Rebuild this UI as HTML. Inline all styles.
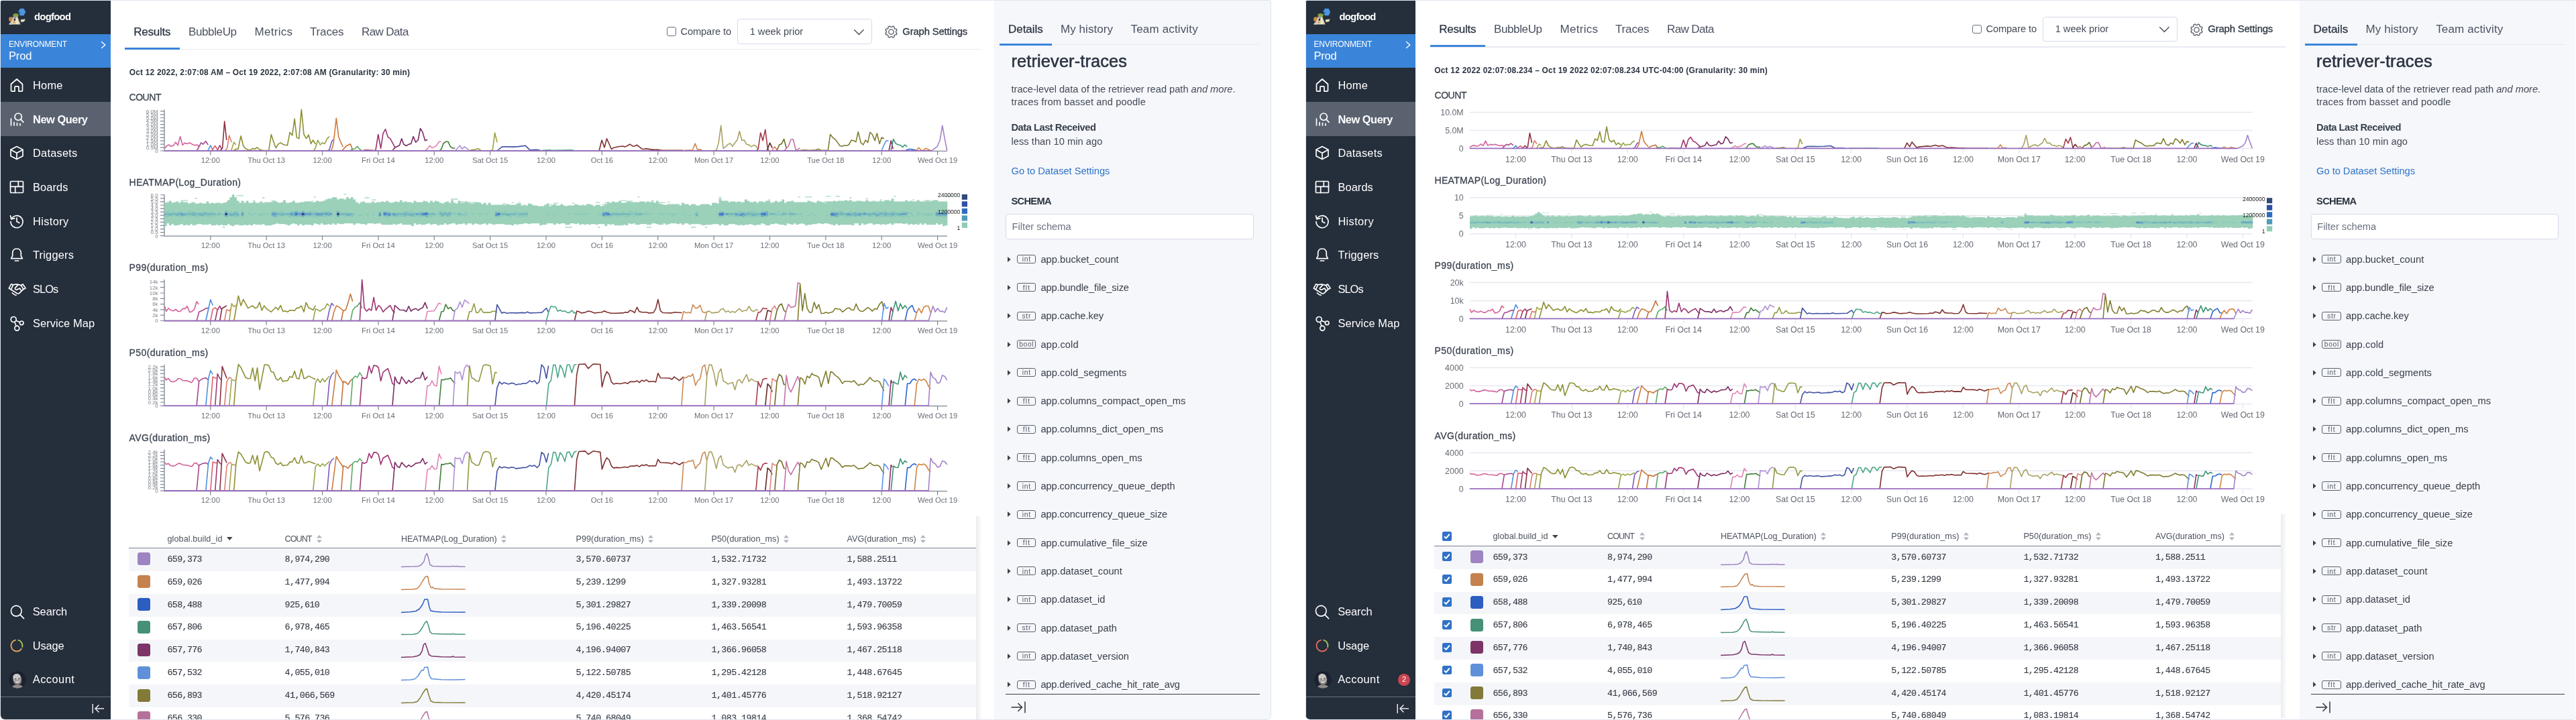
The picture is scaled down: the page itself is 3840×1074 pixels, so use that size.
<!DOCTYPE html><html lang="en"><head><meta charset="utf-8"><title>Query results</title><style>
html,body{margin:0;padding:0;background:#fff;}
body{width:3840px;height:1074px;overflow:hidden;position:relative;font-family:"Liberation Sans",sans-serif;}
.panel{position:absolute;top:0;width:1895px;height:1074px;overflow:hidden;background:transparent;will-change:transform;}
.t{position:absolute;white-space:nowrap;}
svg{overflow:visible;}
</style></head><body><section class="panel" style="left:0px"><div style="position:absolute;left:1px;top:1px;width:164px;height:1071.6px;background:#252e3b;border-radius:1.500px 0 0 6px;"></div><svg style="position:absolute;left:0px;top:0px;" width="44" height="44" viewBox="0 0 44 44"><path d="M27.100 18 29.900 12.800h5.600L38.200 18l-2.700 5.300h-5.600z" fill="#4a96e4"/><path d="M26.500 18.200h3.600v1.600h-3z" fill="#252e3b"/><circle cx="16.400" cy="28.700" r="3.400" fill="#c98848"/><path d="M21 21l4.200 1 2.800 8 2.600 6.500H13.500L18 30z" fill="#d9d3b2"/><ellipse cx="23.500" cy="23" rx="4.200" ry="3" fill="#86a043"/><ellipse cx="22.300" cy="26" rx="2" ry="2.200" fill="#9097a0"/><circle cx="21.800" cy="29.600" r="1.300" fill="#10131a"/><path d="M24.500 24l2 6 .5 6h-3z" fill="#eee9cf"/><circle cx="21" cy="33.300" r="1.300" fill="#dc8a3c"/><path d="M14 34.500l3-2 1.500 4H13.200z" fill="#c9c9c9"/><path d="M30.800 29.200 37.800 28.600 36 32.200 31.300 33z" fill="#e3e0b6"/></svg><span class="t" style="left:51px;top:15.8px;font-size:14.8px;line-height:19px;color:#fff;font-weight:700;letter-spacing:-0.7px;">dogfood</span><div style="position:absolute;left:1px;top:50.8px;width:164px;height:50.4px;background:#3a85d9;"></div><span class="t" style="left:13px;top:58.2px;font-size:12px;line-height:16px;color:#fff;letter-spacing:-0.17px;">ENVIRONMENT</span><span class="t" style="left:13px;top:73.1px;font-size:16.6px;line-height:22px;color:#fff;letter-spacing:-0.22px;">Prod</span><svg style="position:absolute;left:149px;top:60.5px;" width="10" height="12" viewBox="0 0 10 12"><path d="M2.500 1.500 7.800 6 2.500 10.500" fill="none" stroke="#fff" stroke-width="1.400" stroke-linecap="round" stroke-linejoin="round"/></svg><svg style="position:absolute;left:13.2px;top:114.9px;" width="24" height="24" viewBox="0 0 24 24"><path fill="none" stroke="#fff" stroke-width="1.7" stroke-linecap="round" stroke-linejoin="round" d="M3.5 10.5 12 3l8.5 7.5V20a1.2 1.2 0 0 1-1.2 1.2H15v-6.4a1 1 0 0 0-1-1h-4a1 1 0 0 0-1 1v6.4H4.7A1.2 1.2 0 0 1 3.500 20z"/></svg><span class="t" style="left:49px;top:116.9px;font-size:16.4px;line-height:21px;color:#fff;letter-spacing:0.22px;">Home</span><div style="position:absolute;left:1px;top:152.1px;width:164px;height:50.7px;background:#5a6270;"></div><svg style="position:absolute;left:13.2px;top:165.6px;" width="24" height="24" viewBox="0 0 24 24"><g fill="none" stroke="#fff" stroke-width="1.7" stroke-linecap="round" stroke-linejoin="round"><circle cx="14.2" cy="8.2" r="5.2"/><path d="M18 12.2 22 16.400M3.5 11v10M8 16.500V21M12.500 17.500V21M17 18.500V21"/></g></svg><span class="t" style="left:49px;top:167.6px;font-size:16.4px;line-height:21px;color:#fff;font-weight:700;letter-spacing:-0.46px;">New Query</span><svg style="position:absolute;left:13.2px;top:216.3px;" width="24" height="24" viewBox="0 0 24 24"><g fill="none" stroke="#fff" stroke-width="1.7" stroke-linecap="round" stroke-linejoin="round"><path d="M12 2.500 21 7.300v9.400L12 21.500 3 16.700V7.300z"/><path d="M3.300 7.500 12 12.200l8.700-4.700M12 12.200v9"/></g></svg><span class="t" style="left:49px;top:218.3px;font-size:16.4px;line-height:21px;color:#fff;letter-spacing:0.23px;">Datasets</span><svg style="position:absolute;left:13.2px;top:267px;" width="24" height="24" viewBox="0 0 24 24"><g fill="none" stroke="#fff" stroke-width="1.7" stroke-linecap="round" stroke-linejoin="round"><rect x="2.500" y="3.500" width="19" height="17" rx="1.200"/><path d="M2.500 11.300h19M14.300 3.500v7.800M9.700 11.300v9.200"/></g></svg><span class="t" style="left:49px;top:269px;font-size:16.4px;line-height:21px;color:#fff;letter-spacing:0.09px;">Boards</span><svg style="position:absolute;left:13.2px;top:317.7px;" width="24" height="24" viewBox="0 0 24 24"><g fill="none" stroke="#fff" stroke-width="1.7" stroke-linecap="round" stroke-linejoin="round"><path d="M4.200 8.200A9 9 0 1 1 3 12.500"/><path d="M2.600 3.800 3.800 8.800 8.800 7.600"/><path d="M12 7v5.400l3.800 2.200"/></g></svg><span class="t" style="left:49px;top:319.7px;font-size:16.4px;line-height:21px;color:#fff;letter-spacing:0.37px;">History</span><svg style="position:absolute;left:13.2px;top:368.4px;" width="24" height="24" viewBox="0 0 24 24"><g fill="none" stroke="#fff" stroke-width="1.7" stroke-linecap="round" stroke-linejoin="round"><path d="M12 2.800c-3.900 0-6.300 2.900-6.300 6.600v4.300L3.600 17.600h16.800l-2.100-3.900V9.400c0-3.700-2.400-6.600-6.300-6.600z"/><path d="M9.300 21h5.400"/></g></svg><span class="t" style="left:49px;top:370.4px;font-size:16.4px;line-height:21px;color:#fff;letter-spacing:0.2px;">Triggers</span><svg style="position:absolute;left:12.75px;top:423.3px;" width="25.4" height="18.2" viewBox="0 0 25.400 18.200"><g fill="none" stroke="#fff" stroke-width="1.7" stroke-linecap="round" stroke-linejoin="round" stroke-width="1.600"><path d="M3.700.8 6.600 1.800 3.400 9 .3 7.100z"/><path d="M21.100 1 18.500 2.600 21.900 8.400 25.100 6.900z"/><path d="M6.600 1.800C9 1.200 11 .9 12.500 1.100L18.500 2.600"/><path d="M13.400 2.400 9.400 6.900c-.5 1.300 1.200 2.600 2.700 2.300l4.300-2.300 2.400 3.600"/><path d="M3.400 9l9.300 5.700c1 .5 2 .5 2.800-.1L21.900 8.400"/><path d="M5.300 14c1.800 1.800 3.700 2.900 5.800 3.400"/></g></svg><span class="t" style="left:49px;top:421.1px;font-size:16.4px;line-height:21px;color:#fff;letter-spacing:-0.93px;">SLOs</span><svg style="position:absolute;left:13.2px;top:469.8px;" width="24" height="24" viewBox="0 0 24 24"><g fill="none" stroke="#fff" stroke-width="1.7" stroke-linecap="round" stroke-linejoin="round"><circle cx="7.200" cy="6.500" r="4"/><circle cx="19.200" cy="11.800" r="2.800"/><circle cx="12.300" cy="19.600" r="3.500"/><path d="M10.900 8.200 16.600 10.700M8.900 10.200 11 16.300"/></g></svg><span class="t" style="left:49px;top:471.8px;font-size:16.4px;line-height:21px;color:#fff;letter-spacing:0.09px;">Service Map</span><svg style="position:absolute;left:13.55px;top:900.85px;" width="23.5" height="23.5" viewBox="0 0 24 24"><g fill="none" stroke="#fff" stroke-width="1.7" stroke-linecap="round" stroke-linejoin="round" stroke-width="1.800"><circle cx="10.500" cy="10.500" r="8"/><path d="M16.300 16.300 22 22"/></g></svg><span class="t" style="left:48.8px;top:902.2px;font-size:16.4px;line-height:21px;color:#fff;letter-spacing:-0.11px;">Search</span><svg style="position:absolute;left:13.3px;top:951px;" width="24" height="24" viewBox="0 0 24 24"><circle cx="12" cy="12" r="8.500" fill="none" stroke="#dba25f" stroke-width="1.900" stroke-dasharray="34.100 19.300" transform="rotate(30 12 12)"/><circle cx="12" cy="12" r="8.500" fill="none" stroke="#9fc05a" stroke-width="1.900" stroke-dasharray="14.800 38.600" transform="rotate(-80 12 12)"/></svg><span class="t" style="left:48.8px;top:952.8px;font-size:16.4px;line-height:21px;color:#fff;letter-spacing:-0.12px;">Usage</span><svg style="position:absolute;left:13.3px;top:1001px;" width="26" height="26" viewBox="0 0 26 26"><defs><clipPath id="av0"><circle cx="13" cy="13" r="12.700"/></clipPath></defs><circle cx="13" cy="13" r="12.700" fill="#1b2130"/><g clip-path="url(#av0)"><path d="M3 27q1.500-5.500 7-6.200h6q5.500.7 7 6.200z" fill="#8f8c8c"/><ellipse cx="12.800" cy="12.300" rx="6.300" ry="8.200" fill="#a7a2a0" transform="rotate(-6 13 13)"/><ellipse cx="12.300" cy="8.300" rx="5.600" ry="4.400" fill="#cbc7c5" transform="rotate(-6 13 13)"/><path d="M7.500 14.500q5.500 8.500 11.500-1l-.3 4.500q-5.200 6-10.600.5z" fill="#7b7573"/><ellipse cx="10.300" cy="11.800" rx="1.100" ry=".7" fill="#3c3a3a"/><ellipse cx="15.300" cy="11.300" rx="1.100" ry=".7" fill="#3c3a3a"/><path d="M10.300 15.800q3 2.400 5.800-.4" stroke="#f2f0ee" stroke-width="1.200" fill="none"/></g></svg><span class="t" style="left:48.8px;top:1003.4px;font-size:16.4px;line-height:21px;color:#fff;letter-spacing:0.46px;">Account</span><div style="position:absolute;left:1px;top:1039.3px;width:164px;height:1px;background:#6a7180;"></div><svg style="position:absolute;left:137px;top:1049px;" width="19" height="16" viewBox="0 0 19 16"><path d="M1.200 1v14M18 8H5M10.500 2.500 5 8l5.500 5.500" fill="none" stroke="#e6e8ec" stroke-width="1.500"/></svg><span class="t" style="left:199.3px;top:36.6px;font-size:17px;line-height:22px;color:#2b3340;letter-spacing:-0.23px;-webkit-text-stroke:0.25px #2b3340;">Results</span><span class="t" style="left:281px;top:36.6px;font-size:17px;line-height:22px;color:#4a5160;letter-spacing:-0.38px;">BubbleUp</span><span class="t" style="left:379.5px;top:36.6px;font-size:17px;line-height:22px;color:#4a5160;letter-spacing:0.29px;">Metrics</span><span class="t" style="left:462px;top:36.6px;font-size:17px;line-height:22px;color:#4a5160;letter-spacing:-0.15px;">Traces</span><span class="t" style="left:539px;top:36.6px;font-size:17px;line-height:22px;color:#4a5160;letter-spacing:-0.61px;">Raw Data</span><div style="position:absolute;left:186.2px;top:72.5px;width:1274.4px;height:1.5px;background:#e8ebf2;"></div><div style="position:absolute;left:186.2px;top:70.7px;width:81.6px;height:3px;background:#3a85d9;"></div><div style="position:absolute;left:994px;top:40.2px;width:13.6px;height:13.4px;border:1.500px solid #6b7280;border-radius:3px;box-sizing:border-box;background:#fff;"></div><span class="t" style="left:1014.4px;top:37.5px;font-size:14.7px;line-height:19px;color:#444b57;letter-spacing:-0.12px;">Compare to</span><div style="position:absolute;left:1099px;top:28.1px;width:200.7px;height:37.6px;border:1.500px solid #d3dae8;border-radius:4.500px;box-sizing:border-box;background:#fff;"></div><span class="t" style="left:1117.7px;top:37.5px;font-size:14.7px;line-height:19px;color:#444b57;letter-spacing:-0.05px;">1 week prior</span><svg style="position:absolute;left:1271.5px;top:42.5px;" width="17" height="10" viewBox="0 0 17 10"><path d="M1.200 1.200 8.400 8.400 15.600 1.200" fill="none" stroke="#555b66" stroke-width="1.500"/></svg><svg style="position:absolute;left:1318.3px;top:36.9px;" width="21" height="21" viewBox="0 0 24 24"><g fill="none" stroke="#555b66" stroke-width="1.500" stroke-linejoin="round"><circle cx="12" cy="12" r="4.200"/><path d="M21.27 15.84L21 16.44L20.69 17.02L19.57 17.06L18.48 16.97L18.14 17.38L17.77 17.77L17.38 18.14L16.97 18.48L17.06 19.57L17.02 20.69L16.44 21L15.84 21.27L15.23 21.5L14.6 21.7L13.78 20.93L13.07 20.09L12.53 20.15L12 20.16L11.47 20.15L10.93 20.09L10.22 20.93L9.4 21.7L8.77 21.5L8.16 21.27L7.56 21L6.98 20.69L6.94 19.57L7.03 18.48L6.62 18.14L6.23 17.77L5.86 17.38L5.52 16.97L4.43 17.06L3.31 17.02L3 16.44L2.73 15.84L2.5 15.23L2.3 14.6L3.07 13.78L3.91 13.07L3.85 12.53L3.84 12L3.85 11.47L3.91 10.93L3.07 10.22L2.3 9.4L2.5 8.77L2.73 8.16L3 7.56L3.31 6.98L4.43 6.94L5.52 7.03L5.86 6.62L6.23 6.23L6.62 5.86L7.03 5.52L6.94 4.43L6.98 3.31L7.56 3L8.16 2.73L8.77 2.5L9.4 2.3L10.22 3.07L10.93 3.91L11.47 3.85L12 3.84L12.53 3.85L13.07 3.91L13.78 3.07L14.6 2.3L15.23 2.5L15.84 2.73L16.44 3L17.02 3.31L17.06 4.43L16.97 5.52L17.38 5.86L17.77 6.23L18.14 6.62L18.48 7.03L19.57 6.94L20.69 6.98L21 7.56L21.27 8.16L21.5 8.77L21.7 9.4L20.93 10.22L20.09 10.93L20.15 11.47L20.16 12L20.15 12.53L20.09 13.07L20.93 13.78L21.7 14.6L21.5 15.23z"/></g></svg><span class="t" style="left:1345.3px;top:37.5px;font-size:14.9px;line-height:19px;color:#2f3744;letter-spacing:-0.18px;-webkit-text-stroke:0.3px #2f3744;">Graph Settings</span><span class="t" style="left:192.75px;top:100.95px;font-size:11.9px;line-height:15px;color:#2b3340;font-weight:700;letter-spacing:0.22px;">Oct 12 2022, 2:07:08 AM &#8211; Oct 19 2022, 2:07:08 AM (Granularity: 30 min)</span><span class="t" style="left:192.5px;top:136.1px;font-size:14px;line-height:18px;color:#3c4350;letter-spacing:-0.45px;-webkit-text-stroke:0.3px #3c4350;">COUNT</span><span class="t" style="left:192.5px;top:263px;font-size:14px;line-height:18px;color:#3c4350;letter-spacing:0.32px;-webkit-text-stroke:0.3px #3c4350;">HEATMAP(Log_Duration)</span><span class="t" style="left:192.5px;top:389.9px;font-size:14px;line-height:18px;color:#3c4350;letter-spacing:0.43px;-webkit-text-stroke:0.3px #3c4350;">P99(duration_ms)</span><span class="t" style="left:192.5px;top:516.8px;font-size:14px;line-height:18px;color:#3c4350;letter-spacing:0.43px;-webkit-text-stroke:0.3px #3c4350;">P50(duration_ms)</span><span class="t" style="left:192.5px;top:643.7px;font-size:14px;line-height:18px;color:#3c4350;letter-spacing:0.39px;-webkit-text-stroke:0.3px #3c4350;">AVG(duration_ms)</span><svg style="position:absolute;left:0px;top:0px;font-family:'Liberation Sans', sans-serif;" width="1894" height="760" viewBox="0 0 1894 760"><path d="M245 163.5V225.4H1412" fill="none" stroke="#7f8694" stroke-width="1.300"/><text x="235.600" y="227.8" text-anchor="end" font-size="8" fill="#7d828b">0</text><text x="235.600" y="222.88" text-anchor="end" font-size="8" fill="#7d828b">0.5M</text><text x="235.600" y="217.95" text-anchor="end" font-size="8" fill="#7d828b">1.0M</text><text x="235.600" y="213.03" text-anchor="end" font-size="8" fill="#7d828b">1.5M</text><text x="235.600" y="208.1" text-anchor="end" font-size="8" fill="#7d828b">2.0M</text><text x="235.600" y="203.18" text-anchor="end" font-size="8" fill="#7d828b">2.5M</text><text x="235.600" y="198.25" text-anchor="end" font-size="8" fill="#7d828b">3.0M</text><text x="235.600" y="193.33" text-anchor="end" font-size="8" fill="#7d828b">3.5M</text><text x="235.600" y="188.4" text-anchor="end" font-size="8" fill="#7d828b">4.0M</text><text x="235.600" y="183.48" text-anchor="end" font-size="8" fill="#7d828b">4.5M</text><text x="235.600" y="178.55" text-anchor="end" font-size="8" fill="#7d828b">5.0M</text><text x="235.600" y="173.62" text-anchor="end" font-size="8" fill="#7d828b">5.5M</text><text x="235.600" y="168.7" text-anchor="end" font-size="8" fill="#7d828b">6.0M</text><path d="M239 225h6M239 220.07h6M239 215.15h6M239 210.22h6M239 205.3h6M239 200.38h6M239 195.45h6M239 190.53h6M239 185.6h6M239 180.68h6M239 175.75h6M239 170.82h6M239 165.9h6M313.8 225v6.500M397.17 225v6.500M480.54 225v6.500M563.91 225v6.500M647.28 225v6.500M730.65 225v6.500M814.02 225v6.500M897.39 225v6.500M980.76 225v6.500M1064.13 225v6.500M1147.5 225v6.500M1230.87 225v6.500M1314.24 225v6.500M1397.61 225v6.500" stroke="#7f8694" stroke-width="1.200" fill="none"/><text x="313.8" y="243.2" text-anchor="middle" font-size="11.300" fill="#6a6f78">12:00</text><text x="397.17" y="243.2" text-anchor="middle" font-size="11.300" fill="#6a6f78">Thu Oct 13</text><text x="480.54" y="243.2" text-anchor="middle" font-size="11.300" fill="#6a6f78">12:00</text><text x="563.91" y="243.2" text-anchor="middle" font-size="11.300" fill="#6a6f78">Fri Oct 14</text><text x="647.28" y="243.2" text-anchor="middle" font-size="11.300" fill="#6a6f78">12:00</text><text x="730.65" y="243.2" text-anchor="middle" font-size="11.300" fill="#6a6f78">Sat Oct 15</text><text x="814.02" y="243.2" text-anchor="middle" font-size="11.300" fill="#6a6f78">12:00</text><text x="897.39" y="243.2" text-anchor="middle" font-size="11.300" fill="#6a6f78">Oct 16</text><text x="980.76" y="243.2" text-anchor="middle" font-size="11.300" fill="#6a6f78">12:00</text><text x="1064.13" y="243.2" text-anchor="middle" font-size="11.300" fill="#6a6f78">Mon Oct 17</text><text x="1147.5" y="243.2" text-anchor="middle" font-size="11.300" fill="#6a6f78">12:00</text><text x="1230.87" y="243.2" text-anchor="middle" font-size="11.300" fill="#6a6f78">Tue Oct 18</text><text x="1314.24" y="243.2" text-anchor="middle" font-size="11.300" fill="#6a6f78">12:00</text><text x="1397.61" y="243.2" text-anchor="middle" font-size="11.300" fill="#6a6f78">Wed Oct 19</text><path d="M245 290.2V352.1H1412" fill="none" stroke="#7f8694" stroke-width="1.300"/><text x="235.600" y="354.5" text-anchor="end" font-size="8" fill="#7d828b">0</text><text x="235.600" y="349.42" text-anchor="end" font-size="8" fill="#7d828b">0.5</text><text x="235.600" y="344.34" text-anchor="end" font-size="8" fill="#7d828b">1.0</text><text x="235.600" y="339.26" text-anchor="end" font-size="8" fill="#7d828b">1.5</text><text x="235.600" y="334.18" text-anchor="end" font-size="8" fill="#7d828b">2.0</text><text x="235.600" y="329.1" text-anchor="end" font-size="8" fill="#7d828b">2.5</text><text x="235.600" y="324.02" text-anchor="end" font-size="8" fill="#7d828b">3.0</text><text x="235.600" y="318.94" text-anchor="end" font-size="8" fill="#7d828b">3.5</text><text x="235.600" y="313.86" text-anchor="end" font-size="8" fill="#7d828b">4.0</text><text x="235.600" y="308.78" text-anchor="end" font-size="8" fill="#7d828b">4.5</text><text x="235.600" y="303.7" text-anchor="end" font-size="8" fill="#7d828b">5.0</text><text x="235.600" y="298.62" text-anchor="end" font-size="8" fill="#7d828b">5.5</text><text x="235.600" y="293.54" text-anchor="end" font-size="8" fill="#7d828b">6.0</text><path d="M239 351.7h6M239 346.62h6M239 341.54h6M239 336.46h6M239 331.38h6M239 326.3h6M239 321.22h6M239 316.14h6M239 311.06h6M239 305.98h6M239 300.9h6M239 295.82h6M239 290.74h6M313.8 351.7v6.500M397.17 351.7v6.500M480.54 351.7v6.500M563.91 351.7v6.500M647.28 351.7v6.500M730.65 351.7v6.500M814.02 351.7v6.500M897.39 351.7v6.500M980.76 351.7v6.500M1064.13 351.7v6.500M1147.5 351.7v6.500M1230.87 351.7v6.500M1314.24 351.7v6.500M1397.61 351.7v6.500" stroke="#7f8694" stroke-width="1.200" fill="none"/><text x="313.8" y="369.9" text-anchor="middle" font-size="11.300" fill="#6a6f78">12:00</text><text x="397.17" y="369.9" text-anchor="middle" font-size="11.300" fill="#6a6f78">Thu Oct 13</text><text x="480.54" y="369.9" text-anchor="middle" font-size="11.300" fill="#6a6f78">12:00</text><text x="563.91" y="369.9" text-anchor="middle" font-size="11.300" fill="#6a6f78">Fri Oct 14</text><text x="647.28" y="369.9" text-anchor="middle" font-size="11.300" fill="#6a6f78">12:00</text><text x="730.65" y="369.9" text-anchor="middle" font-size="11.300" fill="#6a6f78">Sat Oct 15</text><text x="814.02" y="369.9" text-anchor="middle" font-size="11.300" fill="#6a6f78">12:00</text><text x="897.39" y="369.9" text-anchor="middle" font-size="11.300" fill="#6a6f78">Oct 16</text><text x="980.76" y="369.9" text-anchor="middle" font-size="11.300" fill="#6a6f78">12:00</text><text x="1064.13" y="369.9" text-anchor="middle" font-size="11.300" fill="#6a6f78">Mon Oct 17</text><text x="1147.5" y="369.9" text-anchor="middle" font-size="11.300" fill="#6a6f78">12:00</text><text x="1230.87" y="369.9" text-anchor="middle" font-size="11.300" fill="#6a6f78">Tue Oct 18</text><text x="1314.24" y="369.9" text-anchor="middle" font-size="11.300" fill="#6a6f78">12:00</text><text x="1397.61" y="369.9" text-anchor="middle" font-size="11.300" fill="#6a6f78">Wed Oct 19</text><path d="M245 417V478.9H1412" fill="none" stroke="#7f8694" stroke-width="1.300"/><text x="235.600" y="481.3" text-anchor="end" font-size="8" fill="#7d828b">0</text><text x="235.600" y="473" text-anchor="end" font-size="8" fill="#7d828b">2k</text><text x="235.600" y="464.7" text-anchor="end" font-size="8" fill="#7d828b">4k</text><text x="235.600" y="456.4" text-anchor="end" font-size="8" fill="#7d828b">6k</text><text x="235.600" y="448.1" text-anchor="end" font-size="8" fill="#7d828b">8k</text><text x="235.600" y="439.8" text-anchor="end" font-size="8" fill="#7d828b">10k</text><text x="235.600" y="431.5" text-anchor="end" font-size="8" fill="#7d828b">12k</text><text x="235.600" y="423.2" text-anchor="end" font-size="8" fill="#7d828b">14k</text><path d="M239 478.5h6M239 470.2h6M239 461.9h6M239 453.6h6M239 445.3h6M239 437h6M239 428.7h6M239 420.4h6M313.8 478.5v6.500M397.17 478.5v6.500M480.54 478.5v6.500M563.91 478.5v6.500M647.28 478.5v6.500M730.65 478.5v6.500M814.02 478.5v6.500M897.39 478.5v6.500M980.76 478.5v6.500M1064.13 478.5v6.500M1147.5 478.5v6.500M1230.87 478.5v6.500M1314.24 478.5v6.500M1397.61 478.5v6.500" stroke="#7f8694" stroke-width="1.200" fill="none"/><text x="313.8" y="496.7" text-anchor="middle" font-size="11.300" fill="#6a6f78">12:00</text><text x="397.17" y="496.7" text-anchor="middle" font-size="11.300" fill="#6a6f78">Thu Oct 13</text><text x="480.54" y="496.7" text-anchor="middle" font-size="11.300" fill="#6a6f78">12:00</text><text x="563.91" y="496.7" text-anchor="middle" font-size="11.300" fill="#6a6f78">Fri Oct 14</text><text x="647.28" y="496.7" text-anchor="middle" font-size="11.300" fill="#6a6f78">12:00</text><text x="730.65" y="496.7" text-anchor="middle" font-size="11.300" fill="#6a6f78">Sat Oct 15</text><text x="814.02" y="496.7" text-anchor="middle" font-size="11.300" fill="#6a6f78">12:00</text><text x="897.39" y="496.7" text-anchor="middle" font-size="11.300" fill="#6a6f78">Oct 16</text><text x="980.76" y="496.7" text-anchor="middle" font-size="11.300" fill="#6a6f78">12:00</text><text x="1064.13" y="496.7" text-anchor="middle" font-size="11.300" fill="#6a6f78">Mon Oct 17</text><text x="1147.5" y="496.7" text-anchor="middle" font-size="11.300" fill="#6a6f78">12:00</text><text x="1230.87" y="496.7" text-anchor="middle" font-size="11.300" fill="#6a6f78">Tue Oct 18</text><text x="1314.24" y="496.7" text-anchor="middle" font-size="11.300" fill="#6a6f78">12:00</text><text x="1397.61" y="496.7" text-anchor="middle" font-size="11.300" fill="#6a6f78">Wed Oct 19</text><path d="M245 543.9V605.7H1412" fill="none" stroke="#7f8694" stroke-width="1.300"/><text x="235.600" y="608.1" text-anchor="end" font-size="8" fill="#7d828b">0</text><text x="235.600" y="602.78" text-anchor="end" font-size="8" fill="#7d828b">0.2k</text><text x="235.600" y="597.46" text-anchor="end" font-size="8" fill="#7d828b">0.4k</text><text x="235.600" y="592.14" text-anchor="end" font-size="8" fill="#7d828b">0.6k</text><text x="235.600" y="586.82" text-anchor="end" font-size="8" fill="#7d828b">0.8k</text><text x="235.600" y="581.5" text-anchor="end" font-size="8" fill="#7d828b">1.0k</text><text x="235.600" y="576.18" text-anchor="end" font-size="8" fill="#7d828b">1.2k</text><text x="235.600" y="570.86" text-anchor="end" font-size="8" fill="#7d828b">1.4k</text><text x="235.600" y="565.54" text-anchor="end" font-size="8" fill="#7d828b">1.6k</text><text x="235.600" y="560.22" text-anchor="end" font-size="8" fill="#7d828b">1.8k</text><text x="235.600" y="554.9" text-anchor="end" font-size="8" fill="#7d828b">2.0k</text><text x="235.600" y="549.58" text-anchor="end" font-size="8" fill="#7d828b">2.2k</text><path d="M239 605.3h6M239 599.98h6M239 594.66h6M239 589.34h6M239 584.02h6M239 578.7h6M239 573.38h6M239 568.06h6M239 562.74h6M239 557.42h6M239 552.1h6M239 546.78h6M313.8 605.3v6.500M397.17 605.3v6.500M480.54 605.3v6.500M563.91 605.3v6.500M647.28 605.3v6.500M730.65 605.3v6.500M814.02 605.3v6.500M897.39 605.3v6.500M980.76 605.3v6.500M1064.13 605.3v6.500M1147.5 605.3v6.500M1230.87 605.3v6.500M1314.24 605.3v6.500M1397.61 605.3v6.500" stroke="#7f8694" stroke-width="1.200" fill="none"/><text x="313.8" y="623.5" text-anchor="middle" font-size="11.300" fill="#6a6f78">12:00</text><text x="397.17" y="623.5" text-anchor="middle" font-size="11.300" fill="#6a6f78">Thu Oct 13</text><text x="480.54" y="623.5" text-anchor="middle" font-size="11.300" fill="#6a6f78">12:00</text><text x="563.91" y="623.5" text-anchor="middle" font-size="11.300" fill="#6a6f78">Fri Oct 14</text><text x="647.28" y="623.5" text-anchor="middle" font-size="11.300" fill="#6a6f78">12:00</text><text x="730.65" y="623.5" text-anchor="middle" font-size="11.300" fill="#6a6f78">Sat Oct 15</text><text x="814.02" y="623.5" text-anchor="middle" font-size="11.300" fill="#6a6f78">12:00</text><text x="897.39" y="623.5" text-anchor="middle" font-size="11.300" fill="#6a6f78">Oct 16</text><text x="980.76" y="623.5" text-anchor="middle" font-size="11.300" fill="#6a6f78">12:00</text><text x="1064.13" y="623.5" text-anchor="middle" font-size="11.300" fill="#6a6f78">Mon Oct 17</text><text x="1147.5" y="623.5" text-anchor="middle" font-size="11.300" fill="#6a6f78">12:00</text><text x="1230.87" y="623.5" text-anchor="middle" font-size="11.300" fill="#6a6f78">Tue Oct 18</text><text x="1314.24" y="623.5" text-anchor="middle" font-size="11.300" fill="#6a6f78">12:00</text><text x="1397.61" y="623.5" text-anchor="middle" font-size="11.300" fill="#6a6f78">Wed Oct 19</text><path d="M245 670.6V732.6H1412" fill="none" stroke="#7f8694" stroke-width="1.300"/><text x="235.600" y="735" text-anchor="end" font-size="8" fill="#7d828b">0</text><text x="235.600" y="730.2" text-anchor="end" font-size="8" fill="#7d828b">0.2k</text><text x="235.600" y="725.4" text-anchor="end" font-size="8" fill="#7d828b">0.4k</text><text x="235.600" y="720.6" text-anchor="end" font-size="8" fill="#7d828b">0.6k</text><text x="235.600" y="715.8" text-anchor="end" font-size="8" fill="#7d828b">0.8k</text><text x="235.600" y="711" text-anchor="end" font-size="8" fill="#7d828b">1.0k</text><text x="235.600" y="706.2" text-anchor="end" font-size="8" fill="#7d828b">1.2k</text><text x="235.600" y="701.4" text-anchor="end" font-size="8" fill="#7d828b">1.4k</text><text x="235.600" y="696.6" text-anchor="end" font-size="8" fill="#7d828b">1.6k</text><text x="235.600" y="691.8" text-anchor="end" font-size="8" fill="#7d828b">1.8k</text><text x="235.600" y="687" text-anchor="end" font-size="8" fill="#7d828b">2.0k</text><text x="235.600" y="682.2" text-anchor="end" font-size="8" fill="#7d828b">2.2k</text><text x="235.600" y="677.4" text-anchor="end" font-size="8" fill="#7d828b">2.4k</text><path d="M239 732.2h6M239 727.4h6M239 722.6h6M239 717.8h6M239 713h6M239 708.2h6M239 703.4h6M239 698.6h6M239 693.8h6M239 689h6M239 684.2h6M239 679.4h6M239 674.6h6M313.8 732.2v6.500M397.17 732.2v6.500M480.54 732.2v6.500M563.91 732.2v6.500M647.28 732.2v6.500M730.65 732.2v6.500M814.02 732.2v6.500M897.39 732.2v6.500M980.76 732.2v6.500M1064.13 732.2v6.500M1147.5 732.2v6.500M1230.87 732.2v6.500M1314.24 732.2v6.500M1397.61 732.2v6.500" stroke="#7f8694" stroke-width="1.200" fill="none"/><text x="313.8" y="750.4" text-anchor="middle" font-size="11.300" fill="#6a6f78">12:00</text><text x="397.17" y="750.4" text-anchor="middle" font-size="11.300" fill="#6a6f78">Thu Oct 13</text><text x="480.54" y="750.4" text-anchor="middle" font-size="11.300" fill="#6a6f78">12:00</text><text x="563.91" y="750.4" text-anchor="middle" font-size="11.300" fill="#6a6f78">Fri Oct 14</text><text x="647.28" y="750.4" text-anchor="middle" font-size="11.300" fill="#6a6f78">12:00</text><text x="730.65" y="750.4" text-anchor="middle" font-size="11.300" fill="#6a6f78">Sat Oct 15</text><text x="814.02" y="750.4" text-anchor="middle" font-size="11.300" fill="#6a6f78">12:00</text><text x="897.39" y="750.4" text-anchor="middle" font-size="11.300" fill="#6a6f78">Oct 16</text><text x="980.76" y="750.4" text-anchor="middle" font-size="11.300" fill="#6a6f78">12:00</text><text x="1064.13" y="750.4" text-anchor="middle" font-size="11.300" fill="#6a6f78">Mon Oct 17</text><text x="1147.5" y="750.4" text-anchor="middle" font-size="11.300" fill="#6a6f78">12:00</text><text x="1230.87" y="750.4" text-anchor="middle" font-size="11.300" fill="#6a6f78">Tue Oct 18</text><text x="1314.24" y="750.4" text-anchor="middle" font-size="11.300" fill="#6a6f78">12:00</text><text x="1397.61" y="750.4" text-anchor="middle" font-size="11.300" fill="#6a6f78">Wed Oct 19</text><path d="M245 302.5h3.77V337.28h-3.77zM248.47 301.47h3.77V333.19h-3.77zM251.95 299.43h3.77V336.25h-3.77zM255.42 302.5h3.77V334.21h-3.77zM258.89 301.47h3.77V336.25h-3.77zM262.37 300.45h3.77V336.25h-3.77zM265.84 302.5h3.77V335.23h-3.77zM269.31 300.45h3.77V334.21h-3.77zM272.79 301.47h3.77V336.25h-3.77zM276.26 301.47h3.77V335.23h-3.77zM279.73 303.52h3.77V336.25h-3.77zM283.21 302.5h3.77V334.21h-3.77zM286.68 301.47h3.77V336.25h-3.77zM290.15 303.52h3.77V335.23h-3.77zM293.62 303.52h3.77V334.21h-3.77zM297.1 302.5h3.77V334.21h-3.77zM300.57 303.52h3.77V335.23h-3.77zM304.04 303.52h3.77V335.23h-3.77zM307.52 300.45h3.77V335.23h-3.77zM310.99 303.52h3.77V334.21h-3.77zM314.46 302.5h3.77V336.25h-3.77zM317.94 303.52h3.77V336.25h-3.77zM321.41 302.5h3.77V335.23h-3.77zM324.88 302.5h3.77V336.25h-3.77zM328.36 303.52h3.77V335.23h-3.77zM331.83 302.5h3.77V336.25h-3.77zM335.3 301.47h3.77V336.25h-3.77zM338.78 298.4h3.77V334.21h-3.77zM342.25 294.31h3.77V336.25h-3.77zM345.72 290.22h3.77V337.28h-3.77zM349.2 294.31h3.77V335.23h-3.77zM352.67 299.43h3.77V335.23h-3.77zM356.14 302.5h3.77V336.25h-3.77zM359.62 299.43h3.77V336.25h-3.77zM363.09 302.5h3.77V335.23h-3.77zM366.56 299.43h3.77V336.25h-3.77zM370.04 302.5h3.77V335.23h-3.77zM373.51 302.5h3.77V336.25h-3.77zM376.98 300.45h3.77V334.21h-3.77zM380.46 302.5h3.77V335.23h-3.77zM383.93 302.5h3.77V335.23h-3.77zM387.4 300.45h3.77V335.23h-3.77zM390.88 302.5h3.77V334.21h-3.77zM394.35 301.47h3.77V336.25h-3.77zM397.82 301.47h3.77V336.25h-3.77zM401.29 301.47h3.77V336.25h-3.77zM404.77 300.45h3.77V335.23h-3.77zM408.24 299.43h3.77V334.21h-3.77zM411.71 301.47h3.77V333.19h-3.77zM415.19 302.5h3.77V334.21h-3.77zM418.66 301.47h3.77V334.21h-3.77zM422.13 298.4h3.77V334.21h-3.77zM425.61 302.5h3.77V335.23h-3.77zM429.08 302.5h3.77V336.25h-3.77zM432.55 301.47h3.77V334.21h-3.77zM436.03 299.43h3.77V333.19h-3.77zM439.5 302.5h3.77V334.21h-3.77zM442.97 302.5h3.77V336.25h-3.77zM446.45 301.47h3.77V334.21h-3.77zM449.92 301.47h3.77V336.25h-3.77zM453.39 300.45h3.77V335.23h-3.77zM456.87 300.45h3.77V335.23h-3.77zM460.34 300.45h3.77V335.23h-3.77zM463.81 301.47h3.77V336.25h-3.77zM467.29 301.47h3.77V333.19h-3.77zM470.76 299.43h3.77V334.21h-3.77zM474.23 300.45h3.77V335.23h-3.77zM477.71 300.45h3.77V333.19h-3.77zM481.18 299.43h3.77V335.23h-3.77zM484.65 297.38h3.77V335.23h-3.77zM488.12 296.36h3.77V334.21h-3.77zM491.6 296.36h3.77V335.23h-3.77zM495.07 294.31h3.77V333.19h-3.77zM498.54 294.31h3.77V335.23h-3.77zM502.02 297.38h3.77V333.19h-3.77zM505.49 296.36h3.77V334.21h-3.77zM508.96 296.36h3.77V334.21h-3.77zM512.44 297.38h3.77V333.19h-3.77zM515.91 294.31h3.77V333.19h-3.77zM519.38 296.36h3.77V333.19h-3.77zM522.86 294.31h3.77V333.19h-3.77zM526.33 297.38h3.77V335.23h-3.77zM529.8 301.47h3.77V333.19h-3.77zM533.28 303.52h3.77V333.19h-3.77zM536.75 301.47h3.77V334.21h-3.77zM540.22 300.45h3.77V334.21h-3.77zM543.7 302.5h3.77V335.23h-3.77zM547.17 302.5h3.77V333.19h-3.77zM550.64 302.5h3.77V333.19h-3.77zM554.12 300.45h3.77V333.19h-3.77zM557.59 302.5h3.77V334.21h-3.77zM561.06 301.47h3.77V333.19h-3.77zM564.54 301.47h3.77V333.19h-3.77zM568.01 300.45h3.77V335.23h-3.77zM571.48 301.47h3.77V335.23h-3.77zM574.96 299.43h3.77V335.23h-3.77zM578.43 301.47h3.77V335.23h-3.77zM581.9 302.5h3.77V335.23h-3.77zM585.38 301.47h3.77V334.21h-3.77zM588.85 300.45h3.77V335.23h-3.77zM592.32 301.47h3.77V334.21h-3.77zM595.79 298.4h3.77V333.19h-3.77zM599.27 301.47h3.77V335.23h-3.77zM602.74 300.45h3.77V335.23h-3.77zM606.21 301.47h3.77V335.23h-3.77zM609.69 301.47h3.77V335.23h-3.77zM613.16 302.5h3.77V337.28h-3.77zM616.63 299.43h3.77V333.19h-3.77zM620.11 301.47h3.77V335.23h-3.77zM623.58 301.47h3.77V334.21h-3.77zM627.05 301.47h3.77V335.23h-3.77zM630.53 299.43h3.77V335.23h-3.77zM634 300.45h3.77V334.21h-3.77zM637.47 302.5h3.77V333.19h-3.77zM640.95 299.43h3.77V335.23h-3.77zM644.42 301.47h3.77V334.21h-3.77zM647.89 299.43h3.77V334.21h-3.77zM651.37 300.45h3.77V336.25h-3.77zM654.84 302.5h3.77V335.23h-3.77zM658.31 303.52h3.77V335.23h-3.77zM661.79 301.47h3.77V333.19h-3.77zM665.26 300.45h3.77V335.23h-3.77zM668.73 302.5h3.77V334.21h-3.77zM672.21 298.4h3.77V333.19h-3.77zM675.68 302.5h3.77V333.19h-3.77zM679.15 303.52h3.77V335.23h-3.77zM682.62 299.43h3.77V334.21h-3.77zM686.1 302.5h3.77V334.21h-3.77zM689.57 302.5h3.77V333.19h-3.77zM693.04 300.45h3.77V335.23h-3.77zM696.52 301.47h3.77V333.19h-3.77zM699.99 303.52h3.77V333.19h-3.77zM703.46 303.52h3.77V335.23h-3.77zM706.94 301.47h3.77V333.19h-3.77zM710.41 301.47h3.77V334.21h-3.77zM713.88 302.5h3.77V335.23h-3.77zM717.36 304.54h3.77V334.21h-3.77zM720.83 302.5h3.77V333.19h-3.77zM724.3 305.56h3.77V335.23h-3.77zM727.78 302.5h3.77V333.19h-3.77zM731.25 305.56h3.77V334.21h-3.77zM734.72 305.56h3.77V335.23h-3.77zM738.2 305.56h3.77V334.21h-3.77zM741.67 305.56h3.77V334.21h-3.77zM745.14 305.56h3.77V334.21h-3.77zM748.62 305.56h3.77V334.21h-3.77zM752.09 305.56h3.77V335.23h-3.77zM755.56 304.54h3.77V335.23h-3.77zM759.04 305.56h3.77V335.23h-3.77zM762.51 305.56h3.77V336.25h-3.77zM765.98 305.56h3.77V334.21h-3.77zM769.46 303.52h3.77V335.23h-3.77zM772.93 303.52h3.77V334.21h-3.77zM776.4 306.59h3.77V334.21h-3.77zM779.88 305.56h3.77V333.19h-3.77zM783.35 306.59h3.77V333.19h-3.77zM786.82 303.52h3.77V334.21h-3.77zM790.29 304.54h3.77V333.19h-3.77zM793.77 306.59h3.77V333.19h-3.77zM797.24 306.59h3.77V333.19h-3.77zM800.71 307.61h3.77V333.19h-3.77zM804.19 307.61h3.77V336.25h-3.77zM807.66 307.61h3.77V335.23h-3.77zM811.13 305.56h3.77V335.23h-3.77zM814.61 303.52h3.77V333.19h-3.77zM818.08 307.61h3.77V333.19h-3.77zM821.55 305.56h3.77V333.19h-3.77zM825.03 304.54h3.77V335.23h-3.77zM828.5 306.59h3.77V333.19h-3.77zM831.97 306.59h3.77V334.21h-3.77zM835.45 304.54h3.77V333.19h-3.77zM838.92 306.59h3.77V333.19h-3.77zM842.39 307.61h3.77V335.23h-3.77zM845.87 306.59h3.77V335.23h-3.77zM849.34 306.59h3.77V333.19h-3.77zM852.81 306.59h3.77V333.19h-3.77zM856.29 304.54h3.77V334.21h-3.77zM859.76 305.56h3.77V333.19h-3.77zM863.23 306.59h3.77V335.23h-3.77zM866.71 305.56h3.77V334.21h-3.77zM870.18 306.59h3.77V335.23h-3.77zM873.65 304.54h3.77V334.21h-3.77zM877.12 304.54h3.77V335.23h-3.77zM880.6 305.56h3.77V334.21h-3.77zM884.07 307.61h3.77V334.21h-3.77zM887.54 305.56h3.77V335.23h-3.77zM891.02 305.56h3.77V334.21h-3.77zM894.49 307.61h3.77V334.21h-3.77zM897.96 306.59h3.77V334.21h-3.77zM901.44 304.54h3.77V337.28h-3.77zM904.91 301.47h3.77V334.21h-3.77zM908.38 302.5h3.77V335.23h-3.77zM911.86 300.45h3.77V334.21h-3.77zM915.33 301.47h3.77V336.25h-3.77zM918.8 301.47h3.77V336.25h-3.77zM922.28 299.43h3.77V336.25h-3.77zM925.75 302.5h3.77V336.25h-3.77zM929.22 302.5h3.77V335.23h-3.77zM932.7 301.47h3.77V336.25h-3.77zM936.17 300.45h3.77V333.19h-3.77zM939.64 301.47h3.77V334.21h-3.77zM943.12 301.47h3.77V333.19h-3.77zM946.59 301.47h3.77V335.23h-3.77zM950.06 301.47h3.77V335.23h-3.77zM953.54 300.45h3.77V334.21h-3.77zM957.01 300.45h3.77V334.21h-3.77zM960.48 301.47h3.77V334.21h-3.77zM963.96 300.45h3.77V335.23h-3.77zM967.43 301.47h3.77V335.23h-3.77zM970.9 300.45h3.77V333.19h-3.77zM974.38 302.5h3.77V333.19h-3.77zM977.85 299.43h3.77V334.21h-3.77zM981.32 303.52h3.77V335.23h-3.77zM984.79 304.54h3.77V335.23h-3.77zM988.27 305.56h3.77V333.19h-3.77zM991.74 305.56h3.77V335.23h-3.77zM995.21 304.54h3.77V334.21h-3.77zM998.69 304.54h3.77V333.19h-3.77zM1002.16 304.54h3.77V333.19h-3.77zM1005.63 304.54h3.77V333.19h-3.77zM1009.11 304.54h3.77V334.21h-3.77zM1012.58 306.59h3.77V333.19h-3.77zM1016.05 302.5h3.77V335.23h-3.77zM1019.53 304.54h3.77V333.19h-3.77zM1023 304.54h3.77V333.19h-3.77zM1026.47 306.59h3.77V335.23h-3.77zM1029.95 304.54h3.77V334.21h-3.77zM1033.42 304.54h3.77V334.21h-3.77zM1036.89 306.59h3.77V334.21h-3.77zM1040.37 306.59h3.77V334.21h-3.77zM1043.84 304.54h3.77V335.23h-3.77zM1047.31 304.54h3.77V336.25h-3.77zM1050.79 304.54h3.77V335.23h-3.77zM1054.26 304.54h3.77V335.23h-3.77zM1057.73 306.59h3.77V335.23h-3.77zM1061.21 302.5h3.77V334.21h-3.77zM1064.68 302.5h3.77V334.21h-3.77zM1068.15 303.52h3.77V334.21h-3.77zM1071.62 296.36h3.77V336.25h-3.77zM1075.1 299.43h3.77V334.21h-3.77zM1078.57 299.43h3.77V336.25h-3.77zM1082.04 299.43h3.77V336.25h-3.77zM1085.52 301.47h3.77V334.21h-3.77zM1088.99 300.45h3.77V334.21h-3.77zM1092.46 300.45h3.77V334.21h-3.77zM1095.94 301.47h3.77V335.23h-3.77zM1099.41 300.45h3.77V336.25h-3.77zM1102.88 301.47h3.77V335.23h-3.77zM1106.36 301.47h3.77V336.25h-3.77zM1109.83 297.38h3.77V335.23h-3.77zM1113.3 299.43h3.77V335.23h-3.77zM1116.78 301.47h3.77V334.21h-3.77zM1120.25 301.47h3.77V335.23h-3.77zM1123.72 300.45h3.77V336.25h-3.77zM1127.2 302.5h3.77V335.23h-3.77zM1130.67 300.45h3.77V335.23h-3.77zM1134.14 300.45h3.77V333.19h-3.77zM1137.62 301.47h3.77V334.21h-3.77zM1141.09 299.43h3.77V336.25h-3.77zM1144.56 299.43h3.77V336.25h-3.77zM1148.04 302.5h3.77V334.21h-3.77zM1151.51 301.47h3.77V334.21h-3.77zM1154.98 299.43h3.77V333.19h-3.77zM1158.46 301.47h3.77V334.21h-3.77zM1161.93 300.45h3.77V335.23h-3.77zM1165.4 297.38h3.77V335.23h-3.77zM1168.88 302.5h3.77V336.25h-3.77zM1172.35 300.45h3.77V333.19h-3.77zM1175.82 300.45h3.77V334.21h-3.77zM1179.29 299.43h3.77V335.23h-3.77zM1182.77 301.47h3.77V333.19h-3.77zM1186.24 301.47h3.77V335.23h-3.77zM1189.71 301.47h3.77V334.21h-3.77zM1193.19 301.47h3.77V333.19h-3.77zM1196.66 301.47h3.77V334.21h-3.77zM1200.13 301.47h3.77V336.25h-3.77zM1203.61 299.43h3.77V335.23h-3.77zM1207.08 300.45h3.77V335.23h-3.77zM1210.55 301.47h3.77V334.21h-3.77zM1214.03 302.5h3.77V334.21h-3.77zM1217.5 299.43h3.77V333.19h-3.77zM1220.97 300.45h3.77V333.19h-3.77zM1224.45 301.47h3.77V334.21h-3.77zM1227.92 302.5h3.77V333.19h-3.77zM1231.39 300.45h3.77V333.19h-3.77zM1234.87 300.45h3.77V334.21h-3.77zM1238.34 300.45h3.77V335.23h-3.77zM1241.81 299.43h3.77V336.25h-3.77zM1245.29 300.45h3.77V334.21h-3.77zM1248.76 299.43h3.77V336.25h-3.77zM1252.23 299.43h3.77V335.23h-3.77zM1255.71 299.43h3.77V335.23h-3.77zM1259.18 298.4h3.77V335.23h-3.77zM1262.65 299.43h3.77V335.23h-3.77zM1266.12 298.4h3.77V335.23h-3.77zM1269.6 300.45h3.77V336.25h-3.77zM1273.07 300.45h3.77V333.19h-3.77zM1276.54 299.43h3.77V333.19h-3.77zM1280.02 299.43h3.77V336.25h-3.77zM1283.49 300.45h3.77V333.19h-3.77zM1286.96 300.45h3.77V335.23h-3.77zM1290.44 298.4h3.77V334.21h-3.77zM1293.91 300.45h3.77V333.19h-3.77zM1297.38 300.45h3.77V333.19h-3.77zM1300.86 299.43h3.77V335.23h-3.77zM1304.33 300.45h3.77V334.21h-3.77zM1307.8 300.45h3.77V334.21h-3.77zM1311.28 299.43h3.77V335.23h-3.77zM1314.75 300.45h3.77V334.21h-3.77zM1318.22 298.4h3.77V335.23h-3.77zM1321.7 298.4h3.77V334.21h-3.77zM1325.17 299.43h3.77V333.19h-3.77zM1328.64 296.36h3.77V335.23h-3.77zM1332.12 300.45h3.77V333.19h-3.77zM1335.59 300.45h3.77V333.19h-3.77zM1339.06 300.45h3.77V333.19h-3.77zM1342.54 300.45h3.77V333.19h-3.77zM1346.01 300.45h3.77V334.21h-3.77zM1349.48 298.4h3.77V333.19h-3.77zM1352.96 300.45h3.77V335.23h-3.77zM1356.43 299.43h3.77V334.21h-3.77zM1359.9 300.45h3.77V335.23h-3.77zM1363.38 300.45h3.77V334.21h-3.77zM1366.85 298.4h3.77V335.23h-3.77zM1370.32 300.45h3.77V333.19h-3.77zM1373.79 300.45h3.77V335.23h-3.77zM1377.27 300.45h3.77V333.19h-3.77zM1380.74 299.43h3.77V335.23h-3.77zM1384.21 300.45h3.77V335.23h-3.77zM1387.69 299.43h3.77V335.23h-3.77zM1391.16 298.4h3.77V335.23h-3.77zM1394.63 298.4h3.77V333.19h-3.77zM1398.11 300.45h3.77V335.23h-3.77zM1401.58 300.45h3.77V334.21h-3.77zM1405.05 300.45h3.77V337.28h-3.77zM1408.53 300.45h3.77V336.25h-3.77z" fill="#9bd1b9"/><path d="M269.31 298.4h10.42v1.33h-10.42zM290.15 295.34h3.47v1.33h-3.47zM331.83 338.3h3.47v1.33h-3.47zM352.67 291.24h10.42v1.33h-10.42zM376.98 298.4h3.47v1.33h-3.47zM390.88 294.31h3.47v1.33h-3.47zM404.77 298.4h3.47v1.33h-3.47zM463.81 299.43h3.47v1.33h-3.47zM467.29 293.29h3.47v1.33h-3.47zM512.44 289.2h3.47v1.33h-3.47zM543.7 294.31h6.95v1.33h-6.95zM554.12 297.38h6.95v1.33h-6.95zM672.21 296.36h10.42v1.33h-10.42zM686.1 300.45h10.42v1.33h-10.42zM699.99 301.47h6.95v1.33h-6.95zM748.62 303.52h6.95v1.33h-6.95zM762.51 301.47h3.47v1.33h-3.47zM772.93 301.47h3.47v1.33h-3.47zM818.08 304.54h3.47v1.33h-3.47zM825.03 302.5h6.95v1.33h-6.95zM842.39 338.3h10.42v1.33h-10.42zM852.81 302.5h3.47v1.33h-3.47zM887.54 301.47h6.95v1.33h-6.95zM891.02 338.3h3.47v1.33h-3.47zM897.96 304.03h10.42v1.33h-10.42zM901.44 301.47h6.95v1.33h-6.95zM925.75 298.4h6.95v1.33h-6.95zM932.7 299.43h10.42v1.33h-10.42zM950.06 293.29h3.47v1.33h-3.47zM963.96 338.3h6.95v1.33h-6.95zM970.9 298.4h3.47v1.33h-3.47zM981.32 301.47h10.42v1.33h-10.42zM995.21 300.45h3.47v1.33h-3.47zM1029.95 338.3h6.95v1.33h-6.95zM1050.79 338.3h3.47v1.33h-3.47zM1071.62 293.8h3.47v1.33h-3.47zM1144.56 297.38h3.47v1.33h-3.47zM1189.71 293.29h3.47v1.33h-3.47zM1200.13 293.29h10.42v1.33h-10.42zM1227.92 300.45h10.42v1.33h-10.42zM1231.39 292.27h6.95v1.33h-6.95zM1245.29 292.27h6.95v1.33h-6.95zM1266.12 294.31h3.47v1.33h-3.47zM1290.44 295.85h3.47v1.33h-3.47zM1311.28 297.38h3.47v1.33h-3.47zM1332.12 292.27h3.47v1.33h-3.47zM1359.9 297.38h3.47v1.33h-3.47zM1377.27 298.4h10.42v1.33h-10.42zM1408.53 292.27h10.42v1.33h-10.42z" fill="#a6d7c1"/><path d="M245 316.46h3.67v1.74h-3.67zM245 320.55h3.67v1.74h-3.67zM245 322.39h3.67v1.53h-3.67zM248.47 316.46h3.67v1.74h-3.67zM248.47 320.55h3.67v1.74h-3.67zM248.47 314.82h3.67v1.53h-3.67zM248.47 322.39h3.67v1.53h-3.67zM251.95 316.46h3.67v1.74h-3.67zM255.42 316.46h3.67v1.74h-3.67zM255.42 320.55h3.67v1.74h-3.67zM255.42 314.82h3.67v1.53h-3.67zM258.89 316.46h3.67v1.74h-3.67zM258.89 320.55h3.67v1.74h-3.67zM262.37 316.46h3.67v1.74h-3.67zM265.84 320.55h3.67v1.74h-3.67zM265.84 322.39h3.67v1.53h-3.67zM269.31 316.46h3.67v1.74h-3.67zM269.31 314.82h3.67v1.53h-3.67zM269.31 322.39h3.67v1.53h-3.67zM272.79 316.46h3.67v1.74h-3.67zM276.26 316.46h3.67v1.74h-3.67zM276.26 320.55h3.67v1.74h-3.67zM279.73 316.46h3.67v1.74h-3.67zM279.73 320.55h3.67v1.74h-3.67zM279.73 314.82h3.67v1.53h-3.67zM279.73 322.39h3.67v1.53h-3.67zM283.21 316.46h3.67v1.74h-3.67zM283.21 320.55h3.67v1.74h-3.67zM283.21 314.82h3.67v1.53h-3.67zM290.15 316.46h3.67v1.74h-3.67zM290.15 320.55h3.67v1.74h-3.67zM290.15 322.39h3.67v1.53h-3.67zM293.62 316.46h3.67v1.74h-3.67zM293.62 320.55h3.67v1.74h-3.67zM293.62 322.39h3.67v1.53h-3.67zM297.1 316.46h3.67v1.74h-3.67zM300.57 316.46h3.67v1.74h-3.67zM300.57 322.39h3.67v1.53h-3.67zM304.04 320.55h3.67v1.74h-3.67zM307.52 316.46h3.67v1.74h-3.67zM307.52 320.55h3.67v1.74h-3.67zM307.52 322.39h3.67v1.53h-3.67zM310.99 316.46h3.67v1.74h-3.67zM310.99 320.55h3.67v1.74h-3.67zM310.99 322.39h3.67v1.53h-3.67zM314.46 316.46h3.67v1.74h-3.67zM314.46 320.55h3.67v1.74h-3.67zM314.46 314.82h3.67v1.53h-3.67zM314.46 322.39h3.67v1.53h-3.67zM317.94 320.55h3.67v1.74h-3.67zM321.41 318.35h3.67v2.05h-3.67zM321.41 320.55h3.67v1.74h-3.67zM324.88 316.46h3.67v1.74h-3.67zM328.36 318.35h3.67v2.05h-3.67zM331.83 318.35h3.67v2.05h-3.67zM331.83 320.55h3.67v1.74h-3.67zM338.78 316.46h3.67v1.74h-3.67zM338.78 320.55h3.67v1.74h-3.67zM338.78 322.39h3.67v1.53h-3.67zM342.25 316.46h3.67v1.74h-3.67zM342.25 314.82h3.67v1.53h-3.67zM345.72 316.46h3.67v1.74h-3.67zM349.2 320.55h3.67v1.74h-3.67zM349.2 314.82h3.67v1.53h-3.67zM349.2 322.39h3.67v1.53h-3.67zM352.67 316.46h3.67v1.74h-3.67zM352.67 314.82h3.67v1.53h-3.67zM352.67 322.39h3.67v1.53h-3.67zM359.62 314.82h3.67v1.53h-3.67zM359.62 322.39h3.67v1.53h-3.67zM370.04 318.35h3.67v2.05h-3.67zM370.04 316.46h3.67v1.74h-3.67zM373.51 320.55h3.67v1.74h-3.67zM376.98 318.35h3.67v2.05h-3.67zM383.93 318.35h3.67v2.05h-3.67zM383.93 320.55h3.67v1.74h-3.67zM387.4 318.35h3.67v2.05h-3.67zM387.4 320.55h3.67v1.74h-3.67zM390.88 318.35h3.67v2.05h-3.67zM394.35 318.35h3.67v2.05h-3.67zM397.82 318.35h3.67v2.05h-3.67zM404.77 314.82h3.67v1.53h-3.67zM404.77 322.39h3.67v1.53h-3.67zM411.71 316.46h3.67v1.74h-3.67zM411.71 320.55h3.67v1.74h-3.67zM411.71 314.82h3.67v1.53h-3.67zM411.71 322.39h3.67v1.53h-3.67zM415.19 316.46h3.67v1.74h-3.67zM415.19 320.55h3.67v1.74h-3.67zM418.66 316.46h3.67v1.74h-3.67zM418.66 314.82h3.67v1.53h-3.67zM422.13 316.46h3.67v1.74h-3.67zM422.13 320.55h3.67v1.74h-3.67zM425.61 316.46h3.67v1.74h-3.67zM425.61 320.55h3.67v1.74h-3.67zM429.08 316.46h3.67v1.74h-3.67zM429.08 320.55h3.67v1.74h-3.67zM429.08 322.39h3.67v1.53h-3.67zM432.55 314.82h3.67v1.53h-3.67zM432.55 322.39h3.67v1.53h-3.67zM436.03 314.82h3.67v1.53h-3.67zM436.03 322.39h3.67v1.53h-3.67zM439.5 322.39h3.67v1.53h-3.67zM442.97 320.55h3.67v1.74h-3.67zM442.97 314.82h3.67v1.53h-3.67zM442.97 322.39h3.67v1.53h-3.67zM446.45 322.39h3.67v1.53h-3.67zM456.87 316.46h3.67v1.74h-3.67zM456.87 320.55h3.67v1.74h-3.67zM456.87 322.39h3.67v1.53h-3.67zM460.34 314.82h3.67v1.53h-3.67zM463.81 316.46h3.67v1.74h-3.67zM463.81 320.55h3.67v1.74h-3.67zM463.81 314.82h3.67v1.53h-3.67zM463.81 322.39h3.67v1.53h-3.67zM467.29 316.46h3.67v1.74h-3.67zM467.29 320.55h3.67v1.74h-3.67zM467.29 314.82h3.67v1.53h-3.67zM467.29 322.39h3.67v1.53h-3.67zM470.76 322.39h3.67v1.53h-3.67zM474.23 316.46h3.67v1.74h-3.67zM474.23 322.39h3.67v1.53h-3.67zM477.71 316.46h3.67v1.74h-3.67zM477.71 314.82h3.67v1.53h-3.67zM477.71 322.39h3.67v1.53h-3.67zM481.18 320.55h3.67v1.74h-3.67zM481.18 322.39h3.67v1.53h-3.67zM484.65 320.55h3.67v1.74h-3.67zM484.65 322.39h3.67v1.53h-3.67zM488.12 314.82h3.67v1.53h-3.67zM491.6 316.46h3.67v1.74h-3.67zM491.6 320.55h3.67v1.74h-3.67zM491.6 314.82h3.67v1.53h-3.67zM491.6 322.39h3.67v1.53h-3.67zM498.54 318.35h3.67v2.05h-3.67zM505.49 316.46h3.67v1.74h-3.67zM505.49 320.55h3.67v1.74h-3.67zM508.96 316.46h3.67v1.74h-3.67zM508.96 320.55h3.67v1.74h-3.67zM512.44 316.46h3.67v1.74h-3.67zM512.44 320.55h3.67v1.74h-3.67zM512.44 322.39h3.67v1.53h-3.67zM515.91 316.46h3.67v1.74h-3.67zM519.38 316.46h3.67v1.74h-3.67zM522.86 320.55h3.67v1.74h-3.67zM522.86 322.39h3.67v1.53h-3.67zM526.33 318.35h3.67v2.05h-3.67zM533.28 320.55h3.67v1.74h-3.67zM536.75 320.55h3.67v1.74h-3.67zM543.7 318.35h3.67v2.05h-3.67zM547.17 320.55h3.67v1.74h-3.67zM554.12 318.35h3.67v2.05h-3.67zM564.54 314.82h3.67v1.53h-3.67zM564.54 322.39h3.67v1.53h-3.67zM571.48 314.82h3.67v1.53h-3.67zM571.48 322.39h3.67v1.53h-3.67zM574.96 314.82h3.67v1.53h-3.67zM574.96 322.39h3.67v1.53h-3.67zM578.43 322.39h3.67v1.53h-3.67zM581.9 316.46h3.67v1.74h-3.67zM581.9 320.55h3.67v1.74h-3.67zM585.38 316.46h3.67v1.74h-3.67zM585.38 322.39h3.67v1.53h-3.67zM588.85 316.46h3.67v1.74h-3.67zM588.85 322.39h3.67v1.53h-3.67zM592.32 316.46h3.67v1.74h-3.67zM592.32 320.55h3.67v1.74h-3.67zM592.32 322.39h3.67v1.53h-3.67zM595.79 316.46h3.67v1.74h-3.67zM595.79 320.55h3.67v1.74h-3.67zM595.79 322.39h3.67v1.53h-3.67zM599.27 316.46h3.67v1.74h-3.67zM599.27 320.55h3.67v1.74h-3.67zM599.27 322.39h3.67v1.53h-3.67zM602.74 322.39h3.67v1.53h-3.67zM606.21 316.46h3.67v1.74h-3.67zM606.21 320.55h3.67v1.74h-3.67zM606.21 314.82h3.67v1.53h-3.67zM609.69 316.46h3.67v1.74h-3.67zM609.69 314.82h3.67v1.53h-3.67zM613.16 316.46h3.67v1.74h-3.67zM613.16 314.82h3.67v1.53h-3.67zM613.16 322.39h3.67v1.53h-3.67zM616.63 316.46h3.67v1.74h-3.67zM616.63 320.55h3.67v1.74h-3.67zM616.63 322.39h3.67v1.53h-3.67zM620.11 316.46h3.67v1.74h-3.67zM620.11 320.55h3.67v1.74h-3.67zM623.58 316.46h3.67v1.74h-3.67zM623.58 320.55h3.67v1.74h-3.67zM623.58 314.82h3.67v1.53h-3.67zM623.58 322.39h3.67v1.53h-3.67zM627.05 322.39h3.67v1.53h-3.67zM637.47 316.46h3.67v1.74h-3.67zM637.47 320.55h3.67v1.74h-3.67zM637.47 322.39h3.67v1.53h-3.67zM640.95 316.46h3.67v1.74h-3.67zM640.95 320.55h3.67v1.74h-3.67zM640.95 322.39h3.67v1.53h-3.67zM644.42 316.46h3.67v1.74h-3.67zM644.42 320.55h3.67v1.74h-3.67zM647.89 318.35h3.67v2.05h-3.67zM647.89 320.55h3.67v1.74h-3.67zM651.37 318.35h3.67v2.05h-3.67zM654.84 320.55h3.67v1.74h-3.67zM654.84 314.82h3.67v1.53h-3.67zM654.84 322.39h3.67v1.53h-3.67zM658.31 316.46h3.67v1.74h-3.67zM658.31 322.39h3.67v1.53h-3.67zM661.79 320.55h3.67v1.74h-3.67zM665.26 316.46h3.67v1.74h-3.67zM665.26 322.39h3.67v1.53h-3.67zM668.73 320.55h3.67v1.74h-3.67zM668.73 322.39h3.67v1.53h-3.67zM672.21 318.35h3.67v2.05h-3.67zM675.68 318.35h3.67v2.05h-3.67zM675.68 316.46h3.67v1.74h-3.67zM679.15 318.35h3.67v2.05h-3.67zM682.62 316.46h3.67v1.74h-3.67zM682.62 320.55h3.67v1.74h-3.67zM686.1 318.35h3.67v2.05h-3.67zM686.1 320.55h3.67v1.74h-3.67zM689.57 318.35h3.67v2.05h-3.67zM689.57 320.55h3.67v1.74h-3.67zM693.04 318.35h3.67v2.05h-3.67zM693.04 316.46h3.67v1.74h-3.67zM693.04 320.55h3.67v1.74h-3.67zM703.46 318.35h3.67v2.05h-3.67zM713.88 318.35h3.67v2.05h-3.67zM717.36 318.35h3.67v2.05h-3.67zM724.3 318.35h3.67v2.05h-3.67zM738.2 314.82h3.67v1.53h-3.67zM738.2 322.39h3.67v1.53h-3.67zM741.67 314.82h3.67v1.53h-3.67zM741.67 322.39h3.67v1.53h-3.67zM745.14 316.46h3.67v1.74h-3.67zM745.14 320.55h3.67v1.74h-3.67zM745.14 322.39h3.67v1.53h-3.67zM748.62 316.46h3.67v1.74h-3.67zM748.62 320.55h3.67v1.74h-3.67zM752.09 316.46h3.67v1.74h-3.67zM752.09 320.55h3.67v1.74h-3.67zM752.09 314.82h3.67v1.53h-3.67zM759.04 320.55h3.67v1.74h-3.67zM759.04 314.82h3.67v1.53h-3.67zM759.04 322.39h3.67v1.53h-3.67zM762.51 320.55h3.67v1.74h-3.67zM765.98 316.46h3.67v1.74h-3.67zM765.98 320.55h3.67v1.74h-3.67zM765.98 314.82h3.67v1.53h-3.67zM769.46 318.35h3.67v2.05h-3.67zM769.46 316.46h3.67v1.74h-3.67zM769.46 320.55h3.67v1.74h-3.67zM769.46 322.39h3.67v1.53h-3.67zM772.93 316.46h3.67v1.74h-3.67zM772.93 320.55h3.67v1.74h-3.67zM772.93 322.39h3.67v1.53h-3.67zM776.4 316.46h3.67v1.74h-3.67zM776.4 320.55h3.67v1.74h-3.67zM776.4 322.39h3.67v1.53h-3.67zM779.88 316.46h3.67v1.74h-3.67zM779.88 320.55h3.67v1.74h-3.67zM779.88 322.39h3.67v1.53h-3.67zM783.35 316.46h3.67v1.74h-3.67zM783.35 320.55h3.67v1.74h-3.67zM783.35 314.82h3.67v1.53h-3.67zM783.35 322.39h3.67v1.53h-3.67zM814.61 318.35h3.67v2.05h-3.67zM825.03 318.35h3.67v2.05h-3.67zM845.87 318.35h3.67v2.05h-3.67zM856.29 318.35h3.67v2.05h-3.67zM859.76 318.35h3.67v2.05h-3.67zM863.23 318.35h3.67v2.05h-3.67zM866.71 318.35h3.67v2.05h-3.67zM870.18 318.35h3.67v2.05h-3.67zM873.65 318.35h3.67v2.05h-3.67zM891.02 318.35h3.67v2.05h-3.67zM894.49 318.35h3.67v2.05h-3.67zM897.96 314.82h3.67v1.53h-3.67zM897.96 322.39h3.67v1.53h-3.67zM901.44 322.39h3.67v1.53h-3.67zM904.91 314.82h3.67v1.53h-3.67zM904.91 322.39h3.67v1.53h-3.67zM908.38 322.39h3.67v1.53h-3.67zM911.86 316.46h3.67v1.74h-3.67zM911.86 320.55h3.67v1.74h-3.67zM915.33 316.46h3.67v1.74h-3.67zM915.33 320.55h3.67v1.74h-3.67zM918.8 316.46h3.67v1.74h-3.67zM918.8 320.55h3.67v1.74h-3.67zM918.8 322.39h3.67v1.53h-3.67zM922.28 320.55h3.67v1.74h-3.67zM925.75 316.46h3.67v1.74h-3.67zM925.75 320.55h3.67v1.74h-3.67zM925.75 314.82h3.67v1.53h-3.67zM929.22 314.82h3.67v1.53h-3.67zM929.22 322.39h3.67v1.53h-3.67zM932.7 320.55h3.67v1.74h-3.67zM932.7 322.39h3.67v1.53h-3.67zM936.17 316.46h3.67v1.74h-3.67zM936.17 320.55h3.67v1.74h-3.67zM936.17 314.82h3.67v1.53h-3.67zM936.17 322.39h3.67v1.53h-3.67zM939.64 318.35h3.67v2.05h-3.67zM939.64 316.46h3.67v1.74h-3.67zM939.64 320.55h3.67v1.74h-3.67zM939.64 314.82h3.67v1.53h-3.67zM943.12 318.35h3.67v2.05h-3.67zM943.12 316.46h3.67v1.74h-3.67zM943.12 322.39h3.67v1.53h-3.67zM946.59 320.55h3.67v1.74h-3.67zM946.59 314.82h3.67v1.53h-3.67zM950.06 320.55h3.67v1.74h-3.67zM953.54 316.46h3.67v1.74h-3.67zM953.54 320.55h3.67v1.74h-3.67zM957.01 318.35h3.67v2.05h-3.67zM960.48 318.35h3.67v2.05h-3.67zM960.48 316.46h3.67v1.74h-3.67zM963.96 318.35h3.67v2.05h-3.67zM967.43 318.35h3.67v2.05h-3.67zM981.32 318.35h3.67v2.05h-3.67zM984.79 318.35h3.67v2.05h-3.67zM988.27 318.35h3.67v2.05h-3.67zM995.21 318.35h3.67v2.05h-3.67zM998.69 318.35h3.67v2.05h-3.67zM1002.16 318.35h3.67v2.05h-3.67zM1002.16 320.55h3.67v1.74h-3.67zM1005.63 318.35h3.67v2.05h-3.67zM1016.05 318.35h3.67v2.05h-3.67zM1026.47 320.55h3.67v1.74h-3.67zM1033.42 318.35h3.67v2.05h-3.67zM1036.89 316.46h3.67v1.74h-3.67zM1036.89 314.82h3.67v1.53h-3.67zM1068.15 318.35h3.67v2.05h-3.67zM1071.62 314.82h3.67v1.53h-3.67zM1071.62 322.39h3.67v1.53h-3.67zM1075.1 314.82h3.67v1.53h-3.67zM1075.1 322.39h3.67v1.53h-3.67zM1078.57 316.46h3.67v1.74h-3.67zM1078.57 320.55h3.67v1.74h-3.67zM1082.04 316.46h3.67v1.74h-3.67zM1082.04 320.55h3.67v1.74h-3.67zM1085.52 316.46h3.67v1.74h-3.67zM1085.52 320.55h3.67v1.74h-3.67zM1085.52 322.39h3.67v1.53h-3.67zM1088.99 316.46h3.67v1.74h-3.67zM1088.99 320.55h3.67v1.74h-3.67zM1092.46 316.46h3.67v1.74h-3.67zM1092.46 320.55h3.67v1.74h-3.67zM1092.46 322.39h3.67v1.53h-3.67zM1095.94 316.46h3.67v1.74h-3.67zM1095.94 322.39h3.67v1.53h-3.67zM1099.41 316.46h3.67v1.74h-3.67zM1099.41 314.82h3.67v1.53h-3.67zM1099.41 322.39h3.67v1.53h-3.67zM1102.88 316.46h3.67v1.74h-3.67zM1102.88 314.82h3.67v1.53h-3.67zM1109.83 316.46h3.67v1.74h-3.67zM1113.3 320.55h3.67v1.74h-3.67zM1113.3 322.39h3.67v1.53h-3.67zM1116.78 316.46h3.67v1.74h-3.67zM1116.78 320.55h3.67v1.74h-3.67zM1116.78 314.82h3.67v1.53h-3.67zM1116.78 322.39h3.67v1.53h-3.67zM1120.25 316.46h3.67v1.74h-3.67zM1120.25 314.82h3.67v1.53h-3.67zM1120.25 322.39h3.67v1.53h-3.67zM1123.72 316.46h3.67v1.74h-3.67zM1123.72 314.82h3.67v1.53h-3.67zM1123.72 322.39h3.67v1.53h-3.67zM1127.2 316.46h3.67v1.74h-3.67zM1127.2 320.55h3.67v1.74h-3.67zM1130.67 316.46h3.67v1.74h-3.67zM1130.67 320.55h3.67v1.74h-3.67zM1130.67 322.39h3.67v1.53h-3.67zM1134.14 314.82h3.67v1.53h-3.67zM1137.62 314.82h3.67v1.53h-3.67zM1137.62 322.39h3.67v1.53h-3.67zM1141.09 322.39h3.67v1.53h-3.67zM1144.56 318.35h3.67v2.05h-3.67zM1144.56 316.46h3.67v1.74h-3.67zM1144.56 320.55h3.67v1.74h-3.67zM1148.04 316.46h3.67v1.74h-3.67zM1151.51 316.46h3.67v1.74h-3.67zM1154.98 318.35h3.67v2.05h-3.67zM1154.98 316.46h3.67v1.74h-3.67zM1154.98 320.55h3.67v1.74h-3.67zM1158.46 318.35h3.67v2.05h-3.67zM1158.46 316.46h3.67v1.74h-3.67zM1158.46 320.55h3.67v1.74h-3.67zM1158.46 314.82h3.67v1.53h-3.67zM1161.93 318.35h3.67v2.05h-3.67zM1161.93 320.55h3.67v1.74h-3.67zM1165.4 316.46h3.67v1.74h-3.67zM1165.4 320.55h3.67v1.74h-3.67zM1165.4 314.82h3.67v1.53h-3.67zM1168.88 316.46h3.67v1.74h-3.67zM1172.35 318.35h3.67v2.05h-3.67zM1175.82 316.46h3.67v1.74h-3.67zM1175.82 314.82h3.67v1.53h-3.67zM1175.82 322.39h3.67v1.53h-3.67zM1179.29 316.46h3.67v1.74h-3.67zM1179.29 320.55h3.67v1.74h-3.67zM1186.24 318.35h3.67v2.05h-3.67zM1189.71 318.35h3.67v2.05h-3.67zM1193.19 318.35h3.67v2.05h-3.67zM1203.61 320.55h3.67v1.74h-3.67zM1210.55 318.35h3.67v2.05h-3.67zM1214.03 320.55h3.67v1.74h-3.67zM1231.39 320.55h3.67v1.74h-3.67zM1234.87 318.35h3.67v2.05h-3.67zM1238.34 314.82h3.67v1.53h-3.67zM1238.34 322.39h3.67v1.53h-3.67zM1241.81 322.39h3.67v1.53h-3.67zM1248.76 316.46h3.67v1.74h-3.67zM1248.76 320.55h3.67v1.74h-3.67zM1248.76 314.82h3.67v1.53h-3.67zM1248.76 322.39h3.67v1.53h-3.67zM1252.23 320.55h3.67v1.74h-3.67zM1252.23 314.82h3.67v1.53h-3.67zM1255.71 316.46h3.67v1.74h-3.67zM1255.71 320.55h3.67v1.74h-3.67zM1259.18 316.46h3.67v1.74h-3.67zM1259.18 320.55h3.67v1.74h-3.67zM1259.18 322.39h3.67v1.53h-3.67zM1262.65 316.46h3.67v1.74h-3.67zM1262.65 322.39h3.67v1.53h-3.67zM1266.12 316.46h3.67v1.74h-3.67zM1266.12 314.82h3.67v1.53h-3.67zM1266.12 322.39h3.67v1.53h-3.67zM1269.6 316.46h3.67v1.74h-3.67zM1269.6 320.55h3.67v1.74h-3.67zM1269.6 322.39h3.67v1.53h-3.67zM1273.07 322.39h3.67v1.53h-3.67zM1276.54 316.46h3.67v1.74h-3.67zM1280.02 316.46h3.67v1.74h-3.67zM1280.02 314.82h3.67v1.53h-3.67zM1280.02 322.39h3.67v1.53h-3.67zM1283.49 316.46h3.67v1.74h-3.67zM1283.49 320.55h3.67v1.74h-3.67zM1283.49 322.39h3.67v1.53h-3.67zM1286.96 320.55h3.67v1.74h-3.67zM1290.44 316.46h3.67v1.74h-3.67zM1290.44 320.55h3.67v1.74h-3.67zM1293.91 316.46h3.67v1.74h-3.67zM1293.91 322.39h3.67v1.53h-3.67zM1297.38 316.46h3.67v1.74h-3.67zM1297.38 320.55h3.67v1.74h-3.67zM1297.38 322.39h3.67v1.53h-3.67zM1300.86 320.55h3.67v1.74h-3.67zM1304.33 316.46h3.67v1.74h-3.67zM1304.33 314.82h3.67v1.53h-3.67zM1304.33 322.39h3.67v1.53h-3.67zM1307.8 316.46h3.67v1.74h-3.67zM1307.8 314.82h3.67v1.53h-3.67zM1307.8 322.39h3.67v1.53h-3.67zM1311.28 320.55h3.67v1.74h-3.67zM1311.28 322.39h3.67v1.53h-3.67zM1314.75 316.46h3.67v1.74h-3.67zM1314.75 320.55h3.67v1.74h-3.67zM1314.75 314.82h3.67v1.53h-3.67zM1314.75 322.39h3.67v1.53h-3.67zM1318.22 314.82h3.67v1.53h-3.67zM1318.22 322.39h3.67v1.53h-3.67zM1321.7 316.46h3.67v1.74h-3.67zM1321.7 320.55h3.67v1.74h-3.67zM1321.7 322.39h3.67v1.53h-3.67zM1325.17 316.46h3.67v1.74h-3.67zM1325.17 320.55h3.67v1.74h-3.67zM1325.17 322.39h3.67v1.53h-3.67zM1328.64 322.39h3.67v1.53h-3.67zM1332.12 316.46h3.67v1.74h-3.67zM1332.12 320.55h3.67v1.74h-3.67zM1332.12 314.82h3.67v1.53h-3.67zM1332.12 322.39h3.67v1.53h-3.67zM1335.59 316.46h3.67v1.74h-3.67zM1335.59 320.55h3.67v1.74h-3.67zM1339.06 316.46h3.67v1.74h-3.67zM1342.54 316.46h3.67v1.74h-3.67zM1342.54 320.55h3.67v1.74h-3.67zM1342.54 314.82h3.67v1.53h-3.67zM1342.54 322.39h3.67v1.53h-3.67zM1346.01 316.46h3.67v1.74h-3.67zM1346.01 320.55h3.67v1.74h-3.67zM1346.01 314.82h3.67v1.53h-3.67zM1346.01 322.39h3.67v1.53h-3.67zM1349.48 320.55h3.67v1.74h-3.67zM1352.96 316.46h3.67v1.74h-3.67zM1352.96 322.39h3.67v1.53h-3.67zM1356.43 318.35h3.67v2.05h-3.67zM1356.43 316.46h3.67v1.74h-3.67zM1359.9 320.55h3.67v1.74h-3.67zM1366.85 318.35h3.67v2.05h-3.67zM1366.85 316.46h3.67v1.74h-3.67zM1366.85 320.55h3.67v1.74h-3.67zM1370.32 316.46h3.67v1.74h-3.67zM1373.79 318.35h3.67v2.05h-3.67zM1377.27 318.35h3.67v2.05h-3.67zM1377.27 320.55h3.67v1.74h-3.67zM1380.74 318.35h3.67v2.05h-3.67zM1380.74 320.55h3.67v1.74h-3.67zM1384.21 318.35h3.67v2.05h-3.67zM1384.21 320.55h3.67v1.74h-3.67zM1387.69 318.35h3.67v2.05h-3.67zM1394.63 314.82h3.67v1.53h-3.67zM1394.63 322.39h3.67v1.53h-3.67zM1398.11 314.82h3.67v1.53h-3.67zM1398.11 322.39h3.67v1.53h-3.67zM1401.58 322.39h3.67v1.53h-3.67zM1405.05 314.82h3.67v1.53h-3.67zM1405.05 322.39h3.67v1.53h-3.67zM1408.53 314.82h3.67v1.53h-3.67zM1408.53 322.39h3.67v1.53h-3.67z" fill="#8cc9bb"/><path d="M245 318.35h3.67v2.05h-3.67zM248.47 318.35h3.67v2.05h-3.67zM251.95 318.35h3.67v2.05h-3.67zM251.95 320.55h3.67v1.74h-3.67zM255.42 318.35h3.67v2.05h-3.67zM258.89 318.35h3.67v2.05h-3.67zM262.37 318.35h3.67v2.05h-3.67zM262.37 320.55h3.67v1.74h-3.67zM265.84 318.35h3.67v2.05h-3.67zM265.84 316.46h3.67v1.74h-3.67zM269.31 320.55h3.67v1.74h-3.67zM272.79 318.35h3.67v2.05h-3.67zM272.79 320.55h3.67v1.74h-3.67zM276.26 318.35h3.67v2.05h-3.67zM279.73 318.35h3.67v2.05h-3.67zM283.21 318.35h3.67v2.05h-3.67zM286.68 318.35h3.67v2.05h-3.67zM286.68 316.46h3.67v1.74h-3.67zM286.68 320.55h3.67v1.74h-3.67zM290.15 318.35h3.67v2.05h-3.67zM293.62 318.35h3.67v2.05h-3.67zM297.1 318.35h3.67v2.05h-3.67zM297.1 320.55h3.67v1.74h-3.67zM300.57 318.35h3.67v2.05h-3.67zM300.57 320.55h3.67v1.74h-3.67zM304.04 318.35h3.67v2.05h-3.67zM304.04 316.46h3.67v1.74h-3.67zM307.52 318.35h3.67v2.05h-3.67zM310.99 318.35h3.67v2.05h-3.67zM314.46 318.35h3.67v2.05h-3.67zM317.94 318.35h3.67v2.05h-3.67zM324.88 318.35h3.67v2.05h-3.67zM335.3 314.82h3.67v1.53h-3.67zM335.3 322.39h3.67v1.53h-3.67zM338.78 318.35h3.67v2.05h-3.67zM342.25 318.35h3.67v2.05h-3.67zM342.25 320.55h3.67v1.74h-3.67zM345.72 318.35h3.67v2.05h-3.67zM345.72 320.55h3.67v1.74h-3.67zM349.2 318.35h3.67v2.05h-3.67zM349.2 316.46h3.67v1.74h-3.67zM352.67 318.35h3.67v2.05h-3.67zM352.67 320.55h3.67v1.74h-3.67zM359.62 316.46h3.67v1.74h-3.67zM359.62 320.55h3.67v1.74h-3.67zM404.77 316.46h3.67v1.74h-3.67zM404.77 320.55h3.67v1.74h-3.67zM408.24 316.46h3.67v1.74h-3.67zM408.24 320.55h3.67v1.74h-3.67zM408.24 322.39h3.67v1.53h-3.67zM411.71 318.35h3.67v2.05h-3.67zM415.19 318.35h3.67v2.05h-3.67zM418.66 318.35h3.67v2.05h-3.67zM418.66 320.55h3.67v1.74h-3.67zM422.13 318.35h3.67v2.05h-3.67zM425.61 318.35h3.67v2.05h-3.67zM429.08 318.35h3.67v2.05h-3.67zM432.55 316.46h3.67v1.74h-3.67zM432.55 320.55h3.67v1.74h-3.67zM436.03 318.35h3.67v2.05h-3.67zM436.03 316.46h3.67v1.74h-3.67zM436.03 320.55h3.67v1.74h-3.67zM439.5 314.82h3.67v1.53h-3.67zM442.97 316.46h3.67v1.74h-3.67zM446.45 316.46h3.67v1.74h-3.67zM446.45 320.55h3.67v1.74h-3.67zM449.92 314.82h3.67v1.53h-3.67zM449.92 322.39h3.67v1.53h-3.67zM453.39 316.46h3.67v1.74h-3.67zM453.39 320.55h3.67v1.74h-3.67zM460.34 316.46h3.67v1.74h-3.67zM460.34 320.55h3.67v1.74h-3.67zM463.81 318.35h3.67v2.05h-3.67zM467.29 318.35h3.67v2.05h-3.67zM470.76 316.46h3.67v1.74h-3.67zM470.76 320.55h3.67v1.74h-3.67zM474.23 320.55h3.67v1.74h-3.67zM477.71 320.55h3.67v1.74h-3.67zM481.18 318.35h3.67v2.05h-3.67zM481.18 316.46h3.67v1.74h-3.67zM484.65 316.46h3.67v1.74h-3.67zM488.12 318.35h3.67v2.05h-3.67zM488.12 316.46h3.67v1.74h-3.67zM488.12 320.55h3.67v1.74h-3.67zM502.02 314.82h3.67v1.53h-3.67zM502.02 322.39h3.67v1.53h-3.67zM505.49 318.35h3.67v2.05h-3.67zM508.96 318.35h3.67v2.05h-3.67zM512.44 318.35h3.67v2.05h-3.67zM515.91 318.35h3.67v2.05h-3.67zM515.91 320.55h3.67v1.74h-3.67zM519.38 318.35h3.67v2.05h-3.67zM519.38 320.55h3.67v1.74h-3.67zM522.86 318.35h3.67v2.05h-3.67zM564.54 316.46h3.67v1.74h-3.67zM571.48 320.55h3.67v1.74h-3.67zM574.96 316.46h3.67v1.74h-3.67zM574.96 320.55h3.67v1.74h-3.67zM578.43 316.46h3.67v1.74h-3.67zM581.9 318.35h3.67v2.05h-3.67zM585.38 320.55h3.67v1.74h-3.67zM588.85 318.35h3.67v2.05h-3.67zM588.85 320.55h3.67v1.74h-3.67zM592.32 318.35h3.67v2.05h-3.67zM595.79 318.35h3.67v2.05h-3.67zM599.27 318.35h3.67v2.05h-3.67zM602.74 318.35h3.67v2.05h-3.67zM602.74 316.46h3.67v1.74h-3.67zM602.74 320.55h3.67v1.74h-3.67zM606.21 318.35h3.67v2.05h-3.67zM609.69 318.35h3.67v2.05h-3.67zM609.69 320.55h3.67v1.74h-3.67zM613.16 318.35h3.67v2.05h-3.67zM613.16 320.55h3.67v1.74h-3.67zM616.63 318.35h3.67v2.05h-3.67zM623.58 318.35h3.67v2.05h-3.67zM627.05 316.46h3.67v1.74h-3.67zM627.05 320.55h3.67v1.74h-3.67zM630.53 316.46h3.67v1.74h-3.67zM630.53 320.55h3.67v1.74h-3.67zM634 320.55h3.67v1.74h-3.67zM634 322.39h3.67v1.53h-3.67zM637.47 318.35h3.67v2.05h-3.67zM640.95 318.35h3.67v2.05h-3.67zM644.42 318.35h3.67v2.05h-3.67zM654.84 318.35h3.67v2.05h-3.67zM654.84 316.46h3.67v1.74h-3.67zM658.31 318.35h3.67v2.05h-3.67zM658.31 320.55h3.67v1.74h-3.67zM661.79 318.35h3.67v2.05h-3.67zM661.79 316.46h3.67v1.74h-3.67zM665.26 318.35h3.67v2.05h-3.67zM665.26 320.55h3.67v1.74h-3.67zM668.73 318.35h3.67v2.05h-3.67zM668.73 316.46h3.67v1.74h-3.67zM682.62 318.35h3.67v2.05h-3.67zM738.2 316.46h3.67v1.74h-3.67zM741.67 316.46h3.67v1.74h-3.67zM741.67 320.55h3.67v1.74h-3.67zM745.14 318.35h3.67v2.05h-3.67zM748.62 318.35h3.67v2.05h-3.67zM752.09 318.35h3.67v2.05h-3.67zM755.56 318.35h3.67v2.05h-3.67zM755.56 320.55h3.67v1.74h-3.67zM759.04 318.35h3.67v2.05h-3.67zM762.51 318.35h3.67v2.05h-3.67zM765.98 318.35h3.67v2.05h-3.67zM772.93 318.35h3.67v2.05h-3.67zM776.4 318.35h3.67v2.05h-3.67zM779.88 318.35h3.67v2.05h-3.67zM783.35 318.35h3.67v2.05h-3.67zM897.96 316.46h3.67v1.74h-3.67zM901.44 320.55h3.67v1.74h-3.67zM904.91 316.46h3.67v1.74h-3.67zM904.91 320.55h3.67v1.74h-3.67zM908.38 318.35h3.67v2.05h-3.67zM908.38 320.55h3.67v1.74h-3.67zM911.86 318.35h3.67v2.05h-3.67zM915.33 318.35h3.67v2.05h-3.67zM918.8 318.35h3.67v2.05h-3.67zM922.28 318.35h3.67v2.05h-3.67zM925.75 318.35h3.67v2.05h-3.67zM929.22 318.35h3.67v2.05h-3.67zM932.7 318.35h3.67v2.05h-3.67zM936.17 318.35h3.67v2.05h-3.67zM946.59 318.35h3.67v2.05h-3.67zM950.06 318.35h3.67v2.05h-3.67zM953.54 318.35h3.67v2.05h-3.67zM1036.89 318.35h3.67v2.05h-3.67zM1036.89 320.55h3.67v1.74h-3.67zM1071.62 316.46h3.67v1.74h-3.67zM1078.57 318.35h3.67v2.05h-3.67zM1085.52 318.35h3.67v2.05h-3.67zM1088.99 318.35h3.67v2.05h-3.67zM1092.46 318.35h3.67v2.05h-3.67zM1095.94 320.55h3.67v1.74h-3.67zM1099.41 318.35h3.67v2.05h-3.67zM1099.41 320.55h3.67v1.74h-3.67zM1106.36 316.46h3.67v1.74h-3.67zM1106.36 320.55h3.67v1.74h-3.67zM1106.36 322.39h3.67v1.53h-3.67zM1109.83 318.35h3.67v2.05h-3.67zM1109.83 320.55h3.67v1.74h-3.67zM1113.3 318.35h3.67v2.05h-3.67zM1113.3 316.46h3.67v1.74h-3.67zM1116.78 318.35h3.67v2.05h-3.67zM1120.25 318.35h3.67v2.05h-3.67zM1120.25 320.55h3.67v1.74h-3.67zM1123.72 318.35h3.67v2.05h-3.67zM1123.72 320.55h3.67v1.74h-3.67zM1127.2 318.35h3.67v2.05h-3.67zM1130.67 318.35h3.67v2.05h-3.67zM1134.14 316.46h3.67v1.74h-3.67zM1134.14 320.55h3.67v1.74h-3.67zM1134.14 322.39h3.67v1.53h-3.67zM1141.09 316.46h3.67v1.74h-3.67zM1141.09 320.55h3.67v1.74h-3.67zM1141.09 314.82h3.67v1.53h-3.67zM1148.04 318.35h3.67v2.05h-3.67zM1151.51 318.35h3.67v2.05h-3.67zM1165.4 318.35h3.67v2.05h-3.67zM1168.88 318.35h3.67v2.05h-3.67zM1175.82 318.35h3.67v2.05h-3.67zM1179.29 318.35h3.67v2.05h-3.67zM1182.77 318.35h3.67v2.05h-3.67zM1238.34 316.46h3.67v1.74h-3.67zM1241.81 316.46h3.67v1.74h-3.67zM1245.29 316.46h3.67v1.74h-3.67zM1245.29 320.55h3.67v1.74h-3.67zM1245.29 322.39h3.67v1.53h-3.67zM1248.76 318.35h3.67v2.05h-3.67zM1252.23 318.35h3.67v2.05h-3.67zM1252.23 316.46h3.67v1.74h-3.67zM1255.71 318.35h3.67v2.05h-3.67zM1259.18 318.35h3.67v2.05h-3.67zM1262.65 320.55h3.67v1.74h-3.67zM1266.12 318.35h3.67v2.05h-3.67zM1266.12 320.55h3.67v1.74h-3.67zM1269.6 318.35h3.67v2.05h-3.67zM1273.07 318.35h3.67v2.05h-3.67zM1273.07 316.46h3.67v1.74h-3.67zM1273.07 320.55h3.67v1.74h-3.67zM1276.54 318.35h3.67v2.05h-3.67zM1276.54 320.55h3.67v1.74h-3.67zM1280.02 320.55h3.67v1.74h-3.67zM1283.49 318.35h3.67v2.05h-3.67zM1286.96 316.46h3.67v1.74h-3.67zM1290.44 318.35h3.67v2.05h-3.67zM1293.91 318.35h3.67v2.05h-3.67zM1293.91 320.55h3.67v1.74h-3.67zM1297.38 318.35h3.67v2.05h-3.67zM1300.86 318.35h3.67v2.05h-3.67zM1300.86 316.46h3.67v1.74h-3.67zM1304.33 318.35h3.67v2.05h-3.67zM1304.33 320.55h3.67v1.74h-3.67zM1307.8 318.35h3.67v2.05h-3.67zM1307.8 320.55h3.67v1.74h-3.67zM1311.28 318.35h3.67v2.05h-3.67zM1311.28 316.46h3.67v1.74h-3.67zM1314.75 318.35h3.67v2.05h-3.67zM1318.22 318.35h3.67v2.05h-3.67zM1318.22 316.46h3.67v1.74h-3.67zM1318.22 320.55h3.67v1.74h-3.67zM1321.7 318.35h3.67v2.05h-3.67zM1325.17 318.35h3.67v2.05h-3.67zM1328.64 318.35h3.67v2.05h-3.67zM1328.64 316.46h3.67v1.74h-3.67zM1328.64 320.55h3.67v1.74h-3.67zM1332.12 318.35h3.67v2.05h-3.67zM1335.59 318.35h3.67v2.05h-3.67zM1339.06 318.35h3.67v2.05h-3.67zM1339.06 320.55h3.67v1.74h-3.67zM1349.48 318.35h3.67v2.05h-3.67zM1349.48 316.46h3.67v1.74h-3.67zM1394.63 316.46h3.67v1.74h-3.67zM1394.63 320.55h3.67v1.74h-3.67zM1398.11 316.46h3.67v1.74h-3.67zM1398.11 320.55h3.67v1.74h-3.67zM1401.58 316.46h3.67v1.74h-3.67zM1401.58 320.55h3.67v1.74h-3.67zM1405.05 316.46h3.67v1.74h-3.67zM1405.05 320.55h3.67v1.74h-3.67zM1408.53 316.46h3.67v1.74h-3.67zM1408.53 320.55h3.67v1.74h-3.67z" fill="#72b4bf"/><path d="M269.31 318.35h3.67v2.05h-3.67zM335.3 316.46h3.67v1.74h-3.67zM335.3 320.55h3.67v1.74h-3.67zM359.62 318.35h3.67v2.05h-3.67zM404.77 318.35h3.67v2.05h-3.67zM408.24 318.35h3.67v2.05h-3.67zM432.55 318.35h3.67v2.05h-3.67zM439.5 316.46h3.67v1.74h-3.67zM439.5 320.55h3.67v1.74h-3.67zM442.97 318.35h3.67v2.05h-3.67zM446.45 318.35h3.67v2.05h-3.67zM449.92 316.46h3.67v1.74h-3.67zM449.92 320.55h3.67v1.74h-3.67zM453.39 318.35h3.67v2.05h-3.67zM456.87 318.35h3.67v2.05h-3.67zM460.34 318.35h3.67v2.05h-3.67zM470.76 318.35h3.67v2.05h-3.67zM474.23 318.35h3.67v2.05h-3.67zM477.71 318.35h3.67v2.05h-3.67zM484.65 318.35h3.67v2.05h-3.67zM491.6 318.35h3.67v2.05h-3.67zM502.02 316.46h3.67v1.74h-3.67zM502.02 320.55h3.67v1.74h-3.67zM564.54 318.35h3.67v2.05h-3.67zM564.54 320.55h3.67v1.74h-3.67zM571.48 316.46h3.67v1.74h-3.67zM574.96 318.35h3.67v2.05h-3.67zM578.43 318.35h3.67v2.05h-3.67zM578.43 320.55h3.67v1.74h-3.67zM585.38 318.35h3.67v2.05h-3.67zM620.11 318.35h3.67v2.05h-3.67zM627.05 318.35h3.67v2.05h-3.67zM634 316.46h3.67v1.74h-3.67zM738.2 318.35h3.67v2.05h-3.67zM738.2 320.55h3.67v1.74h-3.67zM897.96 318.35h3.67v2.05h-3.67zM897.96 320.55h3.67v1.74h-3.67zM901.44 318.35h3.67v2.05h-3.67zM901.44 316.46h3.67v1.74h-3.67zM1071.62 320.55h3.67v1.74h-3.67zM1075.1 316.46h3.67v1.74h-3.67zM1075.1 320.55h3.67v1.74h-3.67zM1082.04 318.35h3.67v2.05h-3.67zM1095.94 318.35h3.67v2.05h-3.67zM1102.88 318.35h3.67v2.05h-3.67zM1102.88 320.55h3.67v1.74h-3.67zM1106.36 318.35h3.67v2.05h-3.67zM1137.62 316.46h3.67v1.74h-3.67zM1137.62 320.55h3.67v1.74h-3.67zM1141.09 318.35h3.67v2.05h-3.67zM1238.34 320.55h3.67v1.74h-3.67zM1241.81 318.35h3.67v2.05h-3.67zM1241.81 320.55h3.67v1.74h-3.67zM1245.29 318.35h3.67v2.05h-3.67zM1262.65 318.35h3.67v2.05h-3.67zM1280.02 318.35h3.67v2.05h-3.67zM1286.96 318.35h3.67v2.05h-3.67zM1342.54 318.35h3.67v2.05h-3.67zM1346.01 318.35h3.67v2.05h-3.67zM1394.63 318.35h3.67v2.05h-3.67zM1398.11 318.35h3.67v2.05h-3.67zM1401.58 318.35h3.67v2.05h-3.67zM1405.05 318.35h3.67v2.05h-3.67zM1408.53 318.35h3.67v2.05h-3.67z" fill="#5a93cb"/><path d="M439.5 318.35h3.67v2.05h-3.67zM571.48 318.35h3.67v2.05h-3.67zM630.53 318.35h3.67v2.05h-3.67zM634 318.35h3.67v2.05h-3.67zM741.67 318.35h3.67v2.05h-3.67zM904.91 318.35h3.67v2.05h-3.67zM1071.62 318.35h3.67v2.05h-3.67zM1075.1 318.35h3.67v2.05h-3.67zM1134.14 318.35h3.67v2.05h-3.67zM1137.62 318.35h3.67v2.05h-3.67zM1238.34 318.35h3.67v2.05h-3.67z" fill="#3868d2"/><path d="M335.3 318.35h3.67v2.05h-3.67zM449.92 318.35h3.67v2.05h-3.67zM502.02 318.35h3.67v2.05h-3.67z" fill="#1f2270"/><g fill="none" stroke-width="1.6" stroke-linejoin="round"><polyline points="245.4,221.4 248.5,217.5 251.6,216 254.8,218.3 258.6,217.2 261.7,212.1 265.2,216.8 268.7,203.6 272.1,216.3 275.7,213.2 278.8,214.4 282.7,212.9 286.6,215.2 290.5,216.8 293.6,216 296.7,218.3" stroke="#d4609a"/><polyline points="293.6,224.5 299.8,212.9 302.9,215.2 306.8,210.6 310.2,216" stroke="#a3478f"/><polyline points="309.9,224.5 313.8,216.8 316.9,223.8" stroke="#4a8fe0"/><polyline points="316,224.5 320.7,217.5 324.6,223.8" stroke="#dc5f6b"/><polyline points="323.8,224.5 327.7,216.8 330.8,223" stroke="#a03a6c"/><polyline points="328.5,224.5 331.6,220.7 334.7,181.1 337.8,209" stroke="#8c2f42"/><polyline points="335.5,224.5 338.6,221.4 341.7,202 345.3,212.1" stroke="#e07c70"/><polyline points="344.8,224.5 348.7,212.1 351.8,216" stroke="#a6a447"/><polyline points="348.7,224.5 351.8,222.2 354.9,222.5 359.1,202.8 362.7,217.5 365.8,221.4 370.4,223.8 373.5,223.8 376.6,221.4 379.8,222.5 383.2,219.9 386.7,223 392.2,224.5 400.7,224.5 404.3,200.5 407.7,211.3 411.3,220.7 414.7,215.2 418.3,212.9 421.7,215.2 424.8,216.3 428.4,216.8 432.1,197.4 435.7,202 439.1,177.2 442.3,205.1 445.7,206.7 449.3,163.2 453,200.5 456.6,206.7 460,201.2 463.6,214.4 466.7,209 470.6,215.2" stroke="#8d8f33"/><polyline points="467.5,224.5 470.6,219.9 473.7,209 477.3,216 480.7,212.9 484.1,214.4 487.7,206.7 491.1,203.6" stroke="#93a548"/><polyline points="488.4,224.5 490.8,223.8 494.7,210.6 497,208.2" stroke="#7a58c0"/><polyline points="493.9,224.5 497,214.4 501.3,176.4 504.8,204.3 508.2,212.9 511.4,219.1" stroke="#cc7b3c"/><polyline points="510.2,224.5 515.6,218.3 522.3,214.8 525.7,223.8" stroke="#c47238"/><polyline points="522.6,224.5 525.7,222.2 528.8,222.2 532.7,218.3 535.8,222.2 538.9,224.5" stroke="#5aaa64"/><polyline points="541.2,224.5 545.1,223.8 559.9,224.5 563.8,200.5 567.6,221.4 571.1,198.9 574.6,192.7 578.2,204.3 581.6,206.7 588.9,219.9" stroke="#9c3470"/><polyline points="585.5,223.8 588.9,219.9 595.6,216.8 598.7,206.7 601.8,215.2 605.7,217.5 609.3,215.2 612.7,214.4 616.1,203.6 619.7,212.1 623.2,209 626.6,191.5 630.1,197.4 633.6,209.8 637.2,208.2" stroke="#7b2b62"/><polyline points="633.9,224.5 637,222.2 640.6,217.2 644,220.7 649.4,218.3 654.8,211.3 657.6,211" stroke="#e283b4"/><polyline points="655.6,224.5 658,222.2 661,213.7 665,211.3 668,211.3 671.6,219.1 675,221 678.4,220.7" stroke="#3f7f3a"/><polyline points="678.9,224.5 685.6,217.2 689,222.2 692.4,218.8 696,221.4 699.1,224" stroke="#b08fd6"/><polyline points="700.7,224 707.6,223 713.1,221.7 716.6,224.2" stroke="#93993f"/><polyline points="730.9,224.5 734.3,223.8 737.6,198.1 741,212.1" stroke="#a0a040"/><polyline points="741.8,224.5 748,219.1 754.2,218.8 763.5,219.1 772.9,218.6 783,217.2 790,223.8 799.3,223.3 805.5,224.2" stroke="#4252a3"/><polyline points="808.6,224.4 817.9,223.8 824,224.4 840,224.1 852,223.8 855,224.4" stroke="#4aa585"/><polyline points="893.2,224.5 897.1,209 901,219.9 904.5,206.7 911.5,222.5 914.9,220.3 921.9,218.8 928.1,218 932,219.1 939,215.2 942.9,217.9 946,218 949.6,216.3 956.9,222.2 960,222.5 963.1,221.9 974,223.4 980.2,223.3 987.1,224.2 1018.2,224.2" stroke="#7f302f"/><polyline points="1020,224.2 1032.4,223.8 1036.3,214.1 1039.9,223.8 1043.3,222.5 1046.4,224.2" stroke="#cd8a55"/><polyline points="1065,224.5 1068.1,223.8 1071.2,212.9 1074.7,187.3 1078.2,221.4 1081.6,219.1 1085.2,215.2 1088.6,214.1 1091.9,218.3 1099.2,208.2 1102.3,195.8 1105.9,209.5 1109.3,209 1112.9,215.2 1116.3,216 1120.2,218.8 1123.6,216.3 1127.1,218.3 1130.2,223" stroke="#a9a262"/><polyline points="1127.9,224.5 1130.2,222.2 1133.7,198.1 1137.2,209.8 1140.8,193.2 1144.2,220.7 1145.8,224.5" stroke="#a43b4b"/><polyline points="1143.4,224.5 1147.6,213.2 1151.2,220.7" stroke="#5e2a22"/><polyline points="1151.2,223.8 1154.8,218.8 1158.2,223.8" stroke="#e08080"/><polyline points="1158.2,224.5 1161.6,216 1165.2,214.4 1168.6,207.5 1172.2,220.7" stroke="#6f6d22"/><polyline points="1169.1,224.5 1175.3,218.3 1178.9,208.2 1182.3,207.8 1186.1,223 1188.5,223.8 1192.4,220.7" stroke="#c472a4"/><polyline points="1192.4,224.2 1199.3,223.8 1206.3,224.2 1215.7,223.8 1220.3,222.2 1223.4,224.2 1234.3,224.2 1237.7,200.5 1241.3,205.1 1245.2,208.2 1248.3,212.1 1252.1,217.5 1255.2,218.3 1259.1,216.8 1262.2,217.2 1265.3,216 1269.2,209 1272.3,209.8 1275.9,211.6 1279.3,196.6 1283.2,212.9 1286.8,216 1290.2,209 1293.6,212.6 1296.9,197.4 1300.3,200.5 1304.2,209.8 1307.3,198.9 1311.1,214.4 1314.3,205.1 1317.8,206.7" stroke="#807c2e"/><polyline points="1314.3,224.5 1317.4,216.8 1321.2,209.8 1324.7,210.2" stroke="#5b94e3"/><polyline points="1325.1,224.5 1328.2,209.8 1331.3,222.2" stroke="#8b2b6b"/><polyline points="1328.2,224.5 1331.8,207.5 1335.2,214.1 1339.1,216 1342.2,216.5 1345.6,219.4 1348.9,216 1352.3,218.8" stroke="#3c9373"/><polyline points="1350,224.2 1356.2,222.2 1361.6,223.4 1366.3,224.2" stroke="#2a66d0"/><polyline points="1366.3,224.2 1369.7,220.3 1373.3,224.2 1376.8,224.2 1380.2,221.1 1384.1,223.4 1387.2,223.8" stroke="#d2833f"/><polyline points="1389.6,224.2 1397.3,218.3 1401.2,209 1404.8,187.3 1408.2,206.7 1411.8,224.5" stroke="#a382c9"/></g><g fill="none" stroke-width="1.6" stroke-linejoin="round"><polyline points="245.4,456.8 247.8,464.5 250.9,459.9 254.8,462.7 258.6,463.7 261.7,461.4 265.6,464.5 268.7,464.5 272.6,460.2 275.7,460.6 279.1,456.8 282.7,465.8 285.8,464.8 289.7,461.4 293.1,449.8 296.2,454" stroke="#d4609a"/><polyline points="293.1,478.5 296.7,465.3 302.1,463 306.8,459.9 310.7,459.6" stroke="#a3478f"/><polyline points="306.8,478.5 313.8,447 317.2,455.5" stroke="#4a8fe0"/><polyline points="313.8,478.5 317.2,461.4 320.7,459.1 324.6,462.2" stroke="#dc5f6b"/><polyline points="320.7,478.5 323.9,463 327.7,456.5 330,461.4" stroke="#a03a6c"/><polyline points="327.7,478.5 330.8,460.2 337.8,456" stroke="#8c2f42"/><polyline points="334.7,478.5 337.8,461.7 341.7,463.7 344.3,460.6" stroke="#e07c70"/><polyline points="341.7,478.5 345.3,452.9 348.7,457.5 351.8,455.2" stroke="#a6a447"/><polyline points="348.7,478.5 355.4,441.2 359.1,456 362.7,446.7 369.7,459.6 376.6,456 380.2,459.9 383.6,458.3 387,450.9 390.3,463 393.7,456 397.3,460.6 404.3,465.3 411.3,458.3 414.7,462.2 418.3,455.5 421.7,464.5 425.2,463.7 428.7,465.3 432.1,462.7 439.1,463.4 442.3,459.6 445.7,459.1 449.3,456 453,465.3 456.3,451.3 460,459.1 463.6,460.6 466.7,462.5 470.3,455.5" stroke="#8d8f33"/><polyline points="466.7,478.5 470.3,460.6 477.3,464.2 480.7,461.1 484.1,460.2 487.7,453.2 491.1,456.3" stroke="#93a548"/><polyline points="487.7,478.5 491.1,462.2 494.3,452.4 497.8,456" stroke="#7a58c0"/><polyline points="494.7,478.5 497.8,465.3 501.3,456.3 504.8,457.5 511.7,463.4" stroke="#cc7b3c"/><polyline points="508.6,478.5 511.7,463.4 515.2,462.5 518.7,452.1 522.3,438.6 525.7,449.8" stroke="#c47238"/><polyline points="522.6,478.5 525.7,463 529.1,458.3 532.7,456.8 536.3,451.3 539.7,460.2" stroke="#5aaa64"/><polyline points="536.3,478.5 539.7,417.2 543.1,459.6 546.7,464.2 550.2,460.6 553.7,463 557.1,443.6 560.7,463 564.2,455.5 567.6,458.3 571.1,465.3 574.6,461.4 581.6,455.7 585.5,463.7 588.6,466.1" stroke="#9c3470"/><polyline points="585,478.5 588.6,455.5 595.6,462.2 601.8,462.5 605.7,464.8 609.3,456.8 612.7,464.2 616.1,461.4 619.7,460.2 623.2,463 626.6,460.6 630.1,459.1 633.6,451.3 637.2,460.6" stroke="#7b2b62"/><polyline points="633.9,478.5 637,464.5 647.1,463.7 654.1,452.1 657.6,453.7" stroke="#e283b4"/><polyline points="654.5,478.5 658,464.8 661.1,464.5 664.5,454 668,460.6 671.6,458.3 675,463 678.1,464.5" stroke="#3f7f3a"/><polyline points="675.3,478.5 678.4,462.2 682,459.9 685.6,450.2 689,458.3 692.6,447.4 699.4,452.9" stroke="#b08fd6"/><polyline points="696.5,478.5 699.9,464.8 703,464.8 706.6,452.9 710,466.4 713.1,466.1 716.6,460.2 720.4,466.1 730.9,466.1 734.3,464.2 737.9,464.2 740.6,466.1" stroke="#93993f"/><polyline points="737.9,478.5 741,454.4 748,467.2 751.1,465.8 755.8,467.3 762,466.5 769.8,466.9 779.1,466.4 783,466.9 786.1,465.3 789.9,466.9 800.8,466.5 807.8,466.1 810.9,463 814.5,459.6 817.6,465.8" stroke="#4252a3"/><polyline points="814.5,478.5 817.9,465.3 821.3,456.8 824.9,457.8 828,457.5 831.4,464.2 835,462.5 838.4,464.5 842,463.7 845.4,466.1 848.9,466.4 852.4,463 855.9,466.9 858.3,466.4" stroke="#4aa585"/><polyline points="856.4,478.5 859.8,464.1 862.9,464.8 866.5,466.9 872.2,466.1 876.9,464.1 880.8,464.8 886.2,466.9 897.1,465.8 901,463.7 904.8,465.8 911.1,467.3 917.3,467.3 928.1,466.9 932,465.8 935.9,466.1 939,463 942.9,464.2 946,466.5 949.6,458.3 953,464.8 956.9,465.6 963.9,465.8 967,466.9 974,466.4 977.5,460.6 980.9,446.7 984.5,463.7 987.9,466.5 1001.1,466.9 1005,465.8 1016.6,466.5" stroke="#7f302f"/><polyline points="1015.9,478.5 1019,464.5 1022.9,466.9 1026.2,465.8 1029.6,466.9 1032.9,454.4 1036.8,459.9 1040.2,459.1 1043.6,455.2 1047.2,465.3 1050.7,466.4 1053.4,465.3" stroke="#cd8a55"/><polyline points="1050.7,478.5 1053.9,464.8 1057.3,464.1 1061.1,466.9 1071.2,465.6 1074.7,461.4 1078.2,460.2 1081.6,465.6 1085.2,463.7 1088.6,466.1 1092.2,464.5 1095.6,466.1 1102.3,460.2 1105.9,464.8 1109.3,463.3 1112.9,463.3 1116.3,456.8 1120.2,463 1123.3,464.8 1127.1,461.9 1130.2,462.7" stroke="#a9a262"/><polyline points="1126.8,478.5 1130.2,466.1 1133.7,465.3 1137.2,459.6 1140.8,460.6 1143.9,460.2" stroke="#a43b4b"/><polyline points="1140.8,478.5 1144.2,463 1147.6,464.1 1150.4,465.3" stroke="#5e2a22"/><polyline points="1147.6,478.5 1151.2,460.6 1154.8,456.3 1157.4,461.4" stroke="#e08080"/><polyline points="1154.8,478.5 1158.2,463 1161.6,455.5 1165.2,453.3 1168.6,463 1171.4,465.3" stroke="#6f6d22"/><polyline points="1168.8,478.5 1172.2,463 1175.3,453.7 1178.9,458.6 1182.3,458 1185.8,456.3 1189.3,421.8 1192.4,422.9" stroke="#c472a4"/><polyline points="1189.3,478.5 1192.7,423.4 1196.2,463.7 1199.8,437.8 1203.2,459.9 1206.8,466.1 1210.2,465.8 1213.6,450.9 1217.2,460.6 1220.6,454.1 1224.2,467.6 1228.1,467.3 1231.2,465.8 1234.8,467.3 1238.2,466.1 1241.3,465.3 1245.2,459.9 1248.6,461 1252.1,461 1255.7,465.3 1259.1,463 1262.2,460.2 1265.8,459.1 1269.2,462.2 1272.8,462.5 1276.2,453.3 1279.6,461.4 1283.2,464.5 1286.8,464.1 1290.2,461.4 1293.6,458.6 1296.9,460.6 1300.3,464.1 1304.2,460.2 1307.3,461.4 1311.1,453.7 1314.6,449.8 1317.8,462.2" stroke="#807c2e"/><polyline points="1314.6,478.5 1317.8,452.4 1321.2,460.2 1324.7,458" stroke="#5b94e3"/><polyline points="1325.1,478.5 1328.2,458.6 1331,465.3" stroke="#8b2b6b"/><polyline points="1328.2,478.5 1331.8,461.4 1335.2,449.3 1338.8,463.7 1342.2,452.9 1345.6,460.6 1348.9,455.7 1352.3,459.9" stroke="#3c9373"/><polyline points="1349.2,478.5 1352.6,463 1356.2,458.3 1359.8,455.5 1363.2,464.5 1366.3,466.1" stroke="#2a66d0"/><polyline points="1363.2,478.5 1366.6,466.4 1369.8,459.9 1373.6,466.9 1377.1,458.3 1380.7,456.3 1384.1,456.8 1387.2,466.4" stroke="#d2833f"/><polyline points="1384.1,478.5 1387.6,466.9 1390.8,456.8 1394.2,465.3 1397.6,459.9 1401.2,464.5 1404.8,464.1 1408.2,466.1 1411.8,458.3" stroke="#a382c9"/></g><g fill="none" stroke-width="1.6" stroke-linejoin="round"><polyline points="245.4,562.9 247.8,566.8 250.9,564.5 254.8,569.1 258.6,569.4 261.7,568.3 265.6,564.8 268.7,564.8 272.6,567.6 279.1,567.9 285.8,570.7 289.7,564 293.1,564 296.2,568.8" stroke="#d4609a"/><polyline points="293.1,605.3 296.7,568.3 302.1,564.8 306.8,563.7 310.7,566.8" stroke="#a3478f"/><polyline points="306.8,605.3 310.7,564.5 313.8,552.8 317.2,558.3" stroke="#4a8fe0"/><polyline points="313.8,605.3 317.2,562.1 320.7,564 323.9,563.7" stroke="#dc5f6b"/><polyline points="320.7,605.3 324.2,557.5 327.7,564.5 330.8,566.8" stroke="#a03a6c"/><polyline points="327.7,605.3 331.3,546.6 334.7,555.9 338.1,564.5" stroke="#8c2f42"/><polyline points="334.7,605.3 338.1,569.1 341.7,562.9 345.3,564.5" stroke="#e07c70"/><polyline points="341.7,605.3 345.3,566 348.7,567.6 351.5,567.3" stroke="#a6a447"/><polyline points="348.7,605.3 351.8,566.8 355.4,543.5 359.1,548.2 366.1,563.2 369.7,564.8 373.1,564.5 376.6,548.9 380.2,568 383.6,548.6 387,581.2 394.2,544 397.6,544 401,545.8 404.3,554.7 407.7,555.1 411.3,564.8 414.7,567.1 418.3,562.9 421.7,569.1 425.2,568 428.7,567.9 432.1,561.7 435.7,562.9 439.1,553.6 442.3,564.2 445.7,565.2 449.3,550 453,564.8 456.6,563.7 460,560.9 463.6,562.6 470.3,566" stroke="#8d8f33"/><polyline points="466.7,605.3 470.3,571 473.7,565.2 477.3,570.7 480.7,564.8 484.1,569.4 487.7,564.8 491.1,561" stroke="#93a548"/><polyline points="487.7,605.3 491.1,567.6 494.3,559 497.8,555.5" stroke="#7a58c0"/><polyline points="494.7,605.3 501.3,552 504.8,559.8 508.6,566 511.7,572.2" stroke="#cc7b3c"/><polyline points="508.6,605.3 511.7,569.1 515.2,569.9 518.7,573.8 522.3,568 525.7,565.2" stroke="#c47238"/><polyline points="522.6,605.3 525.7,565.2 529.1,561 532.7,562.9 536.3,555.9 539.7,561.4" stroke="#5aaa64"/><polyline points="536.3,605.3 539.7,562.9 543.1,564.8 546.7,563.7 550.2,546.1 553.7,556.7 557.1,545.1 560.7,545.5 564.2,548.2 567.6,568.3 571.1,555.1 578.2,549.7 581.6,559.8 585,572.2 588.6,574.6" stroke="#9c3470"/><polyline points="585,605.3 588.6,562.1 592,569.9 595.6,572.7 598.7,562.1 605.7,572.2 609.3,567.1 612.7,570.7 616.1,568.3 619.7,564.5 626.6,563.7 630.1,555.1 633.6,566.8 637.2,562.1" stroke="#7b2b62"/><polyline points="633.9,605.3 637,575.6 640.6,575 644,567.9 647.4,575 651,575.8 654.5,546.1 658,558.3" stroke="#e283b4"/><polyline points="654.5,605.3 658,566.3 661.1,566.8 664.5,565.2 668,565.5 671.6,563.7 675,568.3 678.4,572.2" stroke="#3f7f3a"/><polyline points="675.3,605.3 678.4,554.4 682,557.2 685.6,554.4 689,566.8 692.6,548.9 696,544.3 699.4,548.2" stroke="#b08fd6"/><polyline points="696.5,605.3 699.9,545.5 703,563.2 706.6,565.2 710,568.3 713.9,568.8 720.4,545.1 723.9,544 727.5,544.6 730.9,546.1 734.3,573 737.9,555.5 741,555.9" stroke="#93993f"/><polyline points="737.9,605.3 741,578.4 744.6,569.4 748,573 751.4,570.7 758.1,573 762,571.4 765.9,571.8 769.3,574.1 772.9,573 776.3,573 779.8,571.8 783,572.2 786.1,571 789.9,567.9 793.4,569.9 796.9,567.6 800.3,572.5 803.9,569.4 807.3,544 810.9,548.2 814.5,564.5 817.6,545.5" stroke="#4252a3"/><polyline points="814.5,605.3 817.9,572.2 821.3,567.6 824.9,544.3 828,544.6 831.4,563.2 835,544.6 838.4,550.5 842,562.9 845.4,544.3 848.9,544.3 852.4,555.9 855.9,544.6 859.5,543.5" stroke="#4aa585"/><polyline points="856.4,605.3 859.8,558.3 862.9,543.5 872.2,543 876.9,549.7 884.3,543 894.8,543.5 897.4,577.2 901,562.9 904.5,554.4 908,558.3 911.5,569.9 914.9,573 918.8,571.8 924.6,572.5 932,570.7 935.9,572.2 939,569.4 946,569.4 949.6,567.9 953,570.7 956.9,567.1 960,568.8 963.5,566.5 967,569.4 974,568.8 977.5,569.9 980.9,556.7 984.5,563.7 998,564 1001.6,566 1005,562.1 1012.8,567.6 1019,562.1" stroke="#7f302f"/><polyline points="1015.9,605.3 1019,563.4 1023.1,563.4 1026.2,560.6 1029.6,561.4 1032.9,557.9 1036.8,575 1040.2,567.6 1043.6,565.2 1047.2,547.4 1050.7,544 1053.4,559.8" stroke="#cd8a55"/><polyline points="1050.7,605.3 1053.9,559.8 1057.3,544 1060.7,544.3 1064.3,556.7 1067.8,575.6 1071.2,555.9 1074.7,550.2 1078.2,568.3 1081.6,570.2 1085.2,573 1088.6,571.4 1092.2,570.4 1095.6,581.5 1099.2,567.9 1102.3,566.3 1105.9,571.4 1112.9,558.6 1116.3,569.1 1120.2,565.2 1123.3,567.6 1127.1,569.4 1130.2,569.1" stroke="#a9a262"/><polyline points="1126.8,605.3 1130.2,569.4 1133.7,577.7 1137.2,566 1140.8,564.5 1143.9,564.8" stroke="#a43b4b"/><polyline points="1140.8,605.3 1144.2,572.5 1147.6,576.1 1151.2,584.6" stroke="#5e2a22"/><polyline points="1147.6,605.3 1151.2,564.5 1154.8,567.6 1157.9,568.3" stroke="#e08080"/><polyline points="1154.8,605.3 1158.2,567.9 1161.6,558.3 1165.2,561.4 1168.6,573.8 1170.6,573.5" stroke="#6f6d22"/><polyline points="1168.8,605.3 1172.2,559.8 1175.3,577.7 1178.9,585 1182.3,577.7 1189.3,561.4 1192.7,570.7" stroke="#c472a4"/><polyline points="1189.3,605.3 1192.7,563.4 1196.2,565.2 1199.8,573 1203.2,561 1206.8,563.7 1210.2,557 1213.6,559.8 1217.2,560.6 1220.6,562.9 1224.2,577.2 1231.2,553.6 1234.8,572.2 1238.2,554.4 1241.3,555.5 1245.2,560.1 1248.6,562.1 1252.1,566 1255.7,572.2 1259.1,568.8 1265.8,568.8 1269.2,569.9 1272.8,567.6 1279.6,575 1283.2,573 1286.8,573.8 1293.6,567.3 1296.9,562.9 1300.3,567.1 1304.2,569.1 1307.3,567.6 1311.1,569.4 1314.6,576.9 1317.8,583.1" stroke="#807c2e"/><polyline points="1314.6,605.3 1317.8,565.2 1321.2,569.1 1324.7,576.1" stroke="#5b94e3"/><polyline points="1325.1,605.3 1328.2,567.3 1330.1,571.4" stroke="#8b2b6b"/><polyline points="1328.2,605.3 1331.8,569.1 1335.2,571.9 1338.8,573 1342.2,555.1 1345.6,566.8 1348.9,559.8 1352.3,563.7" stroke="#3c9373"/><polyline points="1349.2,605.3 1352.6,572.2 1356.2,572.2 1359.8,566.8 1363.2,565.2 1366.3,567.9" stroke="#2a66d0"/><polyline points="1363.2,605.3 1366.6,572.2 1369.8,565.5 1373.6,567.6 1377.1,565.5 1380.7,568.3 1384.1,576.1 1387.2,580" stroke="#d2833f"/><polyline points="1384.1,605.3 1387.2,555.1 1390.8,563.4 1394.2,565.2 1397.6,571.8 1401.2,570.4 1404.8,559.8 1408.2,561.4 1411.8,567.1" stroke="#a382c9"/></g><g fill="none" stroke-width="1.6" stroke-linejoin="round"><polyline points="245.4,689.89 247.8,692.72 250.9,691.31 254.8,694.78 258.6,695.17 261.7,694.18 265.6,691.42 268.7,691.39 272.6,693.57 279.1,694.04 285.8,695.94 289.7,690.87 293.1,690.79 296.2,694.4" stroke="#d4609a"/><polyline points="293.1,732.2 296.7,694.05 302.1,691.37 306.8,690.5 310.7,692.79" stroke="#a3478f"/><polyline points="306.8,732.2 310.7,690.26 313.8,681.69 317.2,685.33" stroke="#4a8fe0"/><polyline points="313.8,732.2 317.2,689.07 320.7,690.49 323.9,690.34" stroke="#dc5f6b"/><polyline points="320.7,732.2 324.2,685.44 327.7,690.81 330.8,692.84" stroke="#a03a6c"/><polyline points="327.7,732.2 331.3,676.22 334.7,683.59 338.1,690.46" stroke="#8c2f42"/><polyline points="334.7,732.2 338.1,694.57 341.7,689.97 345.3,690.91" stroke="#e07c70"/><polyline points="341.7,732.2 345.3,692.41 348.7,693.6 351.5,693.44" stroke="#a6a447"/><polyline points="348.7,732.2 351.8,691.49 355.4,674.16 359.1,677.44 366.1,689.32 369.7,691.19 373.1,690.35 376.6,679.09 380.2,692.37 383.6,679.57 387,702.37 394.2,674.98 397.6,673.46 401,675.24 404.3,682.22 407.7,683.33 411.3,690.95 414.7,692.97 418.3,690.08 421.7,694.65 425.2,694.07 428.7,693.67 432.1,688.92 435.7,689.18 439.1,682.49 442.3,690.34 445.7,690.92 449.3,679.83 453,690.59 456.6,690.25 460,688.11 463.6,689.45 470.3,692.08" stroke="#8d8f33"/><polyline points="466.7,732.2 470.3,696.23 473.7,692.1 477.3,695.85 480.7,691.72 484.1,694.83 487.7,691.3 491.1,688.25" stroke="#93a548"/><polyline points="487.7,732.2 491.1,693.12 494.3,686.5 497.8,683.5" stroke="#7a58c0"/><polyline points="494.7,732.2 501.3,680.77 504.8,686.9 508.6,692.3 511.7,697.23" stroke="#cc7b3c"/><polyline points="508.6,732.2 511.7,695.02 515.2,695.79 518.7,698.59 522.3,694.15 525.7,691.79" stroke="#c47238"/><polyline points="522.6,732.2 525.7,691.34 529.1,688.26 532.7,689.25 536.3,684.15 539.7,687.99" stroke="#5aaa64"/><polyline points="536.3,732.2 539.7,689.76 543.1,691.14 546.7,689.61 550.2,676.4 553.7,683.35 557.1,674.84 560.7,674.77 564.2,677.74 567.6,692.85 571.1,683.26 578.2,678.95 581.6,687.07 585,697.2 588.6,699.54" stroke="#9c3470"/><polyline points="585,732.2 588.6,689.45 592,695.44 595.6,697.49 598.7,689.84 605.7,696.98 609.3,693.62 612.7,696.09 616.1,694.22 619.7,691.14 626.6,689.99 630.1,683.8 633.6,692.28 637.2,689.25" stroke="#7b2b62"/><polyline points="633.9,732.2 637,700.52 640.6,699.76 644,694.55 647.4,699.77 651,699.42 654.5,676.99 658,684.89" stroke="#e283b4"/><polyline points="654.5,732.2 658,692.59 661.1,692.9 664.5,691.7 668,691.78 671.6,690.6 675,694.25 678.4,697.38" stroke="#3f7f3a"/><polyline points="675.3,732.2 678.4,682.51 682,684.49 685.6,682.98 689,691.69 692.6,678.17 696,674.01 699.4,676.74" stroke="#b08fd6"/><polyline points="696.5,732.2 699.9,675.81 703,689.22 706.6,691.66 710,694.17 713.9,693.67 720.4,675.3 723.9,673.46 727.5,673.94 730.9,676.28 734.3,696.41 737.9,684.04 741,683.59" stroke="#93993f"/><polyline points="737.9,732.2 741,702.39 744.6,695.77 748,698.07 751.4,696.54 758.1,698.15 762,697.03 765.9,697.37 769.3,699.12 772.9,698.37 776.3,698.27 779.8,697.36 783,697.57 786.1,696.52 789.9,694.16 793.4,695.47 796.9,693.99 800.3,697.55 803.9,694.27 807.3,674.65 810.9,677.51 814.5,689.49 817.6,675.9" stroke="#4252a3"/><polyline points="814.5,732.2 817.9,697.34 821.3,692.87 824.9,674.65 828,674.68 831.4,688.29 835,674.95 838.4,679.25 842,688.3 845.4,674.44 848.9,674.14 852.4,682.63 855.9,674.34 859.5,673.02" stroke="#4aa585"/><polyline points="856.4,732.2 859.8,684.73 862.9,673.57 872.2,672.83 876.9,677.71 884.3,672.83 894.8,674.38 897.4,699.87 901,689.89 904.5,682.86 908,686.01 911.5,695.29 914.9,698.14 918.8,697.37 924.6,697.78 932,696.49 935.9,697.45 939,695.35 946,695.16 949.6,694.12 953,696.07 956.9,693.48 960,694.54 963.5,692.96 967,695.08 974,694.78 977.5,695.04 980.9,685.17 984.5,690.04 998,690.66 1001.6,692.05 1005,689.35 1012.8,693.21 1019,689.3" stroke="#7f302f"/><polyline points="1015.9,732.2 1019,690.07 1023.1,689.95 1026.2,687.81 1029.6,688.16 1032.9,686.22 1036.8,698.99 1040.2,693.89 1043.6,690.95 1047.2,676.93 1050.7,674.21 1053.4,685.95" stroke="#cd8a55"/><polyline points="1050.7,732.2 1053.9,685.95 1057.3,674.07 1060.7,674.16 1064.3,684.58 1067.8,698.9 1071.2,684.22 1074.7,679.74 1078.2,693.58 1081.6,695.95 1085.2,698.13 1088.6,696.97 1092.2,696.61 1095.6,704.57 1099.2,694.45 1102.3,692.85 1105.9,696.18 1112.9,686.94 1116.3,694.35 1120.2,691.88 1123.3,693.65 1127.1,695.14 1130.2,694.99" stroke="#a9a262"/><polyline points="1126.8,732.2 1130.2,695.76 1133.7,701.5 1137.2,692.74 1140.8,691.09 1143.9,691.25" stroke="#a43b4b"/><polyline points="1140.8,732.2 1144.2,698.12 1147.6,701.2 1151.2,707.75" stroke="#5e2a22"/><polyline points="1147.6,732.2 1151.2,691.21 1154.8,693.57 1157.9,694.23" stroke="#e08080"/><polyline points="1154.8,732.2 1158.2,693.32 1161.6,686.23 1165.2,688.75 1168.6,698.46 1170.6,698.77" stroke="#6f6d22"/><polyline points="1168.8,732.2 1172.2,688.12 1175.3,701.91 1178.9,708.01 1182.3,701.98 1189.3,689.45 1192.7,695.74" stroke="#c472a4"/><polyline points="1189.3,732.2 1192.7,690.18 1196.2,691.87 1199.8,697.47 1203.2,688.63 1206.8,689.92 1210.2,684.97 1213.6,686.88 1217.2,687.72 1220.6,690.15 1224.2,700.3 1231.2,683.45 1234.8,696.07 1238.2,683.14 1241.3,683.42 1245.2,687.12 1248.6,689.03 1252.1,692.4 1255.7,697.22 1259.1,694.86 1265.8,694.76 1269.2,695.51 1272.8,694.1 1279.6,699.64 1283.2,698.44 1286.8,698.7 1293.6,693.51 1296.9,690.01 1300.3,693.15 1304.2,694.82 1307.3,693.82 1311.1,695.47 1314.6,701.62 1317.8,706.61" stroke="#807c2e"/><polyline points="1314.6,732.2 1317.8,691.87 1321.2,695.1 1324.7,700.54" stroke="#5b94e3"/><polyline points="1325.1,732.2 1328.2,693.68 1330.1,696.68" stroke="#8b2b6b"/><polyline points="1328.2,732.2 1331.8,695.15 1335.2,697.3 1338.8,697.5 1342.2,684.2 1345.6,692.19 1348.9,687.44 1352.3,690.07" stroke="#3c9373"/><polyline points="1349.2,732.2 1352.6,697.63 1356.2,697.4 1359.8,693.15 1363.2,691.8 1366.3,693.76" stroke="#2a66d0"/><polyline points="1363.2,732.2 1366.6,697.2 1369.8,692.25 1373.6,693.5 1377.1,692.08 1380.7,694.5 1384.1,700.82 1387.2,704.09" stroke="#d2833f"/><polyline points="1384.1,732.2 1387.2,683.46 1390.8,689.79 1394.2,691.82 1397.6,696.95 1401.2,695.69 1404.8,687.49 1408.2,688.52 1411.8,692.88" stroke="#a382c9"/></g><path d="M245 224.8H1390" stroke="#9b6fc0" stroke-width="1.800"/><path d="M245 478.3H1384.500" stroke="#9b6fc0" stroke-width="1.800"/><path d="M245 605.1H1384.500" stroke="#9b6fc0" stroke-width="1.800"/><path d="M245 732H1384.500" stroke="#9b6fc0" stroke-width="1.800"/><rect x="1433.8" y="289.9" width="8.200" height="8" fill="#2f4b7c"/><rect x="1433.8" y="300.4" width="8.200" height="8" fill="#2e4fa3"/><rect x="1433.8" y="310.9" width="8.200" height="8" fill="#2f6cc0"/><rect x="1433.8" y="321.4" width="8.200" height="8" fill="#4f9bb8"/><rect x="1433.8" y="331.9" width="8.200" height="8" fill="#90cdb6"/><text x="1431.4" y="294.2" text-anchor="end" font-size="8.600" fill="#222">2400000</text><text x="1431.4" y="318.5" text-anchor="end" font-size="8.600" fill="#222">1200000</text><text x="1431.4" y="342.6" text-anchor="end" font-size="8.600" fill="#222">1</text></svg><span class="t" style="left:249.5px;top:795.6px;font-size:12.6px;line-height:16px;color:#4b515d;letter-spacing:0.1px;">global.build_id</span><svg style="position:absolute;left:338.1px;top:801.3px;" width="9" height="5.5" viewBox="0 0 9 5.5"><path d="M0 0h8.600L4.300 5z" fill="#3a3f4a"/></svg><span class="t" style="left:424.6px;top:795.6px;font-size:12.6px;line-height:16px;color:#4b515d;letter-spacing:-0.95px;">COUNT</span><svg style="position:absolute;left:472.1px;top:797.6px;" width="8" height="12" viewBox="0 0 8 12"><path d="M0 4.600 4 0l4 4.600zM0 7.400h8L4 12z" fill="#b0b5bf"/></svg><span class="t" style="left:597.9px;top:795.6px;font-size:12.6px;line-height:16px;color:#4b515d;letter-spacing:-0.06px;">HEATMAP(Log_Duration)</span><svg style="position:absolute;left:747.2px;top:797.6px;" width="8" height="12" viewBox="0 0 8 12"><path d="M0 4.600 4 0l4 4.600zM0 7.400h8L4 12z" fill="#b0b5bf"/></svg><span class="t" style="left:858.5px;top:795.6px;font-size:12.6px;line-height:16px;color:#4b515d;letter-spacing:0.07px;">P99(duration_ms)</span><svg style="position:absolute;left:966.2px;top:797.6px;" width="8" height="12" viewBox="0 0 8 12"><path d="M0 4.600 4 0l4 4.600zM0 7.400h8L4 12z" fill="#b0b5bf"/></svg><span class="t" style="left:1060.5px;top:795.6px;font-size:12.6px;line-height:16px;color:#4b515d;letter-spacing:0.07px;">P50(duration_ms)</span><svg style="position:absolute;left:1168.2px;top:797.6px;" width="8" height="12" viewBox="0 0 8 12"><path d="M0 4.600 4 0l4 4.600zM0 7.400h8L4 12z" fill="#b0b5bf"/></svg><span class="t" style="left:1262.6px;top:795.6px;font-size:12.6px;line-height:16px;color:#4b515d;letter-spacing:-0.02px;">AVG(duration_ms)</span><svg style="position:absolute;left:1372.2px;top:797.6px;" width="8" height="12" viewBox="0 0 8 12"><path d="M0 4.600 4 0l4 4.600zM0 7.400h8L4 12z" fill="#b0b5bf"/></svg><div style="position:absolute;left:192.3px;top:817px;width:1262.7px;height:1.4px;background:#7c8291;"></div><div style="position:absolute;left:192.3px;top:818.2px;width:1262.7px;height:33.85px;background:#f5f6fa;"></div><div style="position:absolute;left:204.9px;top:824.4px;width:19px;height:19px;background:#9e84c0;border-radius:3.500px;"></div><span class="t" style="left:249.5px;top:825.9px;font-size:13.3px;line-height:17px;color:#343a44;font-family:'Liberation Mono', monospace;letter-spacing:-0.63px;-webkit-text-stroke:0.12px #343a44;">659,373</span><span class="t" style="left:424.6px;top:825.9px;font-size:13.3px;line-height:17px;color:#343a44;font-family:'Liberation Mono', monospace;letter-spacing:-0.58px;-webkit-text-stroke:0.12px #343a44;">8,974,290</span><span class="t" style="left:858.5px;top:825.9px;font-size:13.3px;line-height:17px;color:#343a44;font-family:'Liberation Mono', monospace;letter-spacing:-0.55px;-webkit-text-stroke:0.12px #343a44;">3,570.60737</span><span class="t" style="left:1060.5px;top:825.9px;font-size:13.3px;line-height:17px;color:#343a44;font-family:'Liberation Mono', monospace;letter-spacing:-0.55px;-webkit-text-stroke:0.12px #343a44;">1,532.71732</span><span class="t" style="left:1262.6px;top:825.9px;font-size:13.3px;line-height:17px;color:#343a44;font-family:'Liberation Mono', monospace;letter-spacing:-0.57px;-webkit-text-stroke:0.12px #343a44;">1,588.2511</span><svg style="position:absolute;left:597.9px;top:823.9px;" width="97" height="23" viewBox="0 0 97 23"><polyline points="0,21.5 20,21.1 26,20.5 30,18.5 34,13.5 36,5.5 38.5,1.5 41,9.5 43,18.5 47,20.5 60,20.9 75,21.1 77,20.3 79,21.1 84,20.5 86,21.2 95.6,21.2" fill="none" stroke="#9e84c0" stroke-width="1.500" stroke-linejoin="round"/></svg><div style="position:absolute;left:204.9px;top:858.25px;width:19px;height:19px;background:#c5824e;border-radius:3.500px;"></div><span class="t" style="left:249.5px;top:859.75px;font-size:13.3px;line-height:17px;color:#343a44;font-family:'Liberation Mono', monospace;letter-spacing:-0.63px;-webkit-text-stroke:0.12px #343a44;">659,026</span><span class="t" style="left:424.6px;top:859.75px;font-size:13.3px;line-height:17px;color:#343a44;font-family:'Liberation Mono', monospace;letter-spacing:-0.58px;-webkit-text-stroke:0.12px #343a44;">1,477,994</span><span class="t" style="left:858.5px;top:859.75px;font-size:13.3px;line-height:17px;color:#343a44;font-family:'Liberation Mono', monospace;letter-spacing:-0.57px;-webkit-text-stroke:0.12px #343a44;">5,239.1299</span><span class="t" style="left:1060.5px;top:859.75px;font-size:13.3px;line-height:17px;color:#343a44;font-family:'Liberation Mono', monospace;letter-spacing:-0.55px;-webkit-text-stroke:0.12px #343a44;">1,327.93281</span><span class="t" style="left:1262.6px;top:859.75px;font-size:13.3px;line-height:17px;color:#343a44;font-family:'Liberation Mono', monospace;letter-spacing:-0.55px;-webkit-text-stroke:0.12px #343a44;">1,493.13722</span><svg style="position:absolute;left:597.9px;top:857.75px;" width="97" height="23" viewBox="0 0 97 23"><polyline points="0,21.5 18,21 24,20 28,15.5 32,8.5 36,2.5 39.5,1.5 42,13.5 45,19 47,17.5 49,20 60,20.7 95.6,21" fill="none" stroke="#c5824e" stroke-width="1.500" stroke-linejoin="round"/></svg><div style="position:absolute;left:192.3px;top:885.9px;width:1262.7px;height:33.85px;background:#f5f6fa;"></div><div style="position:absolute;left:204.9px;top:892.1px;width:19px;height:19px;background:#2c5dc1;border-radius:3.500px;"></div><span class="t" style="left:249.5px;top:893.6px;font-size:13.3px;line-height:17px;color:#343a44;font-family:'Liberation Mono', monospace;letter-spacing:-0.63px;-webkit-text-stroke:0.12px #343a44;">658,488</span><span class="t" style="left:424.6px;top:893.6px;font-size:13.3px;line-height:17px;color:#343a44;font-family:'Liberation Mono', monospace;letter-spacing:-0.63px;-webkit-text-stroke:0.12px #343a44;">925,610</span><span class="t" style="left:858.5px;top:893.6px;font-size:13.3px;line-height:17px;color:#343a44;font-family:'Liberation Mono', monospace;letter-spacing:-0.55px;-webkit-text-stroke:0.12px #343a44;">5,301.29827</span><span class="t" style="left:1060.5px;top:893.6px;font-size:13.3px;line-height:17px;color:#343a44;font-family:'Liberation Mono', monospace;letter-spacing:-0.55px;-webkit-text-stroke:0.12px #343a44;">1,339.20098</span><span class="t" style="left:1262.6px;top:893.6px;font-size:13.3px;line-height:17px;color:#343a44;font-family:'Liberation Mono', monospace;letter-spacing:-0.55px;-webkit-text-stroke:0.12px #343a44;">1,479.70059</span><svg style="position:absolute;left:597.9px;top:891.6px;" width="97" height="23" viewBox="0 0 97 23"><polyline points="0,21.5 14,20.7 22,19.5 27,16.5 30,12.5 32,9.5 35,2 39.5,2 42,13.5 44,19 50,20.3 60,20.9 95.6,21.2" fill="none" stroke="#2c5dc1" stroke-width="1.500" stroke-linejoin="round"/></svg><div style="position:absolute;left:204.9px;top:925.95px;width:19px;height:19px;background:#479078;border-radius:3.500px;"></div><span class="t" style="left:249.5px;top:927.45px;font-size:13.3px;line-height:17px;color:#343a44;font-family:'Liberation Mono', monospace;letter-spacing:-0.63px;-webkit-text-stroke:0.12px #343a44;">657,806</span><span class="t" style="left:424.6px;top:927.45px;font-size:13.3px;line-height:17px;color:#343a44;font-family:'Liberation Mono', monospace;letter-spacing:-0.58px;-webkit-text-stroke:0.12px #343a44;">6,978,465</span><span class="t" style="left:858.5px;top:927.45px;font-size:13.3px;line-height:17px;color:#343a44;font-family:'Liberation Mono', monospace;letter-spacing:-0.55px;-webkit-text-stroke:0.12px #343a44;">5,196.40225</span><span class="t" style="left:1060.5px;top:927.45px;font-size:13.3px;line-height:17px;color:#343a44;font-family:'Liberation Mono', monospace;letter-spacing:-0.55px;-webkit-text-stroke:0.12px #343a44;">1,463.56541</span><span class="t" style="left:1262.6px;top:927.45px;font-size:13.3px;line-height:17px;color:#343a44;font-family:'Liberation Mono', monospace;letter-spacing:-0.55px;-webkit-text-stroke:0.12px #343a44;">1,593.96358</span><svg style="position:absolute;left:597.9px;top:925.45px;" width="97" height="23" viewBox="0 0 97 23"><polyline points="0,21.5 18,21.2 24,20 28,16.5 32,10.5 35,4.5 38,1.5 40.5,7.5 43,17.5 46,20.3 60,20.8 75,21.1 77,20.2 79,21.1 95.6,21.2" fill="none" stroke="#479078" stroke-width="1.500" stroke-linejoin="round"/></svg><div style="position:absolute;left:192.3px;top:953.6px;width:1262.7px;height:33.85px;background:#f5f6fa;"></div><div style="position:absolute;left:204.9px;top:959.8px;width:19px;height:19px;background:#7d3568;border-radius:3.500px;"></div><span class="t" style="left:249.5px;top:961.3px;font-size:13.3px;line-height:17px;color:#343a44;font-family:'Liberation Mono', monospace;letter-spacing:-0.63px;-webkit-text-stroke:0.12px #343a44;">657,776</span><span class="t" style="left:424.6px;top:961.3px;font-size:13.3px;line-height:17px;color:#343a44;font-family:'Liberation Mono', monospace;letter-spacing:-0.58px;-webkit-text-stroke:0.12px #343a44;">1,740,843</span><span class="t" style="left:858.5px;top:961.3px;font-size:13.3px;line-height:17px;color:#343a44;font-family:'Liberation Mono', monospace;letter-spacing:-0.55px;-webkit-text-stroke:0.12px #343a44;">4,196.94007</span><span class="t" style="left:1060.5px;top:961.3px;font-size:13.3px;line-height:17px;color:#343a44;font-family:'Liberation Mono', monospace;letter-spacing:-0.55px;-webkit-text-stroke:0.12px #343a44;">1,366.96058</span><span class="t" style="left:1262.6px;top:961.3px;font-size:13.3px;line-height:17px;color:#343a44;font-family:'Liberation Mono', monospace;letter-spacing:-0.55px;-webkit-text-stroke:0.12px #343a44;">1,467.25118</span><svg style="position:absolute;left:597.9px;top:959.3px;" width="97" height="23" viewBox="0 0 97 23"><polyline points="0,21.5 18,20.7 24,19.5 28,17.5 31,12.5 33.5,2.5 36,0.5 39,9.5 41.5,17.5 45,19.7 60,20.8 75,21 77,20 79,21 95.6,21.2" fill="none" stroke="#7d3568" stroke-width="1.500" stroke-linejoin="round"/></svg><div style="position:absolute;left:204.9px;top:993.65px;width:19px;height:19px;background:#5f90d9;border-radius:3.500px;"></div><span class="t" style="left:249.5px;top:995.15px;font-size:13.3px;line-height:17px;color:#343a44;font-family:'Liberation Mono', monospace;letter-spacing:-0.63px;-webkit-text-stroke:0.12px #343a44;">657,532</span><span class="t" style="left:424.6px;top:995.15px;font-size:13.3px;line-height:17px;color:#343a44;font-family:'Liberation Mono', monospace;letter-spacing:-0.58px;-webkit-text-stroke:0.12px #343a44;">4,055,010</span><span class="t" style="left:858.5px;top:995.15px;font-size:13.3px;line-height:17px;color:#343a44;font-family:'Liberation Mono', monospace;letter-spacing:-0.55px;-webkit-text-stroke:0.12px #343a44;">5,122.50785</span><span class="t" style="left:1060.5px;top:995.15px;font-size:13.3px;line-height:17px;color:#343a44;font-family:'Liberation Mono', monospace;letter-spacing:-0.55px;-webkit-text-stroke:0.12px #343a44;">1,295.42128</span><span class="t" style="left:1262.6px;top:995.15px;font-size:13.3px;line-height:17px;color:#343a44;font-family:'Liberation Mono', monospace;letter-spacing:-0.55px;-webkit-text-stroke:0.12px #343a44;">1,448.67645</span><svg style="position:absolute;left:597.9px;top:993.15px;" width="97" height="23" viewBox="0 0 97 23"><polyline points="0,21.5 14,20.9 20,20 25,15.5 28,10.5 31,6.5 33,7 35,2.5 39.5,2 42,14.5 45,19.5 60,20.7 80,21 95.6,20.5" fill="none" stroke="#5f90d9" stroke-width="1.500" stroke-linejoin="round"/></svg><div style="position:absolute;left:192.3px;top:1021.3px;width:1262.7px;height:33.85px;background:#f5f6fa;"></div><div style="position:absolute;left:204.9px;top:1027.5px;width:19px;height:19px;background:#827a38;border-radius:3.500px;"></div><span class="t" style="left:249.5px;top:1029px;font-size:13.3px;line-height:17px;color:#343a44;font-family:'Liberation Mono', monospace;letter-spacing:-0.63px;-webkit-text-stroke:0.12px #343a44;">656,893</span><span class="t" style="left:424.6px;top:1029px;font-size:13.3px;line-height:17px;color:#343a44;font-family:'Liberation Mono', monospace;letter-spacing:-0.57px;-webkit-text-stroke:0.12px #343a44;">41,066,569</span><span class="t" style="left:858.5px;top:1029px;font-size:13.3px;line-height:17px;color:#343a44;font-family:'Liberation Mono', monospace;letter-spacing:-0.55px;-webkit-text-stroke:0.12px #343a44;">4,420.45174</span><span class="t" style="left:1060.5px;top:1029px;font-size:13.3px;line-height:17px;color:#343a44;font-family:'Liberation Mono', monospace;letter-spacing:-0.55px;-webkit-text-stroke:0.12px #343a44;">1,401.45776</span><span class="t" style="left:1262.6px;top:1029px;font-size:13.3px;line-height:17px;color:#343a44;font-family:'Liberation Mono', monospace;letter-spacing:-0.55px;-webkit-text-stroke:0.12px #343a44;">1,518.92127</span><svg style="position:absolute;left:597.9px;top:1027px;" width="97" height="23" viewBox="0 0 97 23"><polyline points="0,21.5 18,21 24,19.5 28,14.5 32,7.5 36,1.5 38.5,0.5 41,9.5 44,18.5 48,20.5 60,21 95.6,21.2" fill="none" stroke="#827a38" stroke-width="1.500" stroke-linejoin="round"/></svg><div style="position:absolute;left:204.9px;top:1061.35px;width:19px;height:19px;background:#b5719b;border-radius:3.500px;"></div><span class="t" style="left:249.5px;top:1062.85px;font-size:13.3px;line-height:17px;color:#343a44;font-family:'Liberation Mono', monospace;letter-spacing:-0.63px;-webkit-text-stroke:0.12px #343a44;">656,330</span><span class="t" style="left:424.6px;top:1062.85px;font-size:13.3px;line-height:17px;color:#343a44;font-family:'Liberation Mono', monospace;letter-spacing:-0.58px;-webkit-text-stroke:0.12px #343a44;">5,576,736</span><span class="t" style="left:858.5px;top:1062.85px;font-size:13.3px;line-height:17px;color:#343a44;font-family:'Liberation Mono', monospace;letter-spacing:-0.55px;-webkit-text-stroke:0.12px #343a44;">5,740.68049</span><span class="t" style="left:1060.5px;top:1062.85px;font-size:13.3px;line-height:17px;color:#343a44;font-family:'Liberation Mono', monospace;letter-spacing:-0.55px;-webkit-text-stroke:0.12px #343a44;">1,083.19814</span><span class="t" style="left:1262.6px;top:1062.85px;font-size:13.3px;line-height:17px;color:#343a44;font-family:'Liberation Mono', monospace;letter-spacing:-0.55px;-webkit-text-stroke:0.12px #343a44;">1,368.54742</span><svg style="position:absolute;left:597.9px;top:1060.85px;" width="97" height="23" viewBox="0 0 97 23"><polyline points="0,21.5 18,21 24,19.5 28,14.5 32,7.5 36,1.5 38.5,0.5 41,9.5 44,18.5 48,20.5 60,21 95.6,21.2" fill="none" stroke="#b5719b" stroke-width="1.500" stroke-linejoin="round"/></svg><div style="position:absolute;left:1455px;top:770px;width:9px;height:304px;background:linear-gradient(90deg,rgba(60,64,80,.10),rgba(60,64,80,0));"></div><div style="position:absolute;left:1482px;top:1px;width:411.8px;height:1071.6px;background:#f5f7fb;border-radius:0 1.500px 5px 0;"></div><span class="t" style="left:1503px;top:32.8px;font-size:17px;line-height:22px;color:#2b3340;letter-spacing:-0.04px;-webkit-text-stroke:0.25px #2b3340;">Details</span><span class="t" style="left:1581px;top:32.8px;font-size:17px;line-height:22px;color:#4a5160;letter-spacing:0.06px;">My history</span><span class="t" style="left:1685.6px;top:32.8px;font-size:17px;line-height:22px;color:#4a5160;letter-spacing:0.15px;">Team activity</span><div style="position:absolute;left:1490px;top:65.7px;width:387.6px;height:1.3px;background:#e6e9f0;"></div><div style="position:absolute;left:1490px;top:64.6px;width:78px;height:3px;background:#3a85d9;"></div><span class="t" style="left:1507.5px;top:74.5px;font-size:25.4px;line-height:33px;color:#2b3340;letter-spacing:0.12px;-webkit-text-stroke:0.55px #2b3340;">retriever-traces</span><span class="t" style="left:1507.5px;top:123.5px;font-size:14.7px;line-height:19px;color:#444a55;letter-spacing:-0.03px;">trace-level data of the retriever read path <i>and more</i>.</span><span class="t" style="left:1507.5px;top:143.1px;font-size:14.7px;line-height:19px;color:#444a55;letter-spacing:0.1px;">traces from basset and poodle</span><span class="t" style="left:1507.5px;top:180.5px;font-size:14.7px;line-height:19px;color:#39404c;font-weight:700;letter-spacing:-0.49px;">Data Last Received</span><span class="t" style="left:1507.5px;top:201.5px;font-size:14.7px;line-height:19px;color:#444a55;letter-spacing:0.02px;">less than 10 min ago</span><span class="t" style="left:1507.5px;top:245.8px;font-size:14.7px;line-height:19px;color:#2f74c7;letter-spacing:-0.04px;">Go to Dataset Settings</span><span class="t" style="left:1507.5px;top:290.5px;font-size:14.7px;line-height:19px;color:#2b3340;font-weight:700;letter-spacing:-0.73px;">SCHEMA</span><div style="position:absolute;left:1499px;top:319px;width:369.6px;height:37.6px;background:#fff;border:1.300px solid #d5dae6;border-radius:4px;box-sizing:border-box;"></div><span class="t" style="left:1508.6px;top:329px;font-size:14.7px;line-height:19px;color:#6b7280;letter-spacing:-0.01px;">Filter schema</span><svg style="position:absolute;left:1502.4px;top:382.6px;" width="5" height="8" viewBox="0 0 5 8"><path d="M0 0 4.600 4 0 8z" fill="#3a3f4a"/></svg><div style="position:absolute;left:1515.7px;top:380px;width:28.4px;height:13.2px;border:1px solid #5a5f6a;border-radius:3px;box-sizing:border-box;"></div><span class="t" style="left:1523.65px;top:380.2px;font-size:10.4px;line-height:14px;color:#555b66;letter-spacing:0.76px;">int</span><span class="t" style="left:1551.4px;top:377.6px;font-size:14.7px;line-height:19px;color:#3a404b;letter-spacing:0.02px;">app.bucket_count</span><svg style="position:absolute;left:1502.4px;top:424.9px;" width="5" height="8" viewBox="0 0 5 8"><path d="M0 0 4.600 4 0 8z" fill="#3a3f4a"/></svg><div style="position:absolute;left:1515.7px;top:422.3px;width:28.4px;height:13.2px;border:1px solid #5a5f6a;border-radius:3px;box-sizing:border-box;"></div><span class="t" style="left:1524.65px;top:422.5px;font-size:10.4px;line-height:14px;color:#555b66;letter-spacing:1.2px;">flt</span><span class="t" style="left:1551.4px;top:419.9px;font-size:14.7px;line-height:19px;color:#3a404b;letter-spacing:-0.12px;">app.bundle_file_size</span><svg style="position:absolute;left:1502.4px;top:467.2px;" width="5" height="8" viewBox="0 0 5 8"><path d="M0 0 4.600 4 0 8z" fill="#3a3f4a"/></svg><div style="position:absolute;left:1515.7px;top:464.6px;width:28.4px;height:13.2px;border:1px solid #5a5f6a;border-radius:3px;box-sizing:border-box;"></div><span class="t" style="left:1523.4px;top:464.8px;font-size:10.4px;line-height:14px;color:#555b66;letter-spacing:0.73px;">str</span><span class="t" style="left:1551.4px;top:462.2px;font-size:14.7px;line-height:19px;color:#3a404b;letter-spacing:-0.08px;">app.cache.key</span><svg style="position:absolute;left:1502.4px;top:509.5px;" width="5" height="8" viewBox="0 0 5 8"><path d="M0 0 4.600 4 0 8z" fill="#3a3f4a"/></svg><div style="position:absolute;left:1515.7px;top:506.9px;width:28.4px;height:13.2px;border:1px solid #5a5f6a;border-radius:3px;box-sizing:border-box;"></div><span class="t" style="left:1519.15px;top:507.1px;font-size:10.4px;line-height:14px;color:#555b66;letter-spacing:0.61px;">bool</span><span class="t" style="left:1551.4px;top:504.5px;font-size:14.7px;line-height:19px;color:#3a404b;letter-spacing:0.1px;">app.cold</span><svg style="position:absolute;left:1502.4px;top:551.8px;" width="5" height="8" viewBox="0 0 5 8"><path d="M0 0 4.600 4 0 8z" fill="#3a3f4a"/></svg><div style="position:absolute;left:1515.7px;top:549.2px;width:28.4px;height:13.2px;border:1px solid #5a5f6a;border-radius:3px;box-sizing:border-box;"></div><span class="t" style="left:1523.65px;top:549.4px;font-size:10.4px;line-height:14px;color:#555b66;letter-spacing:0.76px;">int</span><span class="t" style="left:1551.4px;top:546.8px;font-size:14.7px;line-height:19px;color:#3a404b;letter-spacing:0.03px;">app.cold_segments</span><svg style="position:absolute;left:1502.4px;top:594.1px;" width="5" height="8" viewBox="0 0 5 8"><path d="M0 0 4.600 4 0 8z" fill="#3a3f4a"/></svg><div style="position:absolute;left:1515.7px;top:591.5px;width:28.4px;height:13.2px;border:1px solid #5a5f6a;border-radius:3px;box-sizing:border-box;"></div><span class="t" style="left:1524.65px;top:591.7px;font-size:10.4px;line-height:14px;color:#555b66;letter-spacing:1.2px;">flt</span><span class="t" style="left:1551.4px;top:589.1px;font-size:14.7px;line-height:19px;color:#3a404b;letter-spacing:0.02px;">app.columns_compact_open_ms</span><svg style="position:absolute;left:1502.4px;top:636.4px;" width="5" height="8" viewBox="0 0 5 8"><path d="M0 0 4.600 4 0 8z" fill="#3a3f4a"/></svg><div style="position:absolute;left:1515.7px;top:633.8px;width:28.4px;height:13.2px;border:1px solid #5a5f6a;border-radius:3px;box-sizing:border-box;"></div><span class="t" style="left:1524.65px;top:634px;font-size:10.4px;line-height:14px;color:#555b66;letter-spacing:1.2px;">flt</span><span class="t" style="left:1551.4px;top:631.4px;font-size:14.7px;line-height:19px;color:#3a404b;letter-spacing:-0.01px;">app.columns_dict_open_ms</span><svg style="position:absolute;left:1502.4px;top:678.7px;" width="5" height="8" viewBox="0 0 5 8"><path d="M0 0 4.600 4 0 8z" fill="#3a3f4a"/></svg><div style="position:absolute;left:1515.7px;top:676.1px;width:28.4px;height:13.2px;border:1px solid #5a5f6a;border-radius:3px;box-sizing:border-box;"></div><span class="t" style="left:1524.65px;top:676.3px;font-size:10.4px;line-height:14px;color:#555b66;letter-spacing:1.2px;">flt</span><span class="t" style="left:1551.4px;top:673.7px;font-size:14.7px;line-height:19px;color:#3a404b;letter-spacing:-0.04px;">app.columns_open_ms</span><svg style="position:absolute;left:1502.4px;top:721px;" width="5" height="8" viewBox="0 0 5 8"><path d="M0 0 4.600 4 0 8z" fill="#3a3f4a"/></svg><div style="position:absolute;left:1515.7px;top:718.4px;width:28.4px;height:13.2px;border:1px solid #5a5f6a;border-radius:3px;box-sizing:border-box;"></div><span class="t" style="left:1523.65px;top:718.6px;font-size:10.4px;line-height:14px;color:#555b66;letter-spacing:0.76px;">int</span><span class="t" style="left:1551.4px;top:716px;font-size:14.7px;line-height:19px;color:#3a404b;letter-spacing:-0.09px;">app.concurrency_queue_depth</span><svg style="position:absolute;left:1502.4px;top:763.3px;" width="5" height="8" viewBox="0 0 5 8"><path d="M0 0 4.600 4 0 8z" fill="#3a3f4a"/></svg><div style="position:absolute;left:1515.7px;top:760.7px;width:28.4px;height:13.2px;border:1px solid #5a5f6a;border-radius:3px;box-sizing:border-box;"></div><span class="t" style="left:1523.65px;top:760.9px;font-size:10.4px;line-height:14px;color:#555b66;letter-spacing:0.76px;">int</span><span class="t" style="left:1551.4px;top:758.3px;font-size:14.7px;line-height:19px;color:#3a404b;letter-spacing:-0.12px;">app.concurrency_queue_size</span><svg style="position:absolute;left:1502.4px;top:805.6px;" width="5" height="8" viewBox="0 0 5 8"><path d="M0 0 4.600 4 0 8z" fill="#3a3f4a"/></svg><div style="position:absolute;left:1515.7px;top:803px;width:28.4px;height:13.2px;border:1px solid #5a5f6a;border-radius:3px;box-sizing:border-box;"></div><span class="t" style="left:1524.65px;top:803.2px;font-size:10.4px;line-height:14px;color:#555b66;letter-spacing:1.2px;">flt</span><span class="t" style="left:1551.4px;top:800.6px;font-size:14.7px;line-height:19px;color:#3a404b;letter-spacing:-0.03px;">app.cumulative_file_size</span><svg style="position:absolute;left:1502.4px;top:847.9px;" width="5" height="8" viewBox="0 0 5 8"><path d="M0 0 4.600 4 0 8z" fill="#3a3f4a"/></svg><div style="position:absolute;left:1515.7px;top:845.3px;width:28.4px;height:13.2px;border:1px solid #5a5f6a;border-radius:3px;box-sizing:border-box;"></div><span class="t" style="left:1523.65px;top:845.5px;font-size:10.4px;line-height:14px;color:#555b66;letter-spacing:0.76px;">int</span><span class="t" style="left:1551.4px;top:842.9px;font-size:14.7px;line-height:19px;color:#3a404b;letter-spacing:0.04px;">app.dataset_count</span><svg style="position:absolute;left:1502.4px;top:890.2px;" width="5" height="8" viewBox="0 0 5 8"><path d="M0 0 4.600 4 0 8z" fill="#3a3f4a"/></svg><div style="position:absolute;left:1515.7px;top:887.6px;width:28.4px;height:13.2px;border:1px solid #5a5f6a;border-radius:3px;box-sizing:border-box;"></div><span class="t" style="left:1523.65px;top:887.8px;font-size:10.4px;line-height:14px;color:#555b66;letter-spacing:0.76px;">int</span><span class="t" style="left:1551.4px;top:885.2px;font-size:14.7px;line-height:19px;color:#3a404b;letter-spacing:-0.03px;">app.dataset_id</span><svg style="position:absolute;left:1502.4px;top:932.5px;" width="5" height="8" viewBox="0 0 5 8"><path d="M0 0 4.600 4 0 8z" fill="#3a3f4a"/></svg><div style="position:absolute;left:1515.7px;top:929.9px;width:28.4px;height:13.2px;border:1px solid #5a5f6a;border-radius:3px;box-sizing:border-box;"></div><span class="t" style="left:1523.4px;top:930.1px;font-size:10.4px;line-height:14px;color:#555b66;letter-spacing:0.73px;">str</span><span class="t" style="left:1551.4px;top:927.5px;font-size:14.7px;line-height:19px;color:#3a404b;">app.dataset_path</span><svg style="position:absolute;left:1502.4px;top:974.8px;" width="5" height="8" viewBox="0 0 5 8"><path d="M0 0 4.600 4 0 8z" fill="#3a3f4a"/></svg><div style="position:absolute;left:1515.7px;top:972.2px;width:28.4px;height:13.2px;border:1px solid #5a5f6a;border-radius:3px;box-sizing:border-box;"></div><span class="t" style="left:1523.65px;top:972.4px;font-size:10.4px;line-height:14px;color:#555b66;letter-spacing:0.76px;">int</span><span class="t" style="left:1551.4px;top:969.8px;font-size:14.7px;line-height:19px;color:#3a404b;letter-spacing:-0.04px;">app.dataset_version</span><svg style="position:absolute;left:1502.4px;top:1017.1px;" width="5" height="8" viewBox="0 0 5 8"><path d="M0 0 4.600 4 0 8z" fill="#3a3f4a"/></svg><div style="position:absolute;left:1515.7px;top:1014.5px;width:28.4px;height:13.2px;border:1px solid #5a5f6a;border-radius:3px;box-sizing:border-box;"></div><span class="t" style="left:1524.65px;top:1014.7px;font-size:10.4px;line-height:14px;color:#555b66;letter-spacing:1.2px;">flt</span><span class="t" style="left:1551.4px;top:1012.1px;font-size:14.7px;line-height:19px;color:#3a404b;letter-spacing:-0.19px;">app.derived_cache_hit_rate_avg</span><div style="position:absolute;left:1499px;top:1034.8px;width:378.6px;height:1.2px;background:#3a3f4a;"></div><svg style="position:absolute;left:1506.5px;top:1046px;" width="23" height="18" viewBox="0 0 23 18"><path d="M.5 9h16M10.500 3l6 6-6 6M21 .5v17" fill="none" stroke="#2f3540" stroke-width="1.500"/></svg><div style="position:absolute;left:0;top:0;width:1894.800px;height:1074px;box-sizing:border-box;border:1.400px solid #e0e5ef;border-radius:2.500px 2.500px 6.500px 6.500px;pointer-events:none;"></div></section><section class="panel" style="left:1946px"><div style="position:absolute;left:-.600px;top:0"><div style="position:absolute;left:1px;top:1px;width:164px;height:1071.6px;background:#252e3b;border-radius:1.500px 0 0 6px;"></div><svg style="position:absolute;left:0px;top:0px;" width="44" height="44" viewBox="0 0 44 44"><path d="M27.100 18 29.900 12.800h5.600L38.200 18l-2.700 5.300h-5.600z" fill="#4a96e4"/><path d="M26.500 18.200h3.600v1.600h-3z" fill="#252e3b"/><circle cx="16.400" cy="28.700" r="3.400" fill="#c98848"/><path d="M21 21l4.200 1 2.800 8 2.600 6.500H13.500L18 30z" fill="#d9d3b2"/><ellipse cx="23.500" cy="23" rx="4.200" ry="3" fill="#86a043"/><ellipse cx="22.300" cy="26" rx="2" ry="2.200" fill="#9097a0"/><circle cx="21.800" cy="29.600" r="1.300" fill="#10131a"/><path d="M24.500 24l2 6 .5 6h-3z" fill="#eee9cf"/><circle cx="21" cy="33.300" r="1.300" fill="#dc8a3c"/><path d="M14 34.500l3-2 1.500 4H13.200z" fill="#c9c9c9"/><path d="M30.800 29.200 37.800 28.600 36 32.200 31.300 33z" fill="#e3e0b6"/></svg><span class="t" style="left:51px;top:15.8px;font-size:14.8px;line-height:19px;color:#fff;font-weight:700;letter-spacing:-0.7px;">dogfood</span><div style="position:absolute;left:1px;top:50.8px;width:164px;height:50.4px;background:#3a85d9;"></div><span class="t" style="left:13px;top:58.2px;font-size:12px;line-height:16px;color:#fff;letter-spacing:-0.17px;">ENVIRONMENT</span><span class="t" style="left:13px;top:73.1px;font-size:16.6px;line-height:22px;color:#fff;letter-spacing:-0.22px;">Prod</span><svg style="position:absolute;left:149px;top:60.5px;" width="10" height="12" viewBox="0 0 10 12"><path d="M2.500 1.500 7.800 6 2.500 10.500" fill="none" stroke="#fff" stroke-width="1.400" stroke-linecap="round" stroke-linejoin="round"/></svg><svg style="position:absolute;left:13.2px;top:114.9px;" width="24" height="24" viewBox="0 0 24 24"><path fill="none" stroke="#fff" stroke-width="1.7" stroke-linecap="round" stroke-linejoin="round" d="M3.5 10.5 12 3l8.5 7.5V20a1.2 1.2 0 0 1-1.2 1.2H15v-6.4a1 1 0 0 0-1-1h-4a1 1 0 0 0-1 1v6.4H4.7A1.2 1.2 0 0 1 3.500 20z"/></svg><span class="t" style="left:49px;top:116.9px;font-size:16.4px;line-height:21px;color:#fff;letter-spacing:0.22px;">Home</span><div style="position:absolute;left:1px;top:152.1px;width:164px;height:50.7px;background:#5a6270;"></div><svg style="position:absolute;left:13.2px;top:165.6px;" width="24" height="24" viewBox="0 0 24 24"><g fill="none" stroke="#fff" stroke-width="1.7" stroke-linecap="round" stroke-linejoin="round"><circle cx="14.2" cy="8.2" r="5.2"/><path d="M18 12.2 22 16.400M3.5 11v10M8 16.500V21M12.500 17.500V21M17 18.500V21"/></g></svg><span class="t" style="left:49px;top:167.6px;font-size:16.4px;line-height:21px;color:#fff;font-weight:700;letter-spacing:-0.46px;">New Query</span><svg style="position:absolute;left:13.2px;top:216.3px;" width="24" height="24" viewBox="0 0 24 24"><g fill="none" stroke="#fff" stroke-width="1.7" stroke-linecap="round" stroke-linejoin="round"><path d="M12 2.500 21 7.300v9.400L12 21.500 3 16.700V7.300z"/><path d="M3.300 7.500 12 12.200l8.700-4.700M12 12.200v9"/></g></svg><span class="t" style="left:49px;top:218.3px;font-size:16.4px;line-height:21px;color:#fff;letter-spacing:0.23px;">Datasets</span><svg style="position:absolute;left:13.2px;top:267px;" width="24" height="24" viewBox="0 0 24 24"><g fill="none" stroke="#fff" stroke-width="1.7" stroke-linecap="round" stroke-linejoin="round"><rect x="2.500" y="3.500" width="19" height="17" rx="1.200"/><path d="M2.500 11.300h19M14.300 3.500v7.800M9.700 11.300v9.200"/></g></svg><span class="t" style="left:49px;top:269px;font-size:16.4px;line-height:21px;color:#fff;letter-spacing:0.09px;">Boards</span><svg style="position:absolute;left:13.2px;top:317.7px;" width="24" height="24" viewBox="0 0 24 24"><g fill="none" stroke="#fff" stroke-width="1.7" stroke-linecap="round" stroke-linejoin="round"><path d="M4.200 8.200A9 9 0 1 1 3 12.500"/><path d="M2.600 3.800 3.800 8.800 8.800 7.600"/><path d="M12 7v5.400l3.800 2.200"/></g></svg><span class="t" style="left:49px;top:319.7px;font-size:16.4px;line-height:21px;color:#fff;letter-spacing:0.37px;">History</span><svg style="position:absolute;left:13.2px;top:368.4px;" width="24" height="24" viewBox="0 0 24 24"><g fill="none" stroke="#fff" stroke-width="1.7" stroke-linecap="round" stroke-linejoin="round"><path d="M12 2.800c-3.900 0-6.300 2.900-6.300 6.600v4.300L3.600 17.600h16.800l-2.100-3.900V9.400c0-3.700-2.400-6.600-6.300-6.600z"/><path d="M9.300 21h5.400"/></g></svg><span class="t" style="left:49px;top:370.4px;font-size:16.4px;line-height:21px;color:#fff;letter-spacing:0.2px;">Triggers</span><svg style="position:absolute;left:12.75px;top:423.3px;" width="25.4" height="18.2" viewBox="0 0 25.400 18.200"><g fill="none" stroke="#fff" stroke-width="1.7" stroke-linecap="round" stroke-linejoin="round" stroke-width="1.600"><path d="M3.700.8 6.600 1.800 3.400 9 .3 7.100z"/><path d="M21.100 1 18.500 2.600 21.900 8.400 25.100 6.900z"/><path d="M6.600 1.800C9 1.200 11 .9 12.500 1.100L18.500 2.600"/><path d="M13.400 2.400 9.400 6.900c-.5 1.300 1.200 2.600 2.700 2.300l4.300-2.300 2.400 3.600"/><path d="M3.400 9l9.300 5.700c1 .5 2 .5 2.800-.1L21.900 8.400"/><path d="M5.300 14c1.800 1.800 3.700 2.900 5.800 3.400"/></g></svg><span class="t" style="left:49px;top:421.1px;font-size:16.4px;line-height:21px;color:#fff;letter-spacing:-0.93px;">SLOs</span><svg style="position:absolute;left:13.2px;top:469.8px;" width="24" height="24" viewBox="0 0 24 24"><g fill="none" stroke="#fff" stroke-width="1.7" stroke-linecap="round" stroke-linejoin="round"><circle cx="7.200" cy="6.500" r="4"/><circle cx="19.200" cy="11.800" r="2.800"/><circle cx="12.300" cy="19.600" r="3.500"/><path d="M10.900 8.200 16.600 10.700M8.900 10.200 11 16.300"/></g></svg><span class="t" style="left:49px;top:471.8px;font-size:16.4px;line-height:21px;color:#fff;letter-spacing:0.09px;">Service Map</span><svg style="position:absolute;left:13.55px;top:900.85px;" width="23.5" height="23.5" viewBox="0 0 24 24"><g fill="none" stroke="#fff" stroke-width="1.7" stroke-linecap="round" stroke-linejoin="round" stroke-width="1.800"><circle cx="10.500" cy="10.500" r="8"/><path d="M16.300 16.300 22 22"/></g></svg><span class="t" style="left:48.8px;top:902.2px;font-size:16.4px;line-height:21px;color:#fff;letter-spacing:-0.11px;">Search</span><svg style="position:absolute;left:13.3px;top:951px;" width="24" height="24" viewBox="0 0 24 24"><circle cx="12" cy="12" r="8.500" fill="none" stroke="#e0685f" stroke-width="1.900" stroke-dasharray="34.100 19.300" transform="rotate(30 12 12)"/><circle cx="12" cy="12" r="8.500" fill="none" stroke="#9fc05a" stroke-width="1.900" stroke-dasharray="14.800 38.600" transform="rotate(-80 12 12)"/></svg><span class="t" style="left:48.8px;top:952.8px;font-size:16.4px;line-height:21px;color:#fff;letter-spacing:-0.12px;">Usage</span><svg style="position:absolute;left:13.3px;top:1001px;" width="26" height="26" viewBox="0 0 26 26"><defs><clipPath id="av1"><circle cx="13" cy="13" r="12.700"/></clipPath></defs><circle cx="13" cy="13" r="12.700" fill="#1b2130"/><g clip-path="url(#av1)"><path d="M3 27q1.500-5.500 7-6.200h6q5.500.7 7 6.200z" fill="#8f8c8c"/><ellipse cx="12.800" cy="12.300" rx="6.300" ry="8.200" fill="#a7a2a0" transform="rotate(-6 13 13)"/><ellipse cx="12.300" cy="8.300" rx="5.600" ry="4.400" fill="#cbc7c5" transform="rotate(-6 13 13)"/><path d="M7.500 14.500q5.500 8.500 11.500-1l-.3 4.500q-5.200 6-10.600.5z" fill="#7b7573"/><ellipse cx="10.300" cy="11.800" rx="1.100" ry=".7" fill="#3c3a3a"/><ellipse cx="15.300" cy="11.300" rx="1.100" ry=".7" fill="#3c3a3a"/><path d="M10.300 15.800q3 2.400 5.800-.4" stroke="#f2f0ee" stroke-width="1.200" fill="none"/></g></svg><span class="t" style="left:48.8px;top:1003.4px;font-size:16.4px;line-height:21px;color:#fff;letter-spacing:0.46px;">Account</span><div style="position:absolute;left:139px;top:1005.3px;width:17.4px;height:17.4px;background:#c9444f;border-radius:50%;"></div><span class="t" style="left:144.6px;top:1006.4px;font-size:11.5px;line-height:15px;color:#fff;">2</span><div style="position:absolute;left:1px;top:1039.3px;width:164px;height:1px;background:#6a7180;"></div><svg style="position:absolute;left:137px;top:1049px;" width="19" height="16" viewBox="0 0 19 16"><path d="M1.200 1v14M18 8H5M10.500 2.500 5 8l5.500 5.500" fill="none" stroke="#e6e8ec" stroke-width="1.500"/></svg></div><span class="t" style="left:199.3px;top:33.2px;font-size:17px;line-height:22px;color:#2b3340;letter-spacing:-0.23px;-webkit-text-stroke:0.25px #2b3340;">Results</span><span class="t" style="left:281px;top:33.2px;font-size:17px;line-height:22px;color:#4a5160;letter-spacing:-0.38px;">BubbleUp</span><span class="t" style="left:379.5px;top:33.2px;font-size:17px;line-height:22px;color:#4a5160;letter-spacing:0.29px;">Metrics</span><span class="t" style="left:462px;top:33.2px;font-size:17px;line-height:22px;color:#4a5160;letter-spacing:-0.15px;">Traces</span><span class="t" style="left:539px;top:33.2px;font-size:17px;line-height:22px;color:#4a5160;letter-spacing:-0.61px;">Raw Data</span><div style="position:absolute;left:186.2px;top:69.1px;width:1274.4px;height:1.5px;background:#e8ebf2;"></div><div style="position:absolute;left:186.2px;top:67.3px;width:81.6px;height:3px;background:#3a85d9;"></div><div style="position:absolute;left:994px;top:36.8px;width:13.6px;height:13.4px;border:1.500px solid #6b7280;border-radius:3px;box-sizing:border-box;background:#fff;"></div><span class="t" style="left:1014.4px;top:34.1px;font-size:14.7px;line-height:19px;color:#444b57;letter-spacing:-0.12px;">Compare to</span><div style="position:absolute;left:1099px;top:24.7px;width:200.7px;height:37.6px;border:1.500px solid #d3dae8;border-radius:4.500px;box-sizing:border-box;background:#fff;"></div><span class="t" style="left:1117.7px;top:34.1px;font-size:14.7px;line-height:19px;color:#444b57;letter-spacing:-0.05px;">1 week prior</span><svg style="position:absolute;left:1271.5px;top:39.1px;" width="17" height="10" viewBox="0 0 17 10"><path d="M1.200 1.200 8.400 8.400 15.600 1.200" fill="none" stroke="#555b66" stroke-width="1.500"/></svg><svg style="position:absolute;left:1318.3px;top:33.5px;" width="21" height="21" viewBox="0 0 24 24"><g fill="none" stroke="#555b66" stroke-width="1.500" stroke-linejoin="round"><circle cx="12" cy="12" r="4.200"/><path d="M21.27 15.84L21 16.44L20.69 17.02L19.57 17.06L18.48 16.97L18.14 17.38L17.77 17.77L17.38 18.14L16.97 18.48L17.06 19.57L17.02 20.69L16.44 21L15.84 21.27L15.23 21.5L14.6 21.7L13.78 20.93L13.07 20.09L12.53 20.15L12 20.16L11.47 20.15L10.93 20.09L10.22 20.93L9.4 21.7L8.77 21.5L8.16 21.27L7.56 21L6.98 20.69L6.94 19.57L7.03 18.48L6.62 18.14L6.23 17.77L5.86 17.38L5.52 16.97L4.43 17.06L3.31 17.02L3 16.44L2.73 15.84L2.5 15.23L2.3 14.6L3.07 13.78L3.91 13.07L3.85 12.53L3.84 12L3.85 11.47L3.91 10.93L3.07 10.22L2.3 9.4L2.5 8.77L2.73 8.16L3 7.56L3.31 6.98L4.43 6.94L5.52 7.03L5.86 6.62L6.23 6.23L6.62 5.86L7.03 5.52L6.94 4.43L6.98 3.31L7.56 3L8.16 2.73L8.77 2.5L9.4 2.3L10.22 3.07L10.93 3.91L11.47 3.85L12 3.84L12.53 3.85L13.07 3.91L13.78 3.07L14.6 2.3L15.23 2.5L15.84 2.73L16.44 3L17.02 3.31L17.06 4.43L16.97 5.52L17.38 5.86L17.77 6.23L18.14 6.62L18.48 7.03L19.57 6.94L20.69 6.98L21 7.56L21.27 8.16L21.5 8.77L21.7 9.4L20.93 10.22L20.09 10.93L20.15 11.47L20.16 12L20.15 12.53L20.09 13.07L20.93 13.78L21.7 14.6L21.5 15.23z"/></g></svg><span class="t" style="left:1345.3px;top:34.1px;font-size:14.9px;line-height:19px;color:#2f3744;letter-spacing:-0.18px;-webkit-text-stroke:0.3px #2f3744;">Graph Settings</span><span class="t" style="left:192.2px;top:97.5px;font-size:11.9px;line-height:15px;color:#2b3340;font-weight:700;letter-spacing:0.26px;">Oct 12 2022 02:07:08.234 &#8211; Oct 19 2022 02:07:08.234 UTC-04:00 (Granularity: 30 min)</span><span class="t" style="left:192.5px;top:132.8px;font-size:14px;line-height:18px;color:#3c4350;letter-spacing:-0.45px;-webkit-text-stroke:0.3px #3c4350;">COUNT</span><span class="t" style="left:192.5px;top:259.75px;font-size:14px;line-height:18px;color:#3c4350;letter-spacing:0.32px;-webkit-text-stroke:0.3px #3c4350;">HEATMAP(Log_Duration)</span><span class="t" style="left:192.5px;top:386.7px;font-size:14px;line-height:18px;color:#3c4350;letter-spacing:0.43px;-webkit-text-stroke:0.3px #3c4350;">P99(duration_ms)</span><span class="t" style="left:192.5px;top:513.65px;font-size:14px;line-height:18px;color:#3c4350;letter-spacing:0.43px;-webkit-text-stroke:0.3px #3c4350;">P50(duration_ms)</span><span class="t" style="left:192.5px;top:640.6px;font-size:14px;line-height:18px;color:#3c4350;letter-spacing:0.39px;-webkit-text-stroke:0.3px #3c4350;">AVG(duration_ms)</span><svg style="position:absolute;left:0px;top:0px;font-family:'Liberation Sans', sans-serif;" width="1894" height="760" viewBox="0 0 1894 760"><text x="235.700" y="226" text-anchor="end" font-size="12.400" fill="#666b74">0</text><text x="235.700" y="199" text-anchor="end" font-size="12.400" fill="#666b74">5.0M</text><text x="235.700" y="172" text-anchor="end" font-size="12.400" fill="#666b74">10.0M</text><path d="M244.700 221.6H1411.800M244.700 194.6H1411.800M244.700 167.6H1411.800M313.5 221.6v7M396.87 221.6v7M480.24 221.6v7M563.61 221.6v7M646.98 221.6v7M730.35 221.6v7M813.72 221.6v7M897.09 221.6v7M980.46 221.6v7M1063.83 221.6v7M1147.2 221.6v7M1230.57 221.6v7M1313.94 221.6v7M1397.31 221.6v7" stroke="#e6e9f1" stroke-width="1.500" fill="none"/><text x="313.5" y="241.7" text-anchor="middle" font-size="12.400" fill="#666b74">12:00</text><text x="396.87" y="241.7" text-anchor="middle" font-size="12.400" fill="#666b74">Thu Oct 13</text><text x="480.24" y="241.7" text-anchor="middle" font-size="12.400" fill="#666b74">12:00</text><text x="563.61" y="241.7" text-anchor="middle" font-size="12.400" fill="#666b74">Fri Oct 14</text><text x="646.98" y="241.7" text-anchor="middle" font-size="12.400" fill="#666b74">12:00</text><text x="730.35" y="241.7" text-anchor="middle" font-size="12.400" fill="#666b74">Sat Oct 15</text><text x="813.72" y="241.7" text-anchor="middle" font-size="12.400" fill="#666b74">12:00</text><text x="897.09" y="241.7" text-anchor="middle" font-size="12.400" fill="#666b74">Sun Oct 16</text><text x="980.46" y="241.7" text-anchor="middle" font-size="12.400" fill="#666b74">12:00</text><text x="1063.83" y="241.7" text-anchor="middle" font-size="12.400" fill="#666b74">Mon Oct 17</text><text x="1147.2" y="241.7" text-anchor="middle" font-size="12.400" fill="#666b74">12:00</text><text x="1230.57" y="241.7" text-anchor="middle" font-size="12.400" fill="#666b74">Tue Oct 18</text><text x="1313.94" y="241.7" text-anchor="middle" font-size="12.400" fill="#666b74">12:00</text><text x="1397.31" y="241.7" text-anchor="middle" font-size="12.400" fill="#666b74">Wed Oct 19</text><text x="235.700" y="353.1" text-anchor="end" font-size="12.400" fill="#666b74">0</text><text x="235.700" y="326.1" text-anchor="end" font-size="12.400" fill="#666b74">5</text><text x="235.700" y="299.1" text-anchor="end" font-size="12.400" fill="#666b74">10</text><path d="M244.700 348.7H1411.800M244.700 321.7H1411.800M244.700 294.7H1411.800M313.5 348.7v7M396.87 348.7v7M480.24 348.7v7M563.61 348.7v7M646.98 348.7v7M730.35 348.7v7M813.72 348.7v7M897.09 348.7v7M980.46 348.7v7M1063.83 348.7v7M1147.2 348.7v7M1230.57 348.7v7M1313.94 348.7v7M1397.31 348.7v7" stroke="#e6e9f1" stroke-width="1.500" fill="none"/><text x="313.5" y="368.8" text-anchor="middle" font-size="12.400" fill="#666b74">12:00</text><text x="396.87" y="368.8" text-anchor="middle" font-size="12.400" fill="#666b74">Thu Oct 13</text><text x="480.24" y="368.8" text-anchor="middle" font-size="12.400" fill="#666b74">12:00</text><text x="563.61" y="368.8" text-anchor="middle" font-size="12.400" fill="#666b74">Fri Oct 14</text><text x="646.98" y="368.8" text-anchor="middle" font-size="12.400" fill="#666b74">12:00</text><text x="730.35" y="368.8" text-anchor="middle" font-size="12.400" fill="#666b74">Sat Oct 15</text><text x="813.72" y="368.8" text-anchor="middle" font-size="12.400" fill="#666b74">12:00</text><text x="897.09" y="368.8" text-anchor="middle" font-size="12.400" fill="#666b74">Sun Oct 16</text><text x="980.46" y="368.8" text-anchor="middle" font-size="12.400" fill="#666b74">12:00</text><text x="1063.83" y="368.8" text-anchor="middle" font-size="12.400" fill="#666b74">Mon Oct 17</text><text x="1147.2" y="368.8" text-anchor="middle" font-size="12.400" fill="#666b74">12:00</text><text x="1230.57" y="368.8" text-anchor="middle" font-size="12.400" fill="#666b74">Tue Oct 18</text><text x="1313.94" y="368.8" text-anchor="middle" font-size="12.400" fill="#666b74">12:00</text><text x="1397.31" y="368.8" text-anchor="middle" font-size="12.400" fill="#666b74">Wed Oct 19</text><text x="235.700" y="479.9" text-anchor="end" font-size="12.400" fill="#666b74">0</text><text x="235.700" y="452.9" text-anchor="end" font-size="12.400" fill="#666b74">10k</text><text x="235.700" y="425.9" text-anchor="end" font-size="12.400" fill="#666b74">20k</text><path d="M244.700 475.5H1411.800M244.700 448.5H1411.800M244.700 421.5H1411.800M313.5 475.5v7M396.87 475.5v7M480.24 475.5v7M563.61 475.5v7M646.98 475.5v7M730.35 475.5v7M813.72 475.5v7M897.09 475.5v7M980.46 475.5v7M1063.83 475.5v7M1147.2 475.5v7M1230.57 475.5v7M1313.94 475.5v7M1397.31 475.5v7" stroke="#e6e9f1" stroke-width="1.500" fill="none"/><text x="313.5" y="495.6" text-anchor="middle" font-size="12.400" fill="#666b74">12:00</text><text x="396.87" y="495.6" text-anchor="middle" font-size="12.400" fill="#666b74">Thu Oct 13</text><text x="480.24" y="495.6" text-anchor="middle" font-size="12.400" fill="#666b74">12:00</text><text x="563.61" y="495.6" text-anchor="middle" font-size="12.400" fill="#666b74">Fri Oct 14</text><text x="646.98" y="495.6" text-anchor="middle" font-size="12.400" fill="#666b74">12:00</text><text x="730.35" y="495.6" text-anchor="middle" font-size="12.400" fill="#666b74">Sat Oct 15</text><text x="813.72" y="495.6" text-anchor="middle" font-size="12.400" fill="#666b74">12:00</text><text x="897.09" y="495.6" text-anchor="middle" font-size="12.400" fill="#666b74">Sun Oct 16</text><text x="980.46" y="495.6" text-anchor="middle" font-size="12.400" fill="#666b74">12:00</text><text x="1063.83" y="495.6" text-anchor="middle" font-size="12.400" fill="#666b74">Mon Oct 17</text><text x="1147.2" y="495.6" text-anchor="middle" font-size="12.400" fill="#666b74">12:00</text><text x="1230.57" y="495.6" text-anchor="middle" font-size="12.400" fill="#666b74">Tue Oct 18</text><text x="1313.94" y="495.6" text-anchor="middle" font-size="12.400" fill="#666b74">12:00</text><text x="1397.31" y="495.6" text-anchor="middle" font-size="12.400" fill="#666b74">Wed Oct 19</text><text x="235.700" y="606.8" text-anchor="end" font-size="12.400" fill="#666b74">0</text><text x="235.700" y="579.8" text-anchor="end" font-size="12.400" fill="#666b74">2000</text><text x="235.700" y="552.8" text-anchor="end" font-size="12.400" fill="#666b74">4000</text><path d="M244.700 602.4H1411.800M244.700 575.4H1411.800M244.700 548.4H1411.800M313.5 602.4v7M396.87 602.4v7M480.24 602.4v7M563.61 602.4v7M646.98 602.4v7M730.35 602.4v7M813.72 602.4v7M897.09 602.4v7M980.46 602.4v7M1063.83 602.4v7M1147.2 602.4v7M1230.57 602.4v7M1313.94 602.4v7M1397.31 602.4v7" stroke="#e6e9f1" stroke-width="1.500" fill="none"/><text x="313.5" y="622.5" text-anchor="middle" font-size="12.400" fill="#666b74">12:00</text><text x="396.87" y="622.5" text-anchor="middle" font-size="12.400" fill="#666b74">Thu Oct 13</text><text x="480.24" y="622.5" text-anchor="middle" font-size="12.400" fill="#666b74">12:00</text><text x="563.61" y="622.5" text-anchor="middle" font-size="12.400" fill="#666b74">Fri Oct 14</text><text x="646.98" y="622.5" text-anchor="middle" font-size="12.400" fill="#666b74">12:00</text><text x="730.35" y="622.5" text-anchor="middle" font-size="12.400" fill="#666b74">Sat Oct 15</text><text x="813.72" y="622.5" text-anchor="middle" font-size="12.400" fill="#666b74">12:00</text><text x="897.09" y="622.5" text-anchor="middle" font-size="12.400" fill="#666b74">Sun Oct 16</text><text x="980.46" y="622.5" text-anchor="middle" font-size="12.400" fill="#666b74">12:00</text><text x="1063.83" y="622.5" text-anchor="middle" font-size="12.400" fill="#666b74">Mon Oct 17</text><text x="1147.2" y="622.5" text-anchor="middle" font-size="12.400" fill="#666b74">12:00</text><text x="1230.57" y="622.5" text-anchor="middle" font-size="12.400" fill="#666b74">Tue Oct 18</text><text x="1313.94" y="622.5" text-anchor="middle" font-size="12.400" fill="#666b74">12:00</text><text x="1397.31" y="622.5" text-anchor="middle" font-size="12.400" fill="#666b74">Wed Oct 19</text><text x="235.700" y="733.7" text-anchor="end" font-size="12.400" fill="#666b74">0</text><text x="235.700" y="706.7" text-anchor="end" font-size="12.400" fill="#666b74">2000</text><text x="235.700" y="679.7" text-anchor="end" font-size="12.400" fill="#666b74">4000</text><path d="M244.700 729.3H1411.800M244.700 702.3H1411.800M244.700 675.3H1411.800M313.5 729.3v7M396.87 729.3v7M480.24 729.3v7M563.61 729.3v7M646.98 729.3v7M730.35 729.3v7M813.72 729.3v7M897.09 729.3v7M980.46 729.3v7M1063.83 729.3v7M1147.2 729.3v7M1230.57 729.3v7M1313.94 729.3v7M1397.31 729.3v7" stroke="#e6e9f1" stroke-width="1.500" fill="none"/><text x="313.5" y="749.4" text-anchor="middle" font-size="12.400" fill="#666b74">12:00</text><text x="396.87" y="749.4" text-anchor="middle" font-size="12.400" fill="#666b74">Thu Oct 13</text><text x="480.24" y="749.4" text-anchor="middle" font-size="12.400" fill="#666b74">12:00</text><text x="563.61" y="749.4" text-anchor="middle" font-size="12.400" fill="#666b74">Fri Oct 14</text><text x="646.98" y="749.4" text-anchor="middle" font-size="12.400" fill="#666b74">12:00</text><text x="730.35" y="749.4" text-anchor="middle" font-size="12.400" fill="#666b74">Sat Oct 15</text><text x="813.72" y="749.4" text-anchor="middle" font-size="12.400" fill="#666b74">12:00</text><text x="897.09" y="749.4" text-anchor="middle" font-size="12.400" fill="#666b74">Sun Oct 16</text><text x="980.46" y="749.4" text-anchor="middle" font-size="12.400" fill="#666b74">12:00</text><text x="1063.83" y="749.4" text-anchor="middle" font-size="12.400" fill="#666b74">Mon Oct 17</text><text x="1147.2" y="749.4" text-anchor="middle" font-size="12.400" fill="#666b74">12:00</text><text x="1230.57" y="749.4" text-anchor="middle" font-size="12.400" fill="#666b74">Tue Oct 18</text><text x="1313.94" y="749.4" text-anchor="middle" font-size="12.400" fill="#666b74">12:00</text><text x="1397.31" y="749.4" text-anchor="middle" font-size="12.400" fill="#666b74">Wed Oct 19</text><path d="M245 322.83h3.77V341.15h-3.77zM248.47 322.29h3.77V339h-3.77zM251.95 321.21h3.77V340.62h-3.77zM255.42 322.83h3.77V339.54h-3.77zM258.89 322.29h3.77V340.62h-3.77zM262.37 321.75h3.77V340.62h-3.77zM265.84 322.83h3.77V340.08h-3.77zM269.31 321.75h3.77V339.54h-3.77zM272.79 322.29h3.77V340.62h-3.77zM276.26 322.29h3.77V340.08h-3.77zM279.73 323.37h3.77V340.62h-3.77zM283.21 322.83h3.77V339.54h-3.77zM286.68 322.29h3.77V340.62h-3.77zM290.15 323.37h3.77V340.08h-3.77zM293.62 323.37h3.77V339.54h-3.77zM297.1 322.83h3.77V339.54h-3.77zM300.57 323.37h3.77V340.08h-3.77zM304.04 323.37h3.77V340.08h-3.77zM307.52 321.75h3.77V340.08h-3.77zM310.99 323.37h3.77V339.54h-3.77zM314.46 322.83h3.77V340.62h-3.77zM317.94 323.37h3.77V340.62h-3.77zM321.41 322.83h3.77V340.08h-3.77zM324.88 322.83h3.77V340.62h-3.77zM328.36 323.37h3.77V340.08h-3.77zM331.83 322.83h3.77V340.62h-3.77zM335.3 322.29h3.77V340.62h-3.77zM338.78 320.67h3.77V339.54h-3.77zM342.25 318.52h3.77V340.62h-3.77zM345.72 316.36h3.77V341.15h-3.77zM349.2 318.52h3.77V340.08h-3.77zM352.67 321.21h3.77V340.08h-3.77zM356.14 322.83h3.77V340.62h-3.77zM359.62 321.21h3.77V340.62h-3.77zM363.09 322.83h3.77V340.08h-3.77zM366.56 321.21h3.77V340.62h-3.77zM370.04 322.83h3.77V340.08h-3.77zM373.51 322.83h3.77V340.62h-3.77zM376.98 321.75h3.77V339.54h-3.77zM380.46 322.83h3.77V340.08h-3.77zM383.93 322.83h3.77V340.08h-3.77zM387.4 321.75h3.77V340.08h-3.77zM390.88 322.83h3.77V339.54h-3.77zM394.35 322.29h3.77V340.62h-3.77zM397.82 322.29h3.77V340.62h-3.77zM401.29 322.29h3.77V340.62h-3.77zM404.77 321.75h3.77V340.08h-3.77zM408.24 321.21h3.77V339.54h-3.77zM411.71 322.29h3.77V339h-3.77zM415.19 322.83h3.77V339.54h-3.77zM418.66 322.29h3.77V339.54h-3.77zM422.13 320.67h3.77V339.54h-3.77zM425.61 322.83h3.77V340.08h-3.77zM429.08 322.83h3.77V340.62h-3.77zM432.55 322.29h3.77V339.54h-3.77zM436.03 321.21h3.77V339h-3.77zM439.5 322.83h3.77V339.54h-3.77zM442.97 322.83h3.77V340.62h-3.77zM446.45 322.29h3.77V339.54h-3.77zM449.92 322.29h3.77V340.62h-3.77zM453.39 321.75h3.77V340.08h-3.77zM456.87 321.75h3.77V340.08h-3.77zM460.34 321.75h3.77V340.08h-3.77zM463.81 322.29h3.77V340.62h-3.77zM467.29 322.29h3.77V339h-3.77zM470.76 321.21h3.77V339.54h-3.77zM474.23 321.75h3.77V340.08h-3.77zM477.71 321.75h3.77V339h-3.77zM481.18 321.21h3.77V340.08h-3.77zM484.65 320.13h3.77V340.08h-3.77zM488.12 319.59h3.77V339.54h-3.77zM491.6 319.59h3.77V340.08h-3.77zM495.07 318.52h3.77V339h-3.77zM498.54 318.52h3.77V340.08h-3.77zM502.02 320.13h3.77V339h-3.77zM505.49 319.59h3.77V339.54h-3.77zM508.96 319.59h3.77V339.54h-3.77zM512.44 320.13h3.77V339h-3.77zM515.91 318.52h3.77V339h-3.77zM519.38 319.59h3.77V339h-3.77zM522.86 318.52h3.77V339h-3.77zM526.33 320.13h3.77V340.08h-3.77zM529.8 322.29h3.77V339h-3.77zM533.28 323.37h3.77V339h-3.77zM536.75 322.29h3.77V339.54h-3.77zM540.22 321.75h3.77V339.54h-3.77zM543.7 322.83h3.77V340.08h-3.77zM547.17 322.83h3.77V339h-3.77zM550.64 322.83h3.77V339h-3.77zM554.12 321.75h3.77V339h-3.77zM557.59 322.83h3.77V339.54h-3.77zM561.06 322.29h3.77V339h-3.77zM564.54 322.29h3.77V339h-3.77zM568.01 321.75h3.77V340.08h-3.77zM571.48 322.29h3.77V340.08h-3.77zM574.96 321.21h3.77V340.08h-3.77zM578.43 322.29h3.77V340.08h-3.77zM581.9 322.83h3.77V340.08h-3.77zM585.38 322.29h3.77V339.54h-3.77zM588.85 321.75h3.77V340.08h-3.77zM592.32 322.29h3.77V339.54h-3.77zM595.79 320.67h3.77V339h-3.77zM599.27 322.29h3.77V340.08h-3.77zM602.74 321.75h3.77V340.08h-3.77zM606.21 322.29h3.77V340.08h-3.77zM609.69 322.29h3.77V340.08h-3.77zM613.16 322.83h3.77V341.15h-3.77zM616.63 321.21h3.77V339h-3.77zM620.11 322.29h3.77V340.08h-3.77zM623.58 322.29h3.77V339.54h-3.77zM627.05 322.29h3.77V340.08h-3.77zM630.53 321.21h3.77V340.08h-3.77zM634 321.75h3.77V339.54h-3.77zM637.47 322.83h3.77V339h-3.77zM640.95 321.21h3.77V340.08h-3.77zM644.42 322.29h3.77V339.54h-3.77zM647.89 321.21h3.77V339.54h-3.77zM651.37 321.75h3.77V340.62h-3.77zM654.84 322.83h3.77V340.08h-3.77zM658.31 323.37h3.77V340.08h-3.77zM661.79 322.29h3.77V339h-3.77zM665.26 321.75h3.77V340.08h-3.77zM668.73 322.83h3.77V339.54h-3.77zM672.21 320.67h3.77V339h-3.77zM675.68 322.83h3.77V339h-3.77zM679.15 323.37h3.77V340.08h-3.77zM682.62 321.21h3.77V339.54h-3.77zM686.1 322.83h3.77V339.54h-3.77zM689.57 322.83h3.77V339h-3.77zM693.04 321.75h3.77V340.08h-3.77zM696.52 322.29h3.77V339h-3.77zM699.99 323.37h3.77V339h-3.77zM703.46 323.37h3.77V340.08h-3.77zM706.94 322.29h3.77V339h-3.77zM710.41 322.29h3.77V339.54h-3.77zM713.88 322.83h3.77V340.08h-3.77zM717.36 323.91h3.77V339.54h-3.77zM720.83 322.83h3.77V339h-3.77zM724.3 324.44h3.77V340.08h-3.77zM727.78 322.83h3.77V339h-3.77zM731.25 324.44h3.77V339.54h-3.77zM734.72 324.44h3.77V340.08h-3.77zM738.2 324.44h3.77V339.54h-3.77zM741.67 324.44h3.77V339.54h-3.77zM745.14 324.44h3.77V339.54h-3.77zM748.62 324.44h3.77V339.54h-3.77zM752.09 324.44h3.77V340.08h-3.77zM755.56 323.91h3.77V340.08h-3.77zM759.04 324.44h3.77V340.08h-3.77zM762.51 324.44h3.77V340.62h-3.77zM765.98 324.44h3.77V339.54h-3.77zM769.46 323.37h3.77V340.08h-3.77zM772.93 323.37h3.77V339.54h-3.77zM776.4 324.98h3.77V339.54h-3.77zM779.88 324.44h3.77V339h-3.77zM783.35 324.98h3.77V339h-3.77zM786.82 323.37h3.77V339.54h-3.77zM790.29 323.91h3.77V339h-3.77zM793.77 324.98h3.77V339h-3.77zM797.24 324.98h3.77V339h-3.77zM800.71 325.52h3.77V339h-3.77zM804.19 325.52h3.77V340.62h-3.77zM807.66 325.52h3.77V340.08h-3.77zM811.13 324.44h3.77V340.08h-3.77zM814.61 323.37h3.77V339h-3.77zM818.08 325.52h3.77V339h-3.77zM821.55 324.44h3.77V339h-3.77zM825.03 323.91h3.77V340.08h-3.77zM828.5 324.98h3.77V339h-3.77zM831.97 324.98h3.77V339.54h-3.77zM835.45 323.91h3.77V339h-3.77zM838.92 324.98h3.77V339h-3.77zM842.39 325.52h3.77V340.08h-3.77zM845.87 324.98h3.77V340.08h-3.77zM849.34 324.98h3.77V339h-3.77zM852.81 324.98h3.77V339h-3.77zM856.29 323.91h3.77V339.54h-3.77zM859.76 324.44h3.77V339h-3.77zM863.23 324.98h3.77V340.08h-3.77zM866.71 324.44h3.77V339.54h-3.77zM870.18 324.98h3.77V340.08h-3.77zM873.65 323.91h3.77V339.54h-3.77zM877.12 323.91h3.77V340.08h-3.77zM880.6 324.44h3.77V339.54h-3.77zM884.07 325.52h3.77V339.54h-3.77zM887.54 324.44h3.77V340.08h-3.77zM891.02 324.44h3.77V339.54h-3.77zM894.49 325.52h3.77V339.54h-3.77zM897.96 324.98h3.77V339.54h-3.77zM901.44 323.91h3.77V341.15h-3.77zM904.91 322.29h3.77V339.54h-3.77zM908.38 322.83h3.77V340.08h-3.77zM911.86 321.75h3.77V339.54h-3.77zM915.33 322.29h3.77V340.62h-3.77zM918.8 322.29h3.77V340.62h-3.77zM922.28 321.21h3.77V340.62h-3.77zM925.75 322.83h3.77V340.62h-3.77zM929.22 322.83h3.77V340.08h-3.77zM932.7 322.29h3.77V340.62h-3.77zM936.17 321.75h3.77V339h-3.77zM939.64 322.29h3.77V339.54h-3.77zM943.12 322.29h3.77V339h-3.77zM946.59 322.29h3.77V340.08h-3.77zM950.06 322.29h3.77V340.08h-3.77zM953.54 321.75h3.77V339.54h-3.77zM957.01 321.75h3.77V339.54h-3.77zM960.48 322.29h3.77V339.54h-3.77zM963.96 321.75h3.77V340.08h-3.77zM967.43 322.29h3.77V340.08h-3.77zM970.9 321.75h3.77V339h-3.77zM974.38 322.83h3.77V339h-3.77zM977.85 321.21h3.77V339.54h-3.77zM981.32 323.37h3.77V340.08h-3.77zM984.79 323.91h3.77V340.08h-3.77zM988.27 324.44h3.77V339h-3.77zM991.74 324.44h3.77V340.08h-3.77zM995.21 323.91h3.77V339.54h-3.77zM998.69 323.91h3.77V339h-3.77zM1002.16 323.91h3.77V339h-3.77zM1005.63 323.91h3.77V339h-3.77zM1009.11 323.91h3.77V339.54h-3.77zM1012.58 324.98h3.77V339h-3.77zM1016.05 322.83h3.77V340.08h-3.77zM1019.53 323.91h3.77V339h-3.77zM1023 323.91h3.77V339h-3.77zM1026.47 324.98h3.77V340.08h-3.77zM1029.95 323.91h3.77V339.54h-3.77zM1033.42 323.91h3.77V339.54h-3.77zM1036.89 324.98h3.77V339.54h-3.77zM1040.37 324.98h3.77V339.54h-3.77zM1043.84 323.91h3.77V340.08h-3.77zM1047.31 323.91h3.77V340.62h-3.77zM1050.79 323.91h3.77V340.08h-3.77zM1054.26 323.91h3.77V340.08h-3.77zM1057.73 324.98h3.77V340.08h-3.77zM1061.21 322.83h3.77V339.54h-3.77zM1064.68 322.83h3.77V339.54h-3.77zM1068.15 323.37h3.77V339.54h-3.77zM1071.62 319.59h3.77V340.62h-3.77zM1075.1 321.21h3.77V339.54h-3.77zM1078.57 321.21h3.77V340.62h-3.77zM1082.04 321.21h3.77V340.62h-3.77zM1085.52 322.29h3.77V339.54h-3.77zM1088.99 321.75h3.77V339.54h-3.77zM1092.46 321.75h3.77V339.54h-3.77zM1095.94 322.29h3.77V340.08h-3.77zM1099.41 321.75h3.77V340.62h-3.77zM1102.88 322.29h3.77V340.08h-3.77zM1106.36 322.29h3.77V340.62h-3.77zM1109.83 320.13h3.77V340.08h-3.77zM1113.3 321.21h3.77V340.08h-3.77zM1116.78 322.29h3.77V339.54h-3.77zM1120.25 322.29h3.77V340.08h-3.77zM1123.72 321.75h3.77V340.62h-3.77zM1127.2 322.83h3.77V340.08h-3.77zM1130.67 321.75h3.77V340.08h-3.77zM1134.14 321.75h3.77V339h-3.77zM1137.62 322.29h3.77V339.54h-3.77zM1141.09 321.21h3.77V340.62h-3.77zM1144.56 321.21h3.77V340.62h-3.77zM1148.04 322.83h3.77V339.54h-3.77zM1151.51 322.29h3.77V339.54h-3.77zM1154.98 321.21h3.77V339h-3.77zM1158.46 322.29h3.77V339.54h-3.77zM1161.93 321.75h3.77V340.08h-3.77zM1165.4 320.13h3.77V340.08h-3.77zM1168.88 322.83h3.77V340.62h-3.77zM1172.35 321.75h3.77V339h-3.77zM1175.82 321.75h3.77V339.54h-3.77zM1179.29 321.21h3.77V340.08h-3.77zM1182.77 322.29h3.77V339h-3.77zM1186.24 322.29h3.77V340.08h-3.77zM1189.71 322.29h3.77V339.54h-3.77zM1193.19 322.29h3.77V339h-3.77zM1196.66 322.29h3.77V339.54h-3.77zM1200.13 322.29h3.77V340.62h-3.77zM1203.61 321.21h3.77V340.08h-3.77zM1207.08 321.75h3.77V340.08h-3.77zM1210.55 322.29h3.77V339.54h-3.77zM1214.03 322.83h3.77V339.54h-3.77zM1217.5 321.21h3.77V339h-3.77zM1220.97 321.75h3.77V339h-3.77zM1224.45 322.29h3.77V339.54h-3.77zM1227.92 322.83h3.77V339h-3.77zM1231.39 321.75h3.77V339h-3.77zM1234.87 321.75h3.77V339.54h-3.77zM1238.34 321.75h3.77V340.08h-3.77zM1241.81 321.21h3.77V340.62h-3.77zM1245.29 321.75h3.77V339.54h-3.77zM1248.76 321.21h3.77V340.62h-3.77zM1252.23 321.21h3.77V340.08h-3.77zM1255.71 321.21h3.77V340.08h-3.77zM1259.18 320.67h3.77V340.08h-3.77zM1262.65 321.21h3.77V340.08h-3.77zM1266.12 320.67h3.77V340.08h-3.77zM1269.6 321.75h3.77V340.62h-3.77zM1273.07 321.75h3.77V339h-3.77zM1276.54 321.21h3.77V339h-3.77zM1280.02 321.21h3.77V340.62h-3.77zM1283.49 321.75h3.77V339h-3.77zM1286.96 321.75h3.77V340.08h-3.77zM1290.44 320.67h3.77V339.54h-3.77zM1293.91 321.75h3.77V339h-3.77zM1297.38 321.75h3.77V339h-3.77zM1300.86 321.21h3.77V340.08h-3.77zM1304.33 321.75h3.77V339.54h-3.77zM1307.8 321.75h3.77V339.54h-3.77zM1311.28 321.21h3.77V340.08h-3.77zM1314.75 321.75h3.77V339.54h-3.77zM1318.22 320.67h3.77V340.08h-3.77zM1321.7 320.67h3.77V339.54h-3.77zM1325.17 321.21h3.77V339h-3.77zM1328.64 319.59h3.77V340.08h-3.77zM1332.12 321.75h3.77V339h-3.77zM1335.59 321.75h3.77V339h-3.77zM1339.06 321.75h3.77V339h-3.77zM1342.54 321.75h3.77V339h-3.77zM1346.01 321.75h3.77V339.54h-3.77zM1349.48 320.67h3.77V339h-3.77zM1352.96 321.75h3.77V340.08h-3.77zM1356.43 321.21h3.77V339.54h-3.77zM1359.9 321.75h3.77V340.08h-3.77zM1363.38 321.75h3.77V339.54h-3.77zM1366.85 320.67h3.77V340.08h-3.77zM1370.32 321.75h3.77V339h-3.77zM1373.79 321.75h3.77V340.08h-3.77zM1377.27 321.75h3.77V339h-3.77zM1380.74 321.21h3.77V340.08h-3.77zM1384.21 321.75h3.77V340.08h-3.77zM1387.69 321.21h3.77V340.08h-3.77zM1391.16 320.67h3.77V340.08h-3.77zM1394.63 320.67h3.77V339h-3.77zM1398.11 321.75h3.77V340.08h-3.77zM1401.58 321.75h3.77V339.54h-3.77zM1405.05 321.75h3.77V341.15h-3.77zM1408.53 321.75h3.77V340.62h-3.77z" fill="#9bd1b9"/><path d="M269.31 320.67h10.42v0.7h-10.42zM290.15 319.06h3.47v0.7h-3.47zM331.83 341.69h3.47v0.7h-3.47zM352.67 316.9h10.42v0.7h-10.42zM376.98 320.67h3.47v0.7h-3.47zM390.88 318.52h3.47v0.7h-3.47zM404.77 320.67h3.47v0.7h-3.47zM463.81 321.21h3.47v0.7h-3.47zM467.29 317.98h3.47v0.7h-3.47zM512.44 315.82h3.47v0.7h-3.47zM543.7 318.52h6.95v0.7h-6.95zM554.12 320.13h6.95v0.7h-6.95zM672.21 319.59h10.42v0.7h-10.42zM686.1 321.75h10.42v0.7h-10.42zM699.99 322.29h6.95v0.7h-6.95zM748.62 323.37h6.95v0.7h-6.95zM762.51 322.29h3.47v0.7h-3.47zM772.93 322.29h3.47v0.7h-3.47zM818.08 323.91h3.47v0.7h-3.47zM825.03 322.83h6.95v0.7h-6.95zM842.39 341.69h10.42v0.7h-10.42zM852.81 322.83h3.47v0.7h-3.47zM887.54 322.29h6.95v0.7h-6.95zM891.02 341.69h3.47v0.7h-3.47zM897.96 323.64h10.42v0.7h-10.42zM901.44 322.29h6.95v0.7h-6.95zM925.75 320.67h6.95v0.7h-6.95zM932.7 321.21h10.42v0.7h-10.42zM950.06 317.98h3.47v0.7h-3.47zM963.96 341.69h6.95v0.7h-6.95zM970.9 320.67h3.47v0.7h-3.47zM981.32 322.29h10.42v0.7h-10.42zM995.21 321.75h3.47v0.7h-3.47zM1029.95 341.69h6.95v0.7h-6.95zM1050.79 341.69h3.47v0.7h-3.47zM1071.62 318.25h3.47v0.7h-3.47zM1144.56 320.13h3.47v0.7h-3.47zM1189.71 317.98h3.47v0.7h-3.47zM1200.13 317.98h10.42v0.7h-10.42zM1227.92 321.75h10.42v0.7h-10.42zM1231.39 317.44h6.95v0.7h-6.95zM1245.29 317.44h6.95v0.7h-6.95zM1266.12 318.52h3.47v0.7h-3.47zM1290.44 319.32h3.47v0.7h-3.47zM1311.28 320.13h3.47v0.7h-3.47zM1332.12 317.44h3.47v0.7h-3.47zM1359.9 320.13h3.47v0.7h-3.47zM1377.27 320.67h10.42v0.7h-10.42zM1408.53 317.44h10.42v0.7h-10.42z" fill="#a6d7c1"/><path d="M245 330.19h3.67v0.92h-3.67zM245 332.34h3.67v0.92h-3.67zM245 333.31h3.67v0.81h-3.67zM248.47 330.19h3.67v0.92h-3.67zM248.47 332.34h3.67v0.92h-3.67zM248.47 329.32h3.67v0.81h-3.67zM248.47 333.31h3.67v0.81h-3.67zM251.95 330.19h3.67v0.92h-3.67zM255.42 330.19h3.67v0.92h-3.67zM255.42 332.34h3.67v0.92h-3.67zM255.42 329.32h3.67v0.81h-3.67zM258.89 330.19h3.67v0.92h-3.67zM258.89 332.34h3.67v0.92h-3.67zM262.37 330.19h3.67v0.92h-3.67zM265.84 332.34h3.67v0.92h-3.67zM265.84 333.31h3.67v0.81h-3.67zM269.31 330.19h3.67v0.92h-3.67zM269.31 329.32h3.67v0.81h-3.67zM269.31 333.31h3.67v0.81h-3.67zM272.79 330.19h3.67v0.92h-3.67zM276.26 330.19h3.67v0.92h-3.67zM276.26 332.34h3.67v0.92h-3.67zM279.73 330.19h3.67v0.92h-3.67zM279.73 332.34h3.67v0.92h-3.67zM279.73 329.32h3.67v0.81h-3.67zM279.73 333.31h3.67v0.81h-3.67zM283.21 330.19h3.67v0.92h-3.67zM283.21 332.34h3.67v0.92h-3.67zM283.21 329.32h3.67v0.81h-3.67zM290.15 330.19h3.67v0.92h-3.67zM290.15 332.34h3.67v0.92h-3.67zM290.15 333.31h3.67v0.81h-3.67zM293.62 330.19h3.67v0.92h-3.67zM293.62 332.34h3.67v0.92h-3.67zM293.62 333.31h3.67v0.81h-3.67zM297.1 330.19h3.67v0.92h-3.67zM300.57 330.19h3.67v0.92h-3.67zM300.57 333.31h3.67v0.81h-3.67zM304.04 332.34h3.67v0.92h-3.67zM307.52 330.19h3.67v0.92h-3.67zM307.52 332.34h3.67v0.92h-3.67zM307.52 333.31h3.67v0.81h-3.67zM310.99 330.19h3.67v0.92h-3.67zM310.99 332.34h3.67v0.92h-3.67zM310.99 333.31h3.67v0.81h-3.67zM314.46 330.19h3.67v0.92h-3.67zM314.46 332.34h3.67v0.92h-3.67zM314.46 329.32h3.67v0.81h-3.67zM314.46 333.31h3.67v0.81h-3.67zM317.94 332.34h3.67v0.92h-3.67zM321.41 331.18h3.67v1.08h-3.67zM321.41 332.34h3.67v0.92h-3.67zM324.88 330.19h3.67v0.92h-3.67zM328.36 331.18h3.67v1.08h-3.67zM331.83 331.18h3.67v1.08h-3.67zM331.83 332.34h3.67v0.92h-3.67zM338.78 330.19h3.67v0.92h-3.67zM338.78 332.34h3.67v0.92h-3.67zM338.78 333.31h3.67v0.81h-3.67zM342.25 330.19h3.67v0.92h-3.67zM342.25 329.32h3.67v0.81h-3.67zM345.72 330.19h3.67v0.92h-3.67zM349.2 332.34h3.67v0.92h-3.67zM349.2 329.32h3.67v0.81h-3.67zM349.2 333.31h3.67v0.81h-3.67zM352.67 330.19h3.67v0.92h-3.67zM352.67 329.32h3.67v0.81h-3.67zM352.67 333.31h3.67v0.81h-3.67zM359.62 329.32h3.67v0.81h-3.67zM359.62 333.31h3.67v0.81h-3.67zM370.04 331.18h3.67v1.08h-3.67zM370.04 330.19h3.67v0.92h-3.67zM373.51 332.34h3.67v0.92h-3.67zM376.98 331.18h3.67v1.08h-3.67zM383.93 331.18h3.67v1.08h-3.67zM383.93 332.34h3.67v0.92h-3.67zM387.4 331.18h3.67v1.08h-3.67zM387.4 332.34h3.67v0.92h-3.67zM390.88 331.18h3.67v1.08h-3.67zM394.35 331.18h3.67v1.08h-3.67zM397.82 331.18h3.67v1.08h-3.67zM404.77 329.32h3.67v0.81h-3.67zM404.77 333.31h3.67v0.81h-3.67zM411.71 330.19h3.67v0.92h-3.67zM411.71 332.34h3.67v0.92h-3.67zM411.71 329.32h3.67v0.81h-3.67zM411.71 333.31h3.67v0.81h-3.67zM415.19 330.19h3.67v0.92h-3.67zM415.19 332.34h3.67v0.92h-3.67zM418.66 330.19h3.67v0.92h-3.67zM418.66 329.32h3.67v0.81h-3.67zM422.13 330.19h3.67v0.92h-3.67zM422.13 332.34h3.67v0.92h-3.67zM425.61 330.19h3.67v0.92h-3.67zM425.61 332.34h3.67v0.92h-3.67zM429.08 330.19h3.67v0.92h-3.67zM429.08 332.34h3.67v0.92h-3.67zM429.08 333.31h3.67v0.81h-3.67zM432.55 329.32h3.67v0.81h-3.67zM432.55 333.31h3.67v0.81h-3.67zM436.03 329.32h3.67v0.81h-3.67zM436.03 333.31h3.67v0.81h-3.67zM439.5 333.31h3.67v0.81h-3.67zM442.97 332.34h3.67v0.92h-3.67zM442.97 329.32h3.67v0.81h-3.67zM442.97 333.31h3.67v0.81h-3.67zM446.45 333.31h3.67v0.81h-3.67zM456.87 330.19h3.67v0.92h-3.67zM456.87 332.34h3.67v0.92h-3.67zM456.87 333.31h3.67v0.81h-3.67zM460.34 329.32h3.67v0.81h-3.67zM463.81 330.19h3.67v0.92h-3.67zM463.81 332.34h3.67v0.92h-3.67zM463.81 329.32h3.67v0.81h-3.67zM463.81 333.31h3.67v0.81h-3.67zM467.29 330.19h3.67v0.92h-3.67zM467.29 332.34h3.67v0.92h-3.67zM467.29 329.32h3.67v0.81h-3.67zM467.29 333.31h3.67v0.81h-3.67zM470.76 333.31h3.67v0.81h-3.67zM474.23 330.19h3.67v0.92h-3.67zM474.23 333.31h3.67v0.81h-3.67zM477.71 330.19h3.67v0.92h-3.67zM477.71 329.32h3.67v0.81h-3.67zM477.71 333.31h3.67v0.81h-3.67zM481.18 332.34h3.67v0.92h-3.67zM481.18 333.31h3.67v0.81h-3.67zM484.65 332.34h3.67v0.92h-3.67zM484.65 333.31h3.67v0.81h-3.67zM488.12 329.32h3.67v0.81h-3.67zM491.6 330.19h3.67v0.92h-3.67zM491.6 332.34h3.67v0.92h-3.67zM491.6 329.32h3.67v0.81h-3.67zM491.6 333.31h3.67v0.81h-3.67zM498.54 331.18h3.67v1.08h-3.67zM505.49 330.19h3.67v0.92h-3.67zM505.49 332.34h3.67v0.92h-3.67zM508.96 330.19h3.67v0.92h-3.67zM508.96 332.34h3.67v0.92h-3.67zM512.44 330.19h3.67v0.92h-3.67zM512.44 332.34h3.67v0.92h-3.67zM512.44 333.31h3.67v0.81h-3.67zM515.91 330.19h3.67v0.92h-3.67zM519.38 330.19h3.67v0.92h-3.67zM522.86 332.34h3.67v0.92h-3.67zM522.86 333.31h3.67v0.81h-3.67zM526.33 331.18h3.67v1.08h-3.67zM533.28 332.34h3.67v0.92h-3.67zM536.75 332.34h3.67v0.92h-3.67zM543.7 331.18h3.67v1.08h-3.67zM547.17 332.34h3.67v0.92h-3.67zM554.12 331.18h3.67v1.08h-3.67zM564.54 329.32h3.67v0.81h-3.67zM564.54 333.31h3.67v0.81h-3.67zM571.48 329.32h3.67v0.81h-3.67zM571.48 333.31h3.67v0.81h-3.67zM574.96 329.32h3.67v0.81h-3.67zM574.96 333.31h3.67v0.81h-3.67zM578.43 333.31h3.67v0.81h-3.67zM581.9 330.19h3.67v0.92h-3.67zM581.9 332.34h3.67v0.92h-3.67zM585.38 330.19h3.67v0.92h-3.67zM585.38 333.31h3.67v0.81h-3.67zM588.85 330.19h3.67v0.92h-3.67zM588.85 333.31h3.67v0.81h-3.67zM592.32 330.19h3.67v0.92h-3.67zM592.32 332.34h3.67v0.92h-3.67zM592.32 333.31h3.67v0.81h-3.67zM595.79 330.19h3.67v0.92h-3.67zM595.79 332.34h3.67v0.92h-3.67zM595.79 333.31h3.67v0.81h-3.67zM599.27 330.19h3.67v0.92h-3.67zM599.27 332.34h3.67v0.92h-3.67zM599.27 333.31h3.67v0.81h-3.67zM602.74 333.31h3.67v0.81h-3.67zM606.21 330.19h3.67v0.92h-3.67zM606.21 332.34h3.67v0.92h-3.67zM606.21 329.32h3.67v0.81h-3.67zM609.69 330.19h3.67v0.92h-3.67zM609.69 329.32h3.67v0.81h-3.67zM613.16 330.19h3.67v0.92h-3.67zM613.16 329.32h3.67v0.81h-3.67zM613.16 333.31h3.67v0.81h-3.67zM616.63 330.19h3.67v0.92h-3.67zM616.63 332.34h3.67v0.92h-3.67zM616.63 333.31h3.67v0.81h-3.67zM620.11 330.19h3.67v0.92h-3.67zM620.11 332.34h3.67v0.92h-3.67zM623.58 330.19h3.67v0.92h-3.67zM623.58 332.34h3.67v0.92h-3.67zM623.58 329.32h3.67v0.81h-3.67zM623.58 333.31h3.67v0.81h-3.67zM627.05 333.31h3.67v0.81h-3.67zM637.47 330.19h3.67v0.92h-3.67zM637.47 332.34h3.67v0.92h-3.67zM637.47 333.31h3.67v0.81h-3.67zM640.95 330.19h3.67v0.92h-3.67zM640.95 332.34h3.67v0.92h-3.67zM640.95 333.31h3.67v0.81h-3.67zM644.42 330.19h3.67v0.92h-3.67zM644.42 332.34h3.67v0.92h-3.67zM647.89 331.18h3.67v1.08h-3.67zM647.89 332.34h3.67v0.92h-3.67zM651.37 331.18h3.67v1.08h-3.67zM654.84 332.34h3.67v0.92h-3.67zM654.84 329.32h3.67v0.81h-3.67zM654.84 333.31h3.67v0.81h-3.67zM658.31 330.19h3.67v0.92h-3.67zM658.31 333.31h3.67v0.81h-3.67zM661.79 332.34h3.67v0.92h-3.67zM665.26 330.19h3.67v0.92h-3.67zM665.26 333.31h3.67v0.81h-3.67zM668.73 332.34h3.67v0.92h-3.67zM668.73 333.31h3.67v0.81h-3.67zM672.21 331.18h3.67v1.08h-3.67zM675.68 331.18h3.67v1.08h-3.67zM675.68 330.19h3.67v0.92h-3.67zM679.15 331.18h3.67v1.08h-3.67zM682.62 330.19h3.67v0.92h-3.67zM682.62 332.34h3.67v0.92h-3.67zM686.1 331.18h3.67v1.08h-3.67zM686.1 332.34h3.67v0.92h-3.67zM689.57 331.18h3.67v1.08h-3.67zM689.57 332.34h3.67v0.92h-3.67zM693.04 331.18h3.67v1.08h-3.67zM693.04 330.19h3.67v0.92h-3.67zM693.04 332.34h3.67v0.92h-3.67zM703.46 331.18h3.67v1.08h-3.67zM713.88 331.18h3.67v1.08h-3.67zM717.36 331.18h3.67v1.08h-3.67zM724.3 331.18h3.67v1.08h-3.67zM738.2 329.32h3.67v0.81h-3.67zM738.2 333.31h3.67v0.81h-3.67zM741.67 329.32h3.67v0.81h-3.67zM741.67 333.31h3.67v0.81h-3.67zM745.14 330.19h3.67v0.92h-3.67zM745.14 332.34h3.67v0.92h-3.67zM745.14 333.31h3.67v0.81h-3.67zM748.62 330.19h3.67v0.92h-3.67zM748.62 332.34h3.67v0.92h-3.67zM752.09 330.19h3.67v0.92h-3.67zM752.09 332.34h3.67v0.92h-3.67zM752.09 329.32h3.67v0.81h-3.67zM759.04 332.34h3.67v0.92h-3.67zM759.04 329.32h3.67v0.81h-3.67zM759.04 333.31h3.67v0.81h-3.67zM762.51 332.34h3.67v0.92h-3.67zM765.98 330.19h3.67v0.92h-3.67zM765.98 332.34h3.67v0.92h-3.67zM765.98 329.32h3.67v0.81h-3.67zM769.46 331.18h3.67v1.08h-3.67zM769.46 330.19h3.67v0.92h-3.67zM769.46 332.34h3.67v0.92h-3.67zM769.46 333.31h3.67v0.81h-3.67zM772.93 330.19h3.67v0.92h-3.67zM772.93 332.34h3.67v0.92h-3.67zM772.93 333.31h3.67v0.81h-3.67zM776.4 330.19h3.67v0.92h-3.67zM776.4 332.34h3.67v0.92h-3.67zM776.4 333.31h3.67v0.81h-3.67zM779.88 330.19h3.67v0.92h-3.67zM779.88 332.34h3.67v0.92h-3.67zM779.88 333.31h3.67v0.81h-3.67zM783.35 330.19h3.67v0.92h-3.67zM783.35 332.34h3.67v0.92h-3.67zM783.35 329.32h3.67v0.81h-3.67zM783.35 333.31h3.67v0.81h-3.67zM814.61 331.18h3.67v1.08h-3.67zM825.03 331.18h3.67v1.08h-3.67zM845.87 331.18h3.67v1.08h-3.67zM856.29 331.18h3.67v1.08h-3.67zM859.76 331.18h3.67v1.08h-3.67zM863.23 331.18h3.67v1.08h-3.67zM866.71 331.18h3.67v1.08h-3.67zM870.18 331.18h3.67v1.08h-3.67zM873.65 331.18h3.67v1.08h-3.67zM891.02 331.18h3.67v1.08h-3.67zM894.49 331.18h3.67v1.08h-3.67zM897.96 329.32h3.67v0.81h-3.67zM897.96 333.31h3.67v0.81h-3.67zM901.44 333.31h3.67v0.81h-3.67zM904.91 329.32h3.67v0.81h-3.67zM904.91 333.31h3.67v0.81h-3.67zM908.38 333.31h3.67v0.81h-3.67zM911.86 330.19h3.67v0.92h-3.67zM911.86 332.34h3.67v0.92h-3.67zM915.33 330.19h3.67v0.92h-3.67zM915.33 332.34h3.67v0.92h-3.67zM918.8 330.19h3.67v0.92h-3.67zM918.8 332.34h3.67v0.92h-3.67zM918.8 333.31h3.67v0.81h-3.67zM922.28 332.34h3.67v0.92h-3.67zM925.75 330.19h3.67v0.92h-3.67zM925.75 332.34h3.67v0.92h-3.67zM925.75 329.32h3.67v0.81h-3.67zM929.22 329.32h3.67v0.81h-3.67zM929.22 333.31h3.67v0.81h-3.67zM932.7 332.34h3.67v0.92h-3.67zM932.7 333.31h3.67v0.81h-3.67zM936.17 330.19h3.67v0.92h-3.67zM936.17 332.34h3.67v0.92h-3.67zM936.17 329.32h3.67v0.81h-3.67zM936.17 333.31h3.67v0.81h-3.67zM939.64 331.18h3.67v1.08h-3.67zM939.64 330.19h3.67v0.92h-3.67zM939.64 332.34h3.67v0.92h-3.67zM939.64 329.32h3.67v0.81h-3.67zM943.12 331.18h3.67v1.08h-3.67zM943.12 330.19h3.67v0.92h-3.67zM943.12 333.31h3.67v0.81h-3.67zM946.59 332.34h3.67v0.92h-3.67zM946.59 329.32h3.67v0.81h-3.67zM950.06 332.34h3.67v0.92h-3.67zM953.54 330.19h3.67v0.92h-3.67zM953.54 332.34h3.67v0.92h-3.67zM957.01 331.18h3.67v1.08h-3.67zM960.48 331.18h3.67v1.08h-3.67zM960.48 330.19h3.67v0.92h-3.67zM963.96 331.18h3.67v1.08h-3.67zM967.43 331.18h3.67v1.08h-3.67zM981.32 331.18h3.67v1.08h-3.67zM984.79 331.18h3.67v1.08h-3.67zM988.27 331.18h3.67v1.08h-3.67zM995.21 331.18h3.67v1.08h-3.67zM998.69 331.18h3.67v1.08h-3.67zM1002.16 331.18h3.67v1.08h-3.67zM1002.16 332.34h3.67v0.92h-3.67zM1005.63 331.18h3.67v1.08h-3.67zM1016.05 331.18h3.67v1.08h-3.67zM1026.47 332.34h3.67v0.92h-3.67zM1033.42 331.18h3.67v1.08h-3.67zM1036.89 330.19h3.67v0.92h-3.67zM1036.89 329.32h3.67v0.81h-3.67zM1068.15 331.18h3.67v1.08h-3.67zM1071.62 329.32h3.67v0.81h-3.67zM1071.62 333.31h3.67v0.81h-3.67zM1075.1 329.32h3.67v0.81h-3.67zM1075.1 333.31h3.67v0.81h-3.67zM1078.57 330.19h3.67v0.92h-3.67zM1078.57 332.34h3.67v0.92h-3.67zM1082.04 330.19h3.67v0.92h-3.67zM1082.04 332.34h3.67v0.92h-3.67zM1085.52 330.19h3.67v0.92h-3.67zM1085.52 332.34h3.67v0.92h-3.67zM1085.52 333.31h3.67v0.81h-3.67zM1088.99 330.19h3.67v0.92h-3.67zM1088.99 332.34h3.67v0.92h-3.67zM1092.46 330.19h3.67v0.92h-3.67zM1092.46 332.34h3.67v0.92h-3.67zM1092.46 333.31h3.67v0.81h-3.67zM1095.94 330.19h3.67v0.92h-3.67zM1095.94 333.31h3.67v0.81h-3.67zM1099.41 330.19h3.67v0.92h-3.67zM1099.41 329.32h3.67v0.81h-3.67zM1099.41 333.31h3.67v0.81h-3.67zM1102.88 330.19h3.67v0.92h-3.67zM1102.88 329.32h3.67v0.81h-3.67zM1109.83 330.19h3.67v0.92h-3.67zM1113.3 332.34h3.67v0.92h-3.67zM1113.3 333.31h3.67v0.81h-3.67zM1116.78 330.19h3.67v0.92h-3.67zM1116.78 332.34h3.67v0.92h-3.67zM1116.78 329.32h3.67v0.81h-3.67zM1116.78 333.31h3.67v0.81h-3.67zM1120.25 330.19h3.67v0.92h-3.67zM1120.25 329.32h3.67v0.81h-3.67zM1120.25 333.31h3.67v0.81h-3.67zM1123.72 330.19h3.67v0.92h-3.67zM1123.72 329.32h3.67v0.81h-3.67zM1123.72 333.31h3.67v0.81h-3.67zM1127.2 330.19h3.67v0.92h-3.67zM1127.2 332.34h3.67v0.92h-3.67zM1130.67 330.19h3.67v0.92h-3.67zM1130.67 332.34h3.67v0.92h-3.67zM1130.67 333.31h3.67v0.81h-3.67zM1134.14 329.32h3.67v0.81h-3.67zM1137.62 329.32h3.67v0.81h-3.67zM1137.62 333.31h3.67v0.81h-3.67zM1141.09 333.31h3.67v0.81h-3.67zM1144.56 331.18h3.67v1.08h-3.67zM1144.56 330.19h3.67v0.92h-3.67zM1144.56 332.34h3.67v0.92h-3.67zM1148.04 330.19h3.67v0.92h-3.67zM1151.51 330.19h3.67v0.92h-3.67zM1154.98 331.18h3.67v1.08h-3.67zM1154.98 330.19h3.67v0.92h-3.67zM1154.98 332.34h3.67v0.92h-3.67zM1158.46 331.18h3.67v1.08h-3.67zM1158.46 330.19h3.67v0.92h-3.67zM1158.46 332.34h3.67v0.92h-3.67zM1158.46 329.32h3.67v0.81h-3.67zM1161.93 331.18h3.67v1.08h-3.67zM1161.93 332.34h3.67v0.92h-3.67zM1165.4 330.19h3.67v0.92h-3.67zM1165.4 332.34h3.67v0.92h-3.67zM1165.4 329.32h3.67v0.81h-3.67zM1168.88 330.19h3.67v0.92h-3.67zM1172.35 331.18h3.67v1.08h-3.67zM1175.82 330.19h3.67v0.92h-3.67zM1175.82 329.32h3.67v0.81h-3.67zM1175.82 333.31h3.67v0.81h-3.67zM1179.29 330.19h3.67v0.92h-3.67zM1179.29 332.34h3.67v0.92h-3.67zM1186.24 331.18h3.67v1.08h-3.67zM1189.71 331.18h3.67v1.08h-3.67zM1193.19 331.18h3.67v1.08h-3.67zM1203.61 332.34h3.67v0.92h-3.67zM1210.55 331.18h3.67v1.08h-3.67zM1214.03 332.34h3.67v0.92h-3.67zM1231.39 332.34h3.67v0.92h-3.67zM1234.87 331.18h3.67v1.08h-3.67zM1238.34 329.32h3.67v0.81h-3.67zM1238.34 333.31h3.67v0.81h-3.67zM1241.81 333.31h3.67v0.81h-3.67zM1248.76 330.19h3.67v0.92h-3.67zM1248.76 332.34h3.67v0.92h-3.67zM1248.76 329.32h3.67v0.81h-3.67zM1248.76 333.31h3.67v0.81h-3.67zM1252.23 332.34h3.67v0.92h-3.67zM1252.23 329.32h3.67v0.81h-3.67zM1255.71 330.19h3.67v0.92h-3.67zM1255.71 332.34h3.67v0.92h-3.67zM1259.18 330.19h3.67v0.92h-3.67zM1259.18 332.34h3.67v0.92h-3.67zM1259.18 333.31h3.67v0.81h-3.67zM1262.65 330.19h3.67v0.92h-3.67zM1262.65 333.31h3.67v0.81h-3.67zM1266.12 330.19h3.67v0.92h-3.67zM1266.12 329.32h3.67v0.81h-3.67zM1266.12 333.31h3.67v0.81h-3.67zM1269.6 330.19h3.67v0.92h-3.67zM1269.6 332.34h3.67v0.92h-3.67zM1269.6 333.31h3.67v0.81h-3.67zM1273.07 333.31h3.67v0.81h-3.67zM1276.54 330.19h3.67v0.92h-3.67zM1280.02 330.19h3.67v0.92h-3.67zM1280.02 329.32h3.67v0.81h-3.67zM1280.02 333.31h3.67v0.81h-3.67zM1283.49 330.19h3.67v0.92h-3.67zM1283.49 332.34h3.67v0.92h-3.67zM1283.49 333.31h3.67v0.81h-3.67zM1286.96 332.34h3.67v0.92h-3.67zM1290.44 330.19h3.67v0.92h-3.67zM1290.44 332.34h3.67v0.92h-3.67zM1293.91 330.19h3.67v0.92h-3.67zM1293.91 333.31h3.67v0.81h-3.67zM1297.38 330.19h3.67v0.92h-3.67zM1297.38 332.34h3.67v0.92h-3.67zM1297.38 333.31h3.67v0.81h-3.67zM1300.86 332.34h3.67v0.92h-3.67zM1304.33 330.19h3.67v0.92h-3.67zM1304.33 329.32h3.67v0.81h-3.67zM1304.33 333.31h3.67v0.81h-3.67zM1307.8 330.19h3.67v0.92h-3.67zM1307.8 329.32h3.67v0.81h-3.67zM1307.8 333.31h3.67v0.81h-3.67zM1311.28 332.34h3.67v0.92h-3.67zM1311.28 333.31h3.67v0.81h-3.67zM1314.75 330.19h3.67v0.92h-3.67zM1314.75 332.34h3.67v0.92h-3.67zM1314.75 329.32h3.67v0.81h-3.67zM1314.75 333.31h3.67v0.81h-3.67zM1318.22 329.32h3.67v0.81h-3.67zM1318.22 333.31h3.67v0.81h-3.67zM1321.7 330.19h3.67v0.92h-3.67zM1321.7 332.34h3.67v0.92h-3.67zM1321.7 333.31h3.67v0.81h-3.67zM1325.17 330.19h3.67v0.92h-3.67zM1325.17 332.34h3.67v0.92h-3.67zM1325.17 333.31h3.67v0.81h-3.67zM1328.64 333.31h3.67v0.81h-3.67zM1332.12 330.19h3.67v0.92h-3.67zM1332.12 332.34h3.67v0.92h-3.67zM1332.12 329.32h3.67v0.81h-3.67zM1332.12 333.31h3.67v0.81h-3.67zM1335.59 330.19h3.67v0.92h-3.67zM1335.59 332.34h3.67v0.92h-3.67zM1339.06 330.19h3.67v0.92h-3.67zM1342.54 330.19h3.67v0.92h-3.67zM1342.54 332.34h3.67v0.92h-3.67zM1342.54 329.32h3.67v0.81h-3.67zM1342.54 333.31h3.67v0.81h-3.67zM1346.01 330.19h3.67v0.92h-3.67zM1346.01 332.34h3.67v0.92h-3.67zM1346.01 329.32h3.67v0.81h-3.67zM1346.01 333.31h3.67v0.81h-3.67zM1349.48 332.34h3.67v0.92h-3.67zM1352.96 330.19h3.67v0.92h-3.67zM1352.96 333.31h3.67v0.81h-3.67zM1356.43 331.18h3.67v1.08h-3.67zM1356.43 330.19h3.67v0.92h-3.67zM1359.9 332.34h3.67v0.92h-3.67zM1366.85 331.18h3.67v1.08h-3.67zM1366.85 330.19h3.67v0.92h-3.67zM1366.85 332.34h3.67v0.92h-3.67zM1370.32 330.19h3.67v0.92h-3.67zM1373.79 331.18h3.67v1.08h-3.67zM1377.27 331.18h3.67v1.08h-3.67zM1377.27 332.34h3.67v0.92h-3.67zM1380.74 331.18h3.67v1.08h-3.67zM1380.74 332.34h3.67v0.92h-3.67zM1384.21 331.18h3.67v1.08h-3.67zM1384.21 332.34h3.67v0.92h-3.67zM1387.69 331.18h3.67v1.08h-3.67zM1394.63 329.32h3.67v0.81h-3.67zM1394.63 333.31h3.67v0.81h-3.67zM1398.11 329.32h3.67v0.81h-3.67zM1398.11 333.31h3.67v0.81h-3.67zM1401.58 333.31h3.67v0.81h-3.67zM1405.05 329.32h3.67v0.81h-3.67zM1405.05 333.31h3.67v0.81h-3.67zM1408.53 329.32h3.67v0.81h-3.67zM1408.53 333.31h3.67v0.81h-3.67z" fill="#8cc9bb"/><path d="M245 331.18h3.67v1.08h-3.67zM248.47 331.18h3.67v1.08h-3.67zM251.95 331.18h3.67v1.08h-3.67zM251.95 332.34h3.67v0.92h-3.67zM255.42 331.18h3.67v1.08h-3.67zM258.89 331.18h3.67v1.08h-3.67zM262.37 331.18h3.67v1.08h-3.67zM262.37 332.34h3.67v0.92h-3.67zM265.84 331.18h3.67v1.08h-3.67zM265.84 330.19h3.67v0.92h-3.67zM269.31 332.34h3.67v0.92h-3.67zM272.79 331.18h3.67v1.08h-3.67zM272.79 332.34h3.67v0.92h-3.67zM276.26 331.18h3.67v1.08h-3.67zM279.73 331.18h3.67v1.08h-3.67zM283.21 331.18h3.67v1.08h-3.67zM286.68 331.18h3.67v1.08h-3.67zM286.68 330.19h3.67v0.92h-3.67zM286.68 332.34h3.67v0.92h-3.67zM290.15 331.18h3.67v1.08h-3.67zM293.62 331.18h3.67v1.08h-3.67zM297.1 331.18h3.67v1.08h-3.67zM297.1 332.34h3.67v0.92h-3.67zM300.57 331.18h3.67v1.08h-3.67zM300.57 332.34h3.67v0.92h-3.67zM304.04 331.18h3.67v1.08h-3.67zM304.04 330.19h3.67v0.92h-3.67zM307.52 331.18h3.67v1.08h-3.67zM310.99 331.18h3.67v1.08h-3.67zM314.46 331.18h3.67v1.08h-3.67zM317.94 331.18h3.67v1.08h-3.67zM324.88 331.18h3.67v1.08h-3.67zM335.3 329.32h3.67v0.81h-3.67zM335.3 333.31h3.67v0.81h-3.67zM338.78 331.18h3.67v1.08h-3.67zM342.25 331.18h3.67v1.08h-3.67zM342.25 332.34h3.67v0.92h-3.67zM345.72 331.18h3.67v1.08h-3.67zM345.72 332.34h3.67v0.92h-3.67zM349.2 331.18h3.67v1.08h-3.67zM349.2 330.19h3.67v0.92h-3.67zM352.67 331.18h3.67v1.08h-3.67zM352.67 332.34h3.67v0.92h-3.67zM359.62 330.19h3.67v0.92h-3.67zM359.62 332.34h3.67v0.92h-3.67zM404.77 330.19h3.67v0.92h-3.67zM404.77 332.34h3.67v0.92h-3.67zM408.24 330.19h3.67v0.92h-3.67zM408.24 332.34h3.67v0.92h-3.67zM408.24 333.31h3.67v0.81h-3.67zM411.71 331.18h3.67v1.08h-3.67zM415.19 331.18h3.67v1.08h-3.67zM418.66 331.18h3.67v1.08h-3.67zM418.66 332.34h3.67v0.92h-3.67zM422.13 331.18h3.67v1.08h-3.67zM425.61 331.18h3.67v1.08h-3.67zM429.08 331.18h3.67v1.08h-3.67zM432.55 330.19h3.67v0.92h-3.67zM432.55 332.34h3.67v0.92h-3.67zM436.03 331.18h3.67v1.08h-3.67zM436.03 330.19h3.67v0.92h-3.67zM436.03 332.34h3.67v0.92h-3.67zM439.5 329.32h3.67v0.81h-3.67zM442.97 330.19h3.67v0.92h-3.67zM446.45 330.19h3.67v0.92h-3.67zM446.45 332.34h3.67v0.92h-3.67zM449.92 329.32h3.67v0.81h-3.67zM449.92 333.31h3.67v0.81h-3.67zM453.39 330.19h3.67v0.92h-3.67zM453.39 332.34h3.67v0.92h-3.67zM460.34 330.19h3.67v0.92h-3.67zM460.34 332.34h3.67v0.92h-3.67zM463.81 331.18h3.67v1.08h-3.67zM467.29 331.18h3.67v1.08h-3.67zM470.76 330.19h3.67v0.92h-3.67zM470.76 332.34h3.67v0.92h-3.67zM474.23 332.34h3.67v0.92h-3.67zM477.71 332.34h3.67v0.92h-3.67zM481.18 331.18h3.67v1.08h-3.67zM481.18 330.19h3.67v0.92h-3.67zM484.65 330.19h3.67v0.92h-3.67zM488.12 331.18h3.67v1.08h-3.67zM488.12 330.19h3.67v0.92h-3.67zM488.12 332.34h3.67v0.92h-3.67zM502.02 329.32h3.67v0.81h-3.67zM502.02 333.31h3.67v0.81h-3.67zM505.49 331.18h3.67v1.08h-3.67zM508.96 331.18h3.67v1.08h-3.67zM512.44 331.18h3.67v1.08h-3.67zM515.91 331.18h3.67v1.08h-3.67zM515.91 332.34h3.67v0.92h-3.67zM519.38 331.18h3.67v1.08h-3.67zM519.38 332.34h3.67v0.92h-3.67zM522.86 331.18h3.67v1.08h-3.67zM564.54 330.19h3.67v0.92h-3.67zM571.48 332.34h3.67v0.92h-3.67zM574.96 330.19h3.67v0.92h-3.67zM574.96 332.34h3.67v0.92h-3.67zM578.43 330.19h3.67v0.92h-3.67zM581.9 331.18h3.67v1.08h-3.67zM585.38 332.34h3.67v0.92h-3.67zM588.85 331.18h3.67v1.08h-3.67zM588.85 332.34h3.67v0.92h-3.67zM592.32 331.18h3.67v1.08h-3.67zM595.79 331.18h3.67v1.08h-3.67zM599.27 331.18h3.67v1.08h-3.67zM602.74 331.18h3.67v1.08h-3.67zM602.74 330.19h3.67v0.92h-3.67zM602.74 332.34h3.67v0.92h-3.67zM606.21 331.18h3.67v1.08h-3.67zM609.69 331.18h3.67v1.08h-3.67zM609.69 332.34h3.67v0.92h-3.67zM613.16 331.18h3.67v1.08h-3.67zM613.16 332.34h3.67v0.92h-3.67zM616.63 331.18h3.67v1.08h-3.67zM623.58 331.18h3.67v1.08h-3.67zM627.05 330.19h3.67v0.92h-3.67zM627.05 332.34h3.67v0.92h-3.67zM630.53 330.19h3.67v0.92h-3.67zM630.53 332.34h3.67v0.92h-3.67zM634 332.34h3.67v0.92h-3.67zM634 333.31h3.67v0.81h-3.67zM637.47 331.18h3.67v1.08h-3.67zM640.95 331.18h3.67v1.08h-3.67zM644.42 331.18h3.67v1.08h-3.67zM654.84 331.18h3.67v1.08h-3.67zM654.84 330.19h3.67v0.92h-3.67zM658.31 331.18h3.67v1.08h-3.67zM658.31 332.34h3.67v0.92h-3.67zM661.79 331.18h3.67v1.08h-3.67zM661.79 330.19h3.67v0.92h-3.67zM665.26 331.18h3.67v1.08h-3.67zM665.26 332.34h3.67v0.92h-3.67zM668.73 331.18h3.67v1.08h-3.67zM668.73 330.19h3.67v0.92h-3.67zM682.62 331.18h3.67v1.08h-3.67zM738.2 330.19h3.67v0.92h-3.67zM741.67 330.19h3.67v0.92h-3.67zM741.67 332.34h3.67v0.92h-3.67zM745.14 331.18h3.67v1.08h-3.67zM748.62 331.18h3.67v1.08h-3.67zM752.09 331.18h3.67v1.08h-3.67zM755.56 331.18h3.67v1.08h-3.67zM755.56 332.34h3.67v0.92h-3.67zM759.04 331.18h3.67v1.08h-3.67zM762.51 331.18h3.67v1.08h-3.67zM765.98 331.18h3.67v1.08h-3.67zM772.93 331.18h3.67v1.08h-3.67zM776.4 331.18h3.67v1.08h-3.67zM779.88 331.18h3.67v1.08h-3.67zM783.35 331.18h3.67v1.08h-3.67zM897.96 330.19h3.67v0.92h-3.67zM901.44 332.34h3.67v0.92h-3.67zM904.91 330.19h3.67v0.92h-3.67zM904.91 332.34h3.67v0.92h-3.67zM908.38 331.18h3.67v1.08h-3.67zM908.38 332.34h3.67v0.92h-3.67zM911.86 331.18h3.67v1.08h-3.67zM915.33 331.18h3.67v1.08h-3.67zM918.8 331.18h3.67v1.08h-3.67zM922.28 331.18h3.67v1.08h-3.67zM925.75 331.18h3.67v1.08h-3.67zM929.22 331.18h3.67v1.08h-3.67zM932.7 331.18h3.67v1.08h-3.67zM936.17 331.18h3.67v1.08h-3.67zM946.59 331.18h3.67v1.08h-3.67zM950.06 331.18h3.67v1.08h-3.67zM953.54 331.18h3.67v1.08h-3.67zM1036.89 331.18h3.67v1.08h-3.67zM1036.89 332.34h3.67v0.92h-3.67zM1071.62 330.19h3.67v0.92h-3.67zM1078.57 331.18h3.67v1.08h-3.67zM1085.52 331.18h3.67v1.08h-3.67zM1088.99 331.18h3.67v1.08h-3.67zM1092.46 331.18h3.67v1.08h-3.67zM1095.94 332.34h3.67v0.92h-3.67zM1099.41 331.18h3.67v1.08h-3.67zM1099.41 332.34h3.67v0.92h-3.67zM1106.36 330.19h3.67v0.92h-3.67zM1106.36 332.34h3.67v0.92h-3.67zM1106.36 333.31h3.67v0.81h-3.67zM1109.83 331.18h3.67v1.08h-3.67zM1109.83 332.34h3.67v0.92h-3.67zM1113.3 331.18h3.67v1.08h-3.67zM1113.3 330.19h3.67v0.92h-3.67zM1116.78 331.18h3.67v1.08h-3.67zM1120.25 331.18h3.67v1.08h-3.67zM1120.25 332.34h3.67v0.92h-3.67zM1123.72 331.18h3.67v1.08h-3.67zM1123.72 332.34h3.67v0.92h-3.67zM1127.2 331.18h3.67v1.08h-3.67zM1130.67 331.18h3.67v1.08h-3.67zM1134.14 330.19h3.67v0.92h-3.67zM1134.14 332.34h3.67v0.92h-3.67zM1134.14 333.31h3.67v0.81h-3.67zM1141.09 330.19h3.67v0.92h-3.67zM1141.09 332.34h3.67v0.92h-3.67zM1141.09 329.32h3.67v0.81h-3.67zM1148.04 331.18h3.67v1.08h-3.67zM1151.51 331.18h3.67v1.08h-3.67zM1165.4 331.18h3.67v1.08h-3.67zM1168.88 331.18h3.67v1.08h-3.67zM1175.82 331.18h3.67v1.08h-3.67zM1179.29 331.18h3.67v1.08h-3.67zM1182.77 331.18h3.67v1.08h-3.67zM1238.34 330.19h3.67v0.92h-3.67zM1241.81 330.19h3.67v0.92h-3.67zM1245.29 330.19h3.67v0.92h-3.67zM1245.29 332.34h3.67v0.92h-3.67zM1245.29 333.31h3.67v0.81h-3.67zM1248.76 331.18h3.67v1.08h-3.67zM1252.23 331.18h3.67v1.08h-3.67zM1252.23 330.19h3.67v0.92h-3.67zM1255.71 331.18h3.67v1.08h-3.67zM1259.18 331.18h3.67v1.08h-3.67zM1262.65 332.34h3.67v0.92h-3.67zM1266.12 331.18h3.67v1.08h-3.67zM1266.12 332.34h3.67v0.92h-3.67zM1269.6 331.18h3.67v1.08h-3.67zM1273.07 331.18h3.67v1.08h-3.67zM1273.07 330.19h3.67v0.92h-3.67zM1273.07 332.34h3.67v0.92h-3.67zM1276.54 331.18h3.67v1.08h-3.67zM1276.54 332.34h3.67v0.92h-3.67zM1280.02 332.34h3.67v0.92h-3.67zM1283.49 331.18h3.67v1.08h-3.67zM1286.96 330.19h3.67v0.92h-3.67zM1290.44 331.18h3.67v1.08h-3.67zM1293.91 331.18h3.67v1.08h-3.67zM1293.91 332.34h3.67v0.92h-3.67zM1297.38 331.18h3.67v1.08h-3.67zM1300.86 331.18h3.67v1.08h-3.67zM1300.86 330.19h3.67v0.92h-3.67zM1304.33 331.18h3.67v1.08h-3.67zM1304.33 332.34h3.67v0.92h-3.67zM1307.8 331.18h3.67v1.08h-3.67zM1307.8 332.34h3.67v0.92h-3.67zM1311.28 331.18h3.67v1.08h-3.67zM1311.28 330.19h3.67v0.92h-3.67zM1314.75 331.18h3.67v1.08h-3.67zM1318.22 331.18h3.67v1.08h-3.67zM1318.22 330.19h3.67v0.92h-3.67zM1318.22 332.34h3.67v0.92h-3.67zM1321.7 331.18h3.67v1.08h-3.67zM1325.17 331.18h3.67v1.08h-3.67zM1328.64 331.18h3.67v1.08h-3.67zM1328.64 330.19h3.67v0.92h-3.67zM1328.64 332.34h3.67v0.92h-3.67zM1332.12 331.18h3.67v1.08h-3.67zM1335.59 331.18h3.67v1.08h-3.67zM1339.06 331.18h3.67v1.08h-3.67zM1339.06 332.34h3.67v0.92h-3.67zM1349.48 331.18h3.67v1.08h-3.67zM1349.48 330.19h3.67v0.92h-3.67zM1394.63 330.19h3.67v0.92h-3.67zM1394.63 332.34h3.67v0.92h-3.67zM1398.11 330.19h3.67v0.92h-3.67zM1398.11 332.34h3.67v0.92h-3.67zM1401.58 330.19h3.67v0.92h-3.67zM1401.58 332.34h3.67v0.92h-3.67zM1405.05 330.19h3.67v0.92h-3.67zM1405.05 332.34h3.67v0.92h-3.67zM1408.53 330.19h3.67v0.92h-3.67zM1408.53 332.34h3.67v0.92h-3.67z" fill="#72b4bf"/><path d="M269.31 331.18h3.67v1.08h-3.67zM335.3 330.19h3.67v0.92h-3.67zM335.3 332.34h3.67v0.92h-3.67zM359.62 331.18h3.67v1.08h-3.67zM404.77 331.18h3.67v1.08h-3.67zM408.24 331.18h3.67v1.08h-3.67zM432.55 331.18h3.67v1.08h-3.67zM439.5 330.19h3.67v0.92h-3.67zM439.5 332.34h3.67v0.92h-3.67zM442.97 331.18h3.67v1.08h-3.67zM446.45 331.18h3.67v1.08h-3.67zM449.92 330.19h3.67v0.92h-3.67zM449.92 332.34h3.67v0.92h-3.67zM453.39 331.18h3.67v1.08h-3.67zM456.87 331.18h3.67v1.08h-3.67zM460.34 331.18h3.67v1.08h-3.67zM470.76 331.18h3.67v1.08h-3.67zM474.23 331.18h3.67v1.08h-3.67zM477.71 331.18h3.67v1.08h-3.67zM484.65 331.18h3.67v1.08h-3.67zM491.6 331.18h3.67v1.08h-3.67zM502.02 330.19h3.67v0.92h-3.67zM502.02 332.34h3.67v0.92h-3.67zM564.54 331.18h3.67v1.08h-3.67zM564.54 332.34h3.67v0.92h-3.67zM571.48 330.19h3.67v0.92h-3.67zM574.96 331.18h3.67v1.08h-3.67zM578.43 331.18h3.67v1.08h-3.67zM578.43 332.34h3.67v0.92h-3.67zM585.38 331.18h3.67v1.08h-3.67zM620.11 331.18h3.67v1.08h-3.67zM627.05 331.18h3.67v1.08h-3.67zM634 330.19h3.67v0.92h-3.67zM738.2 331.18h3.67v1.08h-3.67zM738.2 332.34h3.67v0.92h-3.67zM897.96 331.18h3.67v1.08h-3.67zM897.96 332.34h3.67v0.92h-3.67zM901.44 331.18h3.67v1.08h-3.67zM901.44 330.19h3.67v0.92h-3.67zM1071.62 332.34h3.67v0.92h-3.67zM1075.1 330.19h3.67v0.92h-3.67zM1075.1 332.34h3.67v0.92h-3.67zM1082.04 331.18h3.67v1.08h-3.67zM1095.94 331.18h3.67v1.08h-3.67zM1102.88 331.18h3.67v1.08h-3.67zM1102.88 332.34h3.67v0.92h-3.67zM1106.36 331.18h3.67v1.08h-3.67zM1137.62 330.19h3.67v0.92h-3.67zM1137.62 332.34h3.67v0.92h-3.67zM1141.09 331.18h3.67v1.08h-3.67zM1238.34 332.34h3.67v0.92h-3.67zM1241.81 331.18h3.67v1.08h-3.67zM1241.81 332.34h3.67v0.92h-3.67zM1245.29 331.18h3.67v1.08h-3.67zM1262.65 331.18h3.67v1.08h-3.67zM1280.02 331.18h3.67v1.08h-3.67zM1286.96 331.18h3.67v1.08h-3.67zM1342.54 331.18h3.67v1.08h-3.67zM1346.01 331.18h3.67v1.08h-3.67zM1394.63 331.18h3.67v1.08h-3.67zM1398.11 331.18h3.67v1.08h-3.67zM1401.58 331.18h3.67v1.08h-3.67zM1405.05 331.18h3.67v1.08h-3.67zM1408.53 331.18h3.67v1.08h-3.67z" fill="#5a93cb"/><path d="M439.5 331.18h3.67v1.08h-3.67zM571.48 331.18h3.67v1.08h-3.67zM630.53 331.18h3.67v1.08h-3.67zM634 331.18h3.67v1.08h-3.67zM741.67 331.18h3.67v1.08h-3.67zM904.91 331.18h3.67v1.08h-3.67zM1071.62 331.18h3.67v1.08h-3.67zM1075.1 331.18h3.67v1.08h-3.67zM1134.14 331.18h3.67v1.08h-3.67zM1137.62 331.18h3.67v1.08h-3.67zM1238.34 331.18h3.67v1.08h-3.67z" fill="#3868d2"/><path d="M335.3 331.18h3.67v1.08h-3.67zM449.92 331.18h3.67v1.08h-3.67zM502.02 331.18h3.67v1.08h-3.67z" fill="#1f2270"/><g transform="translate(-.3 0)"><g fill="none" stroke-width="1.6" stroke-linejoin="round"><polyline points="245.4,219.7 248.5,217.65 251.6,216.86 254.8,218.07 258.6,217.49 261.7,214.8 265.2,217.28 268.7,210.32 272.1,217.02 275.7,215.38 278.8,216.01 282.7,215.22 286.6,216.44 290.5,217.28 293.6,216.86 296.7,218.07" stroke="#d4609a"/><polyline points="293.6,221.34 299.8,215.22 302.9,216.44 306.8,214.01 310.2,216.86" stroke="#a3478f"/><polyline points="309.9,221.34 313.8,217.28 316.9,220.97" stroke="#4a8fe0"/><polyline points="316,221.34 320.7,217.65 324.6,220.97" stroke="#dc5f6b"/><polyline points="323.8,221.34 327.7,217.28 330.8,220.55" stroke="#a03a6c"/><polyline points="328.5,221.34 331.6,219.33 334.7,198.46 337.8,213.17" stroke="#8c2f42"/><polyline points="335.5,221.34 338.6,219.7 341.7,209.48 345.3,214.8" stroke="#e07c70"/><polyline points="344.8,221.34 348.7,214.8 351.8,216.86" stroke="#a6a447"/><polyline points="348.7,221.34 351.8,220.12 354.9,220.28 359.1,209.9 362.7,217.65 365.8,219.7 370.4,220.97 373.5,220.97 376.6,219.7 379.8,220.28 383.2,218.91 386.7,220.55 392.2,221.34 400.7,221.34 404.3,208.69 407.7,214.38 411.3,219.33 414.7,216.44 418.3,215.22 421.7,216.44 424.8,217.02 428.4,217.28 432.1,207.05 435.7,209.48 439.1,196.41 442.3,211.11 445.7,211.96 449.3,189.03 453,208.69 456.6,211.96 460,209.06 463.6,216.01 466.7,213.17 470.6,216.44" stroke="#8d8f33"/><polyline points="467.5,221.34 470.6,218.91 473.7,213.17 477.3,216.86 480.7,215.22 484.1,216.01 487.7,211.96 491.1,210.32" stroke="#93a548"/><polyline points="488.4,221.34 490.8,220.97 494.7,214.01 497,212.75" stroke="#7a58c0"/><polyline points="493.9,221.34 497,216.01 501.3,195.99 504.8,210.69 508.2,215.22 511.4,218.49" stroke="#cc7b3c"/><polyline points="510.2,221.34 515.6,218.07 522.3,216.22 525.7,220.97" stroke="#c47238"/><polyline points="522.6,221.34 525.7,220.12 528.8,220.12 532.7,218.07 535.8,220.12 538.9,221.34" stroke="#5aaa64"/><polyline points="541.2,221.34 545.1,220.97 559.9,221.34 563.8,208.69 567.6,219.7 571.1,207.85 574.6,204.58 578.2,210.69 581.6,211.96 588.9,218.91" stroke="#9c3470"/><polyline points="585.5,220.97 588.9,218.91 595.6,217.28 598.7,211.96 601.8,216.44 605.7,217.65 609.3,216.44 612.7,216.01 616.1,210.32 619.7,214.8 623.2,213.17 626.6,203.95 630.1,207.05 633.6,213.59 637.2,212.75" stroke="#7b2b62"/><polyline points="633.9,221.34 637,220.12 640.6,217.49 644,219.33 649.4,218.07 654.8,214.38 657.6,214.22" stroke="#e283b4"/><polyline points="655.6,221.34 658,220.12 661,215.64 665,214.38 668,214.38 671.6,218.49 675,219.49 678.4,219.33" stroke="#3f7f3a"/><polyline points="678.9,221.34 685.6,217.49 689,220.12 692.4,218.33 696,219.7 699.1,221.07" stroke="#b08fd6"/><polyline points="700.7,221.07 707.6,220.55 713.1,219.86 716.6,221.18" stroke="#93993f"/><polyline points="730.9,221.34 734.3,220.97 737.6,207.42 741,214.8" stroke="#a0a040"/><polyline points="741.8,221.34 748,218.49 754.2,218.33 763.5,218.49 772.9,218.23 783,217.49 790,220.97 799.3,220.7 805.5,221.18" stroke="#4252a3"/><polyline points="808.6,221.28 817.9,220.97 824,221.28 840,221.13 852,220.97 855,221.28" stroke="#4aa585"/><polyline points="893.2,221.34 897.1,213.17 901,218.91 904.5,211.96 911.5,220.28 914.9,219.12 921.9,218.33 928.1,217.91 932,218.49 939,216.44 942.9,217.86 946,217.91 949.6,217.02 956.9,220.12 960,220.28 963.1,219.97 974,220.76 980.2,220.7 987.1,221.18 1018.2,221.18" stroke="#7f302f"/><polyline points="1020,221.18 1032.4,220.97 1036.3,215.86 1039.9,220.97 1043.3,220.28 1046.4,221.18" stroke="#cd8a55"/><polyline points="1065,221.34 1068.1,220.97 1071.2,215.22 1074.7,201.73 1078.2,219.7 1081.6,218.49 1085.2,216.44 1088.6,215.86 1091.9,218.07 1099.2,212.75 1102.3,206.21 1105.9,213.43 1109.3,213.17 1112.9,216.44 1116.3,216.86 1120.2,218.33 1123.6,217.02 1127.1,218.07 1130.2,220.55" stroke="#a9a262"/><polyline points="1127.9,221.34 1130.2,220.12 1133.7,207.42 1137.2,213.59 1140.8,204.84 1144.2,219.33 1145.8,221.34" stroke="#a43b4b"/><polyline points="1143.4,221.34 1147.6,215.38 1151.2,219.33" stroke="#5e2a22"/><polyline points="1151.2,220.97 1154.8,218.33 1158.2,220.97" stroke="#e08080"/><polyline points="1158.2,221.34 1161.6,216.86 1165.2,216.01 1168.6,212.38 1172.2,219.33" stroke="#6f6d22"/><polyline points="1169.1,221.34 1175.3,218.07 1178.9,212.75 1182.3,212.54 1186.1,220.55 1188.5,220.97 1192.4,219.33" stroke="#c472a4"/><polyline points="1192.4,221.18 1199.3,220.97 1206.3,221.18 1215.7,220.97 1220.3,220.12 1223.4,221.18 1234.3,221.18 1237.7,208.69 1241.3,211.11 1245.2,212.75 1248.3,214.8 1252.1,217.65 1255.2,218.07 1259.1,217.28 1262.2,217.49 1265.3,216.86 1269.2,213.17 1272.3,213.59 1275.9,214.54 1279.3,206.63 1283.2,215.22 1286.8,216.86 1290.2,213.17 1293.6,215.07 1296.9,207.05 1300.3,208.69 1304.2,213.59 1307.3,207.85 1311.1,216.01 1314.3,211.11 1317.8,211.96" stroke="#807c2e"/><polyline points="1314.3,221.34 1317.4,217.28 1321.2,213.59 1324.7,213.8" stroke="#5b94e3"/><polyline points="1325.1,221.34 1328.2,213.59 1331.3,220.12" stroke="#8b2b6b"/><polyline points="1328.2,221.34 1331.8,212.38 1335.2,215.86 1339.1,216.86 1342.2,217.12 1345.6,218.65 1348.9,216.86 1352.3,218.33" stroke="#3c9373"/><polyline points="1350,221.18 1356.2,220.12 1361.6,220.76 1366.3,221.18" stroke="#2a66d0"/><polyline points="1366.3,221.18 1369.7,219.12 1373.3,221.18 1376.8,221.18 1380.2,219.54 1384.1,220.76 1387.2,220.97" stroke="#d2833f"/><polyline points="1389.6,221.18 1397.3,218.07 1401.2,213.17 1404.8,201.73 1408.2,211.96 1411.8,221.34" stroke="#a382c9"/></g></g><path d="M244.700 221.4H1389.700" stroke="#9b6fc0" stroke-width="1.800"/><g transform="translate(-.3 0)"><g fill="none" stroke-width="1.6" stroke-linejoin="round"><polyline points="245.4,461.03 247.8,466.16 250.9,463.09 254.8,464.96 258.6,465.63 261.7,464.09 265.6,466.16 268.7,466.16 272.6,463.29 275.7,463.56 279.1,461.03 282.7,467.03 285.8,466.36 289.7,464.09 293.1,456.36 296.2,459.16" stroke="#d4609a"/><polyline points="293.1,475.5 296.7,466.7 302.1,465.16 306.8,463.09 310.7,462.89" stroke="#a3478f"/><polyline points="306.8,475.5 313.8,454.49 317.2,460.16" stroke="#4a8fe0"/><polyline points="313.8,475.5 317.2,464.09 320.7,462.56 324.6,464.63" stroke="#dc5f6b"/><polyline points="320.7,475.5 323.9,465.16 327.7,460.83 330,464.09" stroke="#a03a6c"/><polyline points="327.7,475.5 330.8,463.29 337.8,460.49" stroke="#8c2f42"/><polyline points="334.7,475.5 337.8,464.29 341.7,465.63 344.3,463.56" stroke="#e07c70"/><polyline points="341.7,475.5 345.3,458.42 348.7,461.49 351.8,459.96" stroke="#a6a447"/><polyline points="348.7,475.5 355.4,450.62 359.1,460.49 362.7,454.29 369.7,462.89 376.6,460.49 380.2,463.09 383.6,462.03 387,457.09 390.3,465.16 393.7,460.49 397.3,463.56 404.3,466.7 411.3,462.03 414.7,464.63 418.3,460.16 421.7,466.16 425.2,465.63 428.7,466.7 432.1,464.96 439.1,465.43 442.3,462.89 445.7,462.56 449.3,460.49 453,466.7 456.3,457.36 460,462.56 463.6,463.56 466.7,464.83 470.3,460.16" stroke="#8d8f33"/><polyline points="466.7,475.5 470.3,463.56 477.3,465.96 480.7,463.89 484.1,463.29 487.7,458.62 491.1,460.69" stroke="#93a548"/><polyline points="487.7,475.5 491.1,464.63 494.3,458.09 497.8,460.49" stroke="#7a58c0"/><polyline points="494.7,475.5 497.8,466.7 501.3,460.69 504.8,461.49 511.7,465.43" stroke="#cc7b3c"/><polyline points="508.6,475.5 511.7,465.43 515.2,464.83 518.7,457.89 522.3,448.89 525.7,456.36" stroke="#c47238"/><polyline points="522.6,475.5 525.7,465.16 529.1,462.03 532.7,461.03 536.3,457.36 539.7,463.29" stroke="#5aaa64"/><polyline points="536.3,475.5 539.7,434.61 543.1,462.89 546.7,465.96 550.2,463.56 553.7,465.16 557.1,452.22 560.7,465.16 564.2,460.16 567.6,462.03 571.1,466.7 574.6,464.09 581.6,460.29 585.5,465.63 588.6,467.23" stroke="#9c3470"/><polyline points="585,475.5 588.6,460.16 595.6,464.63 601.8,464.83 605.7,466.36 609.3,461.03 612.7,465.96 616.1,464.09 619.7,463.29 623.2,465.16 626.6,463.56 630.1,462.56 633.6,457.36 637.2,463.56" stroke="#7b2b62"/><polyline points="633.9,475.5 637,466.16 647.1,465.63 654.1,457.89 657.6,458.96" stroke="#e283b4"/><polyline points="654.5,475.5 658,466.36 661.1,466.16 664.5,459.16 668,463.56 671.6,462.03 675,465.16 678.1,466.16" stroke="#3f7f3a"/><polyline points="675.3,475.5 678.4,464.63 682,463.09 685.6,456.62 689,462.03 692.6,454.76 699.4,458.42" stroke="#b08fd6"/><polyline points="696.5,475.5 699.9,466.36 703,466.36 706.6,458.42 710,467.43 713.1,467.23 716.6,463.29 720.4,467.23 730.9,467.23 734.3,465.96 737.9,465.96 740.6,467.23" stroke="#93993f"/><polyline points="737.9,475.5 741,459.43 748,467.96 751.1,467.03 755.8,468.03 762,467.5 769.8,467.76 779.1,467.43 783,467.76 786.1,466.7 789.9,467.76 800.8,467.5 807.8,467.23 810.9,465.16 814.5,462.89 817.6,467.03" stroke="#4252a3"/><polyline points="814.5,475.5 817.9,466.7 821.3,461.03 824.9,461.69 828,461.49 831.4,465.96 835,464.83 838.4,466.16 842,465.63 845.4,467.23 848.9,467.43 852.4,465.16 855.9,467.76 858.3,467.43" stroke="#4aa585"/><polyline points="856.4,475.5 859.8,465.9 862.9,466.36 866.5,467.76 872.2,467.23 876.9,465.9 880.8,466.36 886.2,467.76 897.1,467.03 901,465.63 904.8,467.03 911.1,468.03 917.3,468.03 928.1,467.76 932,467.03 935.9,467.23 939,465.16 942.9,465.96 946,467.5 949.6,462.03 953,466.36 956.9,466.9 963.9,467.03 967,467.76 974,467.43 977.5,463.56 980.9,454.29 984.5,465.63 987.9,467.5 1001.1,467.76 1005,467.03 1016.6,467.5" stroke="#7f302f"/><polyline points="1015.9,475.5 1019,466.16 1022.9,467.76 1026.2,467.03 1029.6,467.76 1032.9,459.43 1036.8,463.09 1040.2,462.56 1043.6,459.96 1047.2,466.7 1050.7,467.43 1053.4,466.7" stroke="#cd8a55"/><polyline points="1050.7,475.5 1053.9,466.36 1057.3,465.9 1061.1,467.76 1071.2,466.9 1074.7,464.09 1078.2,463.29 1081.6,466.9 1085.2,465.63 1088.6,467.23 1092.2,466.16 1095.6,467.23 1102.3,463.29 1105.9,466.36 1109.3,465.36 1112.9,465.36 1116.3,461.03 1120.2,465.16 1123.3,466.36 1127.1,464.43 1130.2,464.96" stroke="#a9a262"/><polyline points="1126.8,475.5 1130.2,467.23 1133.7,466.7 1137.2,462.89 1140.8,463.56 1143.9,463.29" stroke="#a43b4b"/><polyline points="1140.8,475.5 1144.2,465.16 1147.6,465.9 1150.4,466.7" stroke="#5e2a22"/><polyline points="1147.6,475.5 1151.2,463.56 1154.8,460.69 1157.4,464.09" stroke="#e08080"/><polyline points="1154.8,475.5 1158.2,465.16 1161.6,460.16 1165.2,458.69 1168.6,465.16 1171.4,466.7" stroke="#6f6d22"/><polyline points="1168.8,475.5 1172.2,465.16 1175.3,458.96 1178.9,462.23 1182.3,461.83 1185.8,460.69 1189.3,437.68 1192.4,438.41" stroke="#c472a4"/><polyline points="1189.3,475.5 1192.7,438.75 1196.2,465.63 1199.8,448.35 1203.2,463.09 1206.8,467.23 1210.2,467.03 1213.6,457.09 1217.2,463.56 1220.6,459.23 1224.2,468.23 1228.1,468.03 1231.2,467.03 1234.8,468.03 1238.2,467.23 1241.3,466.7 1245.2,463.09 1248.6,463.83 1252.1,463.83 1255.7,466.7 1259.1,465.16 1262.2,463.29 1265.8,462.56 1269.2,464.63 1272.8,464.83 1276.2,458.69 1279.6,464.09 1283.2,466.16 1286.8,465.9 1290.2,464.09 1293.6,462.23 1296.9,463.56 1300.3,465.9 1304.2,463.29 1307.3,464.09 1311.1,458.96 1314.6,456.36 1317.8,464.63" stroke="#807c2e"/><polyline points="1314.6,475.5 1317.8,458.09 1321.2,463.29 1324.7,461.83" stroke="#5b94e3"/><polyline points="1325.1,475.5 1328.2,462.23 1331,466.7" stroke="#8b2b6b"/><polyline points="1328.2,475.5 1331.8,464.09 1335.2,456.02 1338.8,465.63 1342.2,458.42 1345.6,463.56 1348.9,460.29 1352.3,463.09" stroke="#3c9373"/><polyline points="1349.2,475.5 1352.6,465.16 1356.2,462.03 1359.8,460.16 1363.2,466.16 1366.3,467.23" stroke="#2a66d0"/><polyline points="1363.2,475.5 1366.6,467.43 1369.8,463.09 1373.6,467.76 1377.1,462.03 1380.7,460.69 1384.1,461.03 1387.2,467.43" stroke="#d2833f"/><polyline points="1384.1,475.5 1387.6,467.76 1390.8,461.03 1394.2,466.7 1397.6,463.09 1401.2,466.16 1404.8,465.9 1408.2,467.23 1411.8,462.03" stroke="#a382c9"/></g></g><path d="M244.700 475.3H1384.200" stroke="#9b6fc0" stroke-width="1.800"/><g transform="translate(-.3 0)"><g fill="none" stroke-width="1.6" stroke-linejoin="round"><polyline points="245.4,580.86 247.8,582.84 250.9,581.67 254.8,584.01 258.6,584.16 261.7,583.6 265.6,581.83 268.7,581.83 272.6,583.25 279.1,583.4 285.8,584.82 289.7,581.42 293.1,581.42 296.2,583.86" stroke="#d4609a"/><polyline points="293.1,602.4 296.7,583.6 302.1,581.83 306.8,581.27 310.7,582.84" stroke="#a3478f"/><polyline points="306.8,602.4 310.7,581.67 313.8,575.73 317.2,578.52" stroke="#4a8fe0"/><polyline points="313.8,602.4 317.2,580.45 320.7,581.42 323.9,581.27" stroke="#dc5f6b"/><polyline points="320.7,602.4 324.2,578.12 327.7,581.67 330.8,582.84" stroke="#a03a6c"/><polyline points="327.7,602.4 331.3,572.58 334.7,577.3 338.1,581.67" stroke="#8c2f42"/><polyline points="334.7,602.4 338.1,584.01 341.7,580.86 345.3,581.67" stroke="#e07c70"/><polyline points="341.7,602.4 345.3,582.44 348.7,583.25 351.5,583.1" stroke="#a6a447"/><polyline points="348.7,602.4 351.8,582.84 355.4,571.01 359.1,573.39 366.1,581.01 369.7,581.83 373.1,581.67 376.6,573.75 380.2,583.45 383.6,573.6 387,590.16 394.2,571.26 397.6,571.26 401,572.17 404.3,576.7 407.7,576.9 411.3,581.83 414.7,582.99 418.3,580.86 421.7,584.01 425.2,583.45 428.7,583.4 432.1,580.25 435.7,580.86 439.1,576.14 442.3,581.52 445.7,582.03 449.3,574.31 453,581.83 456.6,581.27 460,579.84 463.6,580.71 470.3,582.44" stroke="#8d8f33"/><polyline points="466.7,602.4 470.3,584.98 473.7,582.03 477.3,584.82 480.7,581.83 484.1,584.16 487.7,581.83 491.1,579.9" stroke="#93a548"/><polyline points="487.7,602.4 491.1,583.25 494.3,578.88 497.8,577.1" stroke="#7a58c0"/><polyline points="494.7,602.4 501.3,575.32 504.8,579.29 508.6,582.44 511.7,585.59" stroke="#cc7b3c"/><polyline points="508.6,602.4 511.7,584.01 515.2,584.42 518.7,586.4 522.3,583.45 525.7,582.03" stroke="#c47238"/><polyline points="522.6,602.4 525.7,582.03 529.1,579.9 532.7,580.86 536.3,577.3 539.7,580.1" stroke="#5aaa64"/><polyline points="536.3,602.4 539.7,580.86 543.1,581.83 546.7,581.27 550.2,572.33 553.7,577.71 557.1,571.82 560.7,572.02 564.2,573.39 567.6,583.6 571.1,576.9 578.2,574.16 581.6,579.29 585,585.59 588.6,586.8" stroke="#9c3470"/><polyline points="585,602.4 588.6,580.45 592,584.42 595.6,585.84 598.7,580.45 605.7,585.59 609.3,582.99 612.7,584.82 616.1,583.6 619.7,581.67 626.6,581.27 630.1,576.9 633.6,582.84 637.2,580.45" stroke="#7b2b62"/><polyline points="633.9,602.4 637,587.31 640.6,587.01 644,583.4 647.4,587.01 651,587.41 654.5,572.33 658,578.52" stroke="#e283b4"/><polyline points="654.5,602.4 658,582.59 661.1,582.84 664.5,582.03 668,582.18 671.6,581.27 675,583.6 678.4,585.59" stroke="#3f7f3a"/><polyline points="675.3,602.4 678.4,576.54 682,577.97 685.6,576.54 689,582.84 692.6,573.75 696,571.41 699.4,573.39" stroke="#b08fd6"/><polyline points="696.5,602.4 699.9,572.02 703,581.01 706.6,582.03 710,583.6 713.9,583.86 720.4,571.82 723.9,571.26 727.5,571.56 730.9,572.33 734.3,585.99 737.9,577.1 741,577.3" stroke="#93993f"/><polyline points="737.9,602.4 741,588.73 744.6,584.16 748,585.99 751.4,584.82 758.1,585.99 762,585.18 765.9,585.38 769.3,586.55 772.9,585.99 776.3,585.99 779.8,585.38 783,585.59 786.1,584.98 789.9,583.4 793.4,584.42 796.9,583.25 800.3,585.74 803.9,584.16 807.3,571.26 810.9,573.39 814.5,581.67 817.6,572.02" stroke="#4252a3"/><polyline points="814.5,602.4 817.9,585.59 821.3,583.25 824.9,571.41 828,571.56 831.4,581.01 835,571.56 838.4,574.56 842,580.86 845.4,571.41 848.9,571.41 852.4,577.3 855.9,571.56 859.5,571.01" stroke="#4aa585"/><polyline points="856.4,602.4 859.8,578.52 862.9,571.01 872.2,570.75 876.9,574.16 884.3,570.75 894.8,571.01 897.4,588.13 901,580.86 904.5,576.54 908,578.52 911.5,584.42 914.9,585.99 918.8,585.38 924.6,585.74 932,584.82 935.9,585.59 939,584.16 946,584.16 949.6,583.4 953,584.82 956.9,582.99 960,583.86 963.5,582.69 967,584.16 974,583.86 977.5,584.42 980.9,577.71 984.5,581.27 998,581.42 1001.6,582.44 1005,580.45 1012.8,583.25 1019,580.45" stroke="#7f302f"/><polyline points="1015.9,602.4 1019,581.11 1023.1,581.11 1026.2,579.69 1029.6,580.1 1032.9,578.32 1036.8,587.01 1040.2,583.25 1043.6,582.03 1047.2,572.99 1050.7,571.26 1053.4,579.29" stroke="#cd8a55"/><polyline points="1050.7,602.4 1053.9,579.29 1057.3,571.26 1060.7,571.41 1064.3,577.71 1067.8,587.31 1071.2,577.3 1074.7,574.41 1078.2,583.6 1081.6,584.57 1085.2,585.99 1088.6,585.18 1092.2,584.67 1095.6,590.31 1099.2,583.4 1102.3,582.59 1105.9,585.18 1112.9,578.68 1116.3,584.01 1120.2,582.03 1123.3,583.25 1127.1,584.16 1130.2,584.01" stroke="#a9a262"/><polyline points="1126.8,602.4 1130.2,584.16 1133.7,588.38 1137.2,582.44 1140.8,581.67 1143.9,581.83" stroke="#a43b4b"/><polyline points="1140.8,602.4 1144.2,585.74 1147.6,587.57 1151.2,591.88" stroke="#5e2a22"/><polyline points="1147.6,602.4 1151.2,581.67 1154.8,583.25 1157.9,583.6" stroke="#e08080"/><polyline points="1154.8,602.4 1158.2,583.4 1161.6,578.52 1165.2,580.1 1168.6,586.4 1170.6,586.25" stroke="#6f6d22"/><polyline points="1168.8,602.4 1172.2,579.29 1175.3,588.38 1178.9,592.09 1182.3,588.38 1189.3,580.1 1192.7,584.82" stroke="#c472a4"/><polyline points="1189.3,602.4 1192.7,581.11 1196.2,582.03 1199.8,585.99 1203.2,579.9 1206.8,581.27 1210.2,577.86 1213.6,579.29 1217.2,579.69 1220.6,580.86 1224.2,588.13 1231.2,576.14 1234.8,585.59 1238.2,576.54 1241.3,577.1 1245.2,579.44 1248.6,580.45 1252.1,582.44 1255.7,585.59 1259.1,583.86 1265.8,583.86 1269.2,584.42 1272.8,583.25 1279.6,587.01 1283.2,585.99 1286.8,586.4 1293.6,583.1 1296.9,580.86 1300.3,582.99 1304.2,584.01 1307.3,583.25 1311.1,584.16 1314.6,587.97 1317.8,591.12" stroke="#807c2e"/><polyline points="1314.6,602.4 1317.8,582.03 1321.2,584.01 1324.7,587.57" stroke="#5b94e3"/><polyline points="1325.1,602.4 1328.2,583.1 1330.1,585.18" stroke="#8b2b6b"/><polyline points="1328.2,602.4 1331.8,584.01 1335.2,585.43 1338.8,585.99 1342.2,576.9 1345.6,582.84 1348.9,579.29 1352.3,581.27" stroke="#3c9373"/><polyline points="1349.2,602.4 1352.6,585.59 1356.2,585.59 1359.8,582.84 1363.2,582.03 1366.3,583.4" stroke="#2a66d0"/><polyline points="1363.2,602.4 1366.6,585.59 1369.8,582.18 1373.6,583.25 1377.1,582.18 1380.7,583.6 1384.1,587.57 1387.2,589.55" stroke="#d2833f"/><polyline points="1384.1,602.4 1387.2,576.9 1390.8,581.11 1394.2,582.03 1397.6,585.38 1401.2,584.67 1404.8,579.29 1408.2,580.1 1411.8,582.99" stroke="#a382c9"/></g></g><path d="M244.700 602.2H1384.200" stroke="#9b6fc0" stroke-width="1.800"/><g transform="translate(-.3 0)"><g fill="none" stroke-width="1.6" stroke-linejoin="round"><polyline points="245.4,705.9 247.8,707.47 250.9,706.69 254.8,708.61 258.6,708.82 261.7,708.27 265.6,706.75 268.7,706.73 272.6,707.94 279.1,708.2 285.8,709.25 289.7,706.44 293.1,706.4 296.2,708.4" stroke="#d4609a"/><polyline points="293.1,729.3 296.7,708.21 302.1,706.72 306.8,706.24 310.7,707.51" stroke="#a3478f"/><polyline points="306.8,729.3 310.7,706.11 313.8,701.37 317.2,703.38" stroke="#4a8fe0"/><polyline points="313.8,729.3 317.2,705.45 320.7,706.23 323.9,706.15" stroke="#dc5f6b"/><polyline points="320.7,729.3 324.2,703.44 327.7,706.41 330.8,707.53" stroke="#a03a6c"/><polyline points="327.7,729.3 331.3,698.34 334.7,702.42 338.1,706.22" stroke="#8c2f42"/><polyline points="334.7,729.3 338.1,708.49 341.7,705.95 345.3,706.47" stroke="#e07c70"/><polyline points="341.7,729.3 345.3,707.29 348.7,707.95 351.5,707.87" stroke="#a6a447"/><polyline points="348.7,729.3 351.8,706.79 355.4,697.2 359.1,699.02 366.1,705.59 369.7,706.62 373.1,706.16 376.6,699.93 380.2,707.27 383.6,700.2 387,712.81 394.2,697.66 397.6,696.82 401,697.8 404.3,701.66 407.7,702.27 411.3,706.49 414.7,707.6 418.3,706.01 421.7,708.54 425.2,708.21 428.7,707.99 432.1,705.37 435.7,705.51 439.1,701.81 442.3,706.15 445.7,706.47 449.3,700.34 453,706.29 456.6,706.1 460,704.92 463.6,705.66 470.3,707.12" stroke="#8d8f33"/><polyline points="466.7,729.3 470.3,709.41 473.7,707.12 477.3,709.2 480.7,706.92 484.1,708.63 487.7,706.68 491.1,704.99" stroke="#93a548"/><polyline points="487.7,729.3 491.1,707.69 494.3,704.03 497.8,702.37" stroke="#7a58c0"/><polyline points="494.7,729.3 501.3,700.86 504.8,704.25 508.6,707.24 511.7,709.96" stroke="#cc7b3c"/><polyline points="508.6,729.3 511.7,708.74 515.2,709.16 518.7,710.72 522.3,708.26 525.7,706.96" stroke="#c47238"/><polyline points="522.6,729.3 525.7,706.71 529.1,705 532.7,705.55 536.3,702.73 539.7,704.85" stroke="#5aaa64"/><polyline points="536.3,729.3 539.7,705.83 543.1,706.59 546.7,705.75 550.2,698.44 553.7,702.29 557.1,697.58 560.7,697.54 564.2,699.18 567.6,707.54 571.1,702.24 578.2,699.85 581.6,704.34 585,709.95 588.6,711.24" stroke="#9c3470"/><polyline points="585,729.3 588.6,705.66 592,708.97 595.6,710.1 598.7,705.87 605.7,709.82 609.3,707.97 612.7,709.33 616.1,708.3 619.7,706.59 626.6,705.96 630.1,702.54 633.6,707.23 637.2,705.55" stroke="#7b2b62"/><polyline points="633.9,729.3 637,711.78 640.6,711.36 644,708.48 647.4,711.37 651,711.17 654.5,698.77 658,703.14" stroke="#e283b4"/><polyline points="654.5,729.3 658,707.4 661.1,707.57 664.5,706.9 668,706.95 671.6,706.29 675,708.31 678.4,710.05" stroke="#3f7f3a"/><polyline points="675.3,729.3 678.4,701.82 682,702.92 685.6,702.08 689,706.9 692.6,699.42 696,697.12 699.4,698.63" stroke="#b08fd6"/><polyline points="696.5,729.3 699.9,698.12 703,705.53 706.6,706.88 710,708.27 713.9,707.99 720.4,697.83 723.9,696.81 727.5,697.08 730.9,698.38 734.3,709.51 737.9,702.67 741,702.42" stroke="#93993f"/><polyline points="737.9,729.3 741,712.81 744.6,709.15 748,710.43 751.4,709.58 758.1,710.47 762,709.85 765.9,710.04 769.3,711.01 772.9,710.59 776.3,710.54 779.8,710.03 783,710.15 786.1,709.57 789.9,708.26 793.4,708.99 796.9,708.17 800.3,710.14 803.9,708.32 807.3,697.48 810.9,699.06 814.5,705.68 817.6,698.16" stroke="#4252a3"/><polyline points="814.5,729.3 817.9,710.02 821.3,707.55 824.9,697.48 828,697.49 831.4,705.02 835,697.64 838.4,700.02 842,705.02 845.4,697.36 848.9,697.19 852.4,701.89 855.9,697.3 859.5,696.58" stroke="#4aa585"/><polyline points="856.4,729.3 859.8,703.05 862.9,696.88 872.2,696.47 876.9,699.17 884.3,696.47 894.8,697.33 897.4,711.42 901,705.9 904.5,702.01 908,703.76 911.5,708.89 914.9,710.46 918.8,710.04 924.6,710.27 932,709.55 935.9,710.08 939,708.92 946,708.82 949.6,708.24 953,709.32 956.9,707.89 960,708.47 963.5,707.6 967,708.77 974,708.61 977.5,708.75 980.9,703.29 984.5,705.98 998,706.33 1001.6,707.1 1005,705.61 1012.8,707.74 1019,705.58" stroke="#7f302f"/><polyline points="1015.9,729.3 1019,706 1023.1,705.93 1026.2,704.75 1029.6,704.95 1032.9,703.87 1036.8,710.93 1040.2,708.12 1043.6,706.49 1047.2,698.73 1050.7,697.23 1053.4,703.72" stroke="#cd8a55"/><polyline points="1050.7,729.3 1053.9,703.72 1057.3,697.16 1060.7,697.2 1064.3,702.97 1067.8,710.88 1071.2,702.77 1074.7,700.29 1078.2,707.95 1081.6,709.26 1085.2,710.46 1088.6,709.82 1092.2,709.62 1095.6,714.02 1099.2,708.43 1102.3,707.54 1105.9,709.38 1112.9,704.27 1116.3,708.37 1120.2,707.01 1123.3,707.98 1127.1,708.8 1130.2,708.72" stroke="#a9a262"/><polyline points="1126.8,729.3 1130.2,709.15 1133.7,712.33 1137.2,707.48 1140.8,706.57 1143.9,706.66" stroke="#a43b4b"/><polyline points="1140.8,729.3 1144.2,710.46 1147.6,712.16 1151.2,715.78" stroke="#5e2a22"/><polyline points="1147.6,729.3 1151.2,706.63 1154.8,707.94 1157.9,708.31" stroke="#e08080"/><polyline points="1154.8,729.3 1158.2,707.8 1161.6,703.88 1165.2,705.27 1168.6,710.64 1170.6,710.81" stroke="#6f6d22"/><polyline points="1168.8,729.3 1172.2,704.93 1175.3,712.55 1178.9,715.93 1182.3,712.59 1189.3,705.66 1192.7,709.14" stroke="#c472a4"/><polyline points="1189.3,729.3 1192.7,706.06 1196.2,707 1199.8,710.09 1203.2,705.21 1206.8,705.92 1210.2,703.18 1213.6,704.24 1217.2,704.7 1220.6,706.05 1224.2,711.66 1231.2,702.34 1234.8,709.32 1238.2,702.17 1241.3,702.33 1245.2,704.37 1248.6,705.43 1252.1,707.29 1255.7,709.96 1259.1,708.65 1265.8,708.59 1269.2,709.01 1272.8,708.23 1279.6,711.29 1283.2,710.63 1286.8,710.77 1293.6,707.9 1296.9,705.97 1300.3,707.71 1304.2,708.63 1307.3,708.08 1311.1,708.99 1314.6,712.39 1317.8,715.15" stroke="#807c2e"/><polyline points="1314.6,729.3 1317.8,707 1321.2,708.78 1324.7,711.79" stroke="#5b94e3"/><polyline points="1325.1,729.3 1328.2,708 1330.1,709.66" stroke="#8b2b6b"/><polyline points="1328.2,729.3 1331.8,708.81 1335.2,710 1338.8,710.11 1342.2,702.76 1345.6,707.17 1348.9,704.55 1352.3,706" stroke="#3c9373"/><polyline points="1349.2,729.3 1352.6,710.19 1356.2,710.06 1359.8,707.71 1363.2,706.96 1366.3,708.04" stroke="#2a66d0"/><polyline points="1363.2,729.3 1366.6,709.95 1369.8,707.21 1373.6,707.9 1377.1,707.12 1380.7,708.45 1384.1,711.95 1387.2,713.76" stroke="#d2833f"/><polyline points="1384.1,729.3 1387.2,702.35 1390.8,705.85 1394.2,706.97 1397.6,709.8 1401.2,709.11 1404.8,704.58 1408.2,705.15 1411.8,707.56" stroke="#a382c9"/></g></g><path d="M244.700 729.1H1384.200" stroke="#9b6fc0" stroke-width="1.800"/><rect x="1433" y="295.2" width="8.200" height="8" fill="#2f4b7c"/><rect x="1433" y="305.7" width="8.200" height="8" fill="#2e4fa3"/><rect x="1433" y="316.2" width="8.200" height="8" fill="#2f6cc0"/><rect x="1433" y="326.7" width="8.200" height="8" fill="#4f9bb8"/><rect x="1433" y="337.2" width="8.200" height="8" fill="#90cdb6"/><text x="1430.5" y="299.5" text-anchor="end" font-size="8.600" fill="#222">2400000</text><text x="1430.5" y="323.8" text-anchor="end" font-size="8.600" fill="#222">1200000</text><text x="1430.5" y="347.9" text-anchor="end" font-size="8.600" fill="#222">1</text></svg><span class="t" style="left:279.5px;top:792.2px;font-size:12.6px;line-height:16px;color:#4b515d;letter-spacing:0.1px;">global.build_id</span><svg style="position:absolute;left:368.1px;top:797.9px;" width="9" height="5.5" viewBox="0 0 9 5.5"><path d="M0 0h8.600L4.300 5z" fill="#3a3f4a"/></svg><span class="t" style="left:450px;top:792.2px;font-size:12.6px;line-height:16px;color:#4b515d;letter-spacing:-0.95px;">COUNT</span><svg style="position:absolute;left:497.5px;top:794.2px;" width="8" height="12" viewBox="0 0 8 12"><path d="M0 4.600 4 0l4 4.600zM0 7.400h8L4 12z" fill="#b0b5bf"/></svg><span class="t" style="left:619px;top:792.2px;font-size:12.6px;line-height:16px;color:#4b515d;letter-spacing:-0.06px;">HEATMAP(Log_Duration)</span><svg style="position:absolute;left:768.3px;top:794.2px;" width="8" height="12" viewBox="0 0 8 12"><path d="M0 4.600 4 0l4 4.600zM0 7.400h8L4 12z" fill="#b0b5bf"/></svg><span class="t" style="left:873.3px;top:792.2px;font-size:12.6px;line-height:16px;color:#4b515d;letter-spacing:0.07px;">P99(duration_ms)</span><svg style="position:absolute;left:981px;top:794.2px;" width="8" height="12" viewBox="0 0 8 12"><path d="M0 4.600 4 0l4 4.600zM0 7.400h8L4 12z" fill="#b0b5bf"/></svg><span class="t" style="left:1070.4px;top:792.2px;font-size:12.6px;line-height:16px;color:#4b515d;letter-spacing:0.07px;">P50(duration_ms)</span><svg style="position:absolute;left:1178.1px;top:794.2px;" width="8" height="12" viewBox="0 0 8 12"><path d="M0 4.600 4 0l4 4.600zM0 7.400h8L4 12z" fill="#b0b5bf"/></svg><span class="t" style="left:1267px;top:792.2px;font-size:12.6px;line-height:16px;color:#4b515d;letter-spacing:-0.02px;">AVG(duration_ms)</span><svg style="position:absolute;left:1376.6px;top:794.2px;" width="8" height="12" viewBox="0 0 8 12"><path d="M0 4.600 4 0l4 4.600zM0 7.400h8L4 12z" fill="#b0b5bf"/></svg><div style="position:absolute;left:192.3px;top:813.6px;width:1261.3px;height:1.4px;background:#7c8291;"></div><div style="position:absolute;left:204.3px;top:793.3px;width:13.800px;height:13.800px;background:#3172c7;border-radius:2.500px;"><svg width="13.800" height="13.800" viewBox="0 0 14 14" style="position:absolute;left:0;top:0"><path d="M3 7.300 5.800 10 11 3.800" fill="none" stroke="#fff" stroke-width="2"/></svg></div><div style="position:absolute;left:192.3px;top:814.8px;width:1261.3px;height:33.85px;background:#f5f6fa;"></div><div style="position:absolute;left:204.3px;top:823.4px;width:13.800px;height:13.800px;background:#3172c7;border-radius:2.500px;"><svg width="13.800" height="13.800" viewBox="0 0 14 14" style="position:absolute;left:0;top:0"><path d="M3 7.300 5.800 10 11 3.800" fill="none" stroke="#fff" stroke-width="2"/></svg></div><div style="position:absolute;left:245.7px;top:821px;width:19px;height:19px;background:#9e84c0;border-radius:3.500px;"></div><span class="t" style="left:279.5px;top:822.5px;font-size:13.3px;line-height:17px;color:#343a44;font-family:'Liberation Mono', monospace;letter-spacing:-0.63px;-webkit-text-stroke:0.12px #343a44;">659,373</span><span class="t" style="left:450px;top:822.5px;font-size:13.3px;line-height:17px;color:#343a44;font-family:'Liberation Mono', monospace;letter-spacing:-0.58px;-webkit-text-stroke:0.12px #343a44;">8,974,290</span><span class="t" style="left:873.3px;top:822.5px;font-size:13.3px;line-height:17px;color:#343a44;font-family:'Liberation Mono', monospace;letter-spacing:-0.55px;-webkit-text-stroke:0.12px #343a44;">3,570.60737</span><span class="t" style="left:1070.4px;top:822.5px;font-size:13.3px;line-height:17px;color:#343a44;font-family:'Liberation Mono', monospace;letter-spacing:-0.55px;-webkit-text-stroke:0.12px #343a44;">1,532.71732</span><span class="t" style="left:1267px;top:822.5px;font-size:13.3px;line-height:17px;color:#343a44;font-family:'Liberation Mono', monospace;letter-spacing:-0.57px;-webkit-text-stroke:0.12px #343a44;">1,588.2511</span><svg style="position:absolute;left:619px;top:820.5px;" width="97" height="23" viewBox="0 0 97 23"><polyline points="0,21.5 20,21.1 26,20.5 30,18.5 34,13.5 36,5.5 38.5,1.5 41,9.5 43,18.5 47,20.5 60,20.9 75,21.1 77,20.3 79,21.1 84,20.5 86,21.2 95.6,21.2" fill="none" stroke="#9e84c0" stroke-width="1.500" stroke-linejoin="round"/></svg><div style="position:absolute;left:204.3px;top:857.25px;width:13.800px;height:13.800px;background:#3172c7;border-radius:2.500px;"><svg width="13.800" height="13.800" viewBox="0 0 14 14" style="position:absolute;left:0;top:0"><path d="M3 7.300 5.800 10 11 3.800" fill="none" stroke="#fff" stroke-width="2"/></svg></div><div style="position:absolute;left:245.7px;top:854.85px;width:19px;height:19px;background:#c5824e;border-radius:3.500px;"></div><span class="t" style="left:279.5px;top:856.35px;font-size:13.3px;line-height:17px;color:#343a44;font-family:'Liberation Mono', monospace;letter-spacing:-0.63px;-webkit-text-stroke:0.12px #343a44;">659,026</span><span class="t" style="left:450px;top:856.35px;font-size:13.3px;line-height:17px;color:#343a44;font-family:'Liberation Mono', monospace;letter-spacing:-0.58px;-webkit-text-stroke:0.12px #343a44;">1,477,994</span><span class="t" style="left:873.3px;top:856.35px;font-size:13.3px;line-height:17px;color:#343a44;font-family:'Liberation Mono', monospace;letter-spacing:-0.57px;-webkit-text-stroke:0.12px #343a44;">5,239.1299</span><span class="t" style="left:1070.4px;top:856.35px;font-size:13.3px;line-height:17px;color:#343a44;font-family:'Liberation Mono', monospace;letter-spacing:-0.55px;-webkit-text-stroke:0.12px #343a44;">1,327.93281</span><span class="t" style="left:1267px;top:856.35px;font-size:13.3px;line-height:17px;color:#343a44;font-family:'Liberation Mono', monospace;letter-spacing:-0.55px;-webkit-text-stroke:0.12px #343a44;">1,493.13722</span><svg style="position:absolute;left:619px;top:854.35px;" width="97" height="23" viewBox="0 0 97 23"><polyline points="0,21.5 18,21 24,20 28,15.5 32,8.5 36,2.5 39.5,1.5 42,13.5 45,19 47,17.5 49,20 60,20.7 95.6,21" fill="none" stroke="#c5824e" stroke-width="1.500" stroke-linejoin="round"/></svg><div style="position:absolute;left:192.3px;top:882.5px;width:1261.3px;height:33.85px;background:#f5f6fa;"></div><div style="position:absolute;left:204.3px;top:891.1px;width:13.800px;height:13.800px;background:#3172c7;border-radius:2.500px;"><svg width="13.800" height="13.800" viewBox="0 0 14 14" style="position:absolute;left:0;top:0"><path d="M3 7.300 5.800 10 11 3.800" fill="none" stroke="#fff" stroke-width="2"/></svg></div><div style="position:absolute;left:245.7px;top:888.7px;width:19px;height:19px;background:#2c5dc1;border-radius:3.500px;"></div><span class="t" style="left:279.5px;top:890.2px;font-size:13.3px;line-height:17px;color:#343a44;font-family:'Liberation Mono', monospace;letter-spacing:-0.63px;-webkit-text-stroke:0.12px #343a44;">658,488</span><span class="t" style="left:450px;top:890.2px;font-size:13.3px;line-height:17px;color:#343a44;font-family:'Liberation Mono', monospace;letter-spacing:-0.63px;-webkit-text-stroke:0.12px #343a44;">925,610</span><span class="t" style="left:873.3px;top:890.2px;font-size:13.3px;line-height:17px;color:#343a44;font-family:'Liberation Mono', monospace;letter-spacing:-0.55px;-webkit-text-stroke:0.12px #343a44;">5,301.29827</span><span class="t" style="left:1070.4px;top:890.2px;font-size:13.3px;line-height:17px;color:#343a44;font-family:'Liberation Mono', monospace;letter-spacing:-0.55px;-webkit-text-stroke:0.12px #343a44;">1,339.20098</span><span class="t" style="left:1267px;top:890.2px;font-size:13.3px;line-height:17px;color:#343a44;font-family:'Liberation Mono', monospace;letter-spacing:-0.55px;-webkit-text-stroke:0.12px #343a44;">1,479.70059</span><svg style="position:absolute;left:619px;top:888.2px;" width="97" height="23" viewBox="0 0 97 23"><polyline points="0,21.5 14,20.7 22,19.5 27,16.5 30,12.5 32,9.5 35,2 39.5,2 42,13.5 44,19 50,20.3 60,20.9 95.6,21.2" fill="none" stroke="#2c5dc1" stroke-width="1.500" stroke-linejoin="round"/></svg><div style="position:absolute;left:204.3px;top:924.95px;width:13.800px;height:13.800px;background:#3172c7;border-radius:2.500px;"><svg width="13.800" height="13.800" viewBox="0 0 14 14" style="position:absolute;left:0;top:0"><path d="M3 7.300 5.800 10 11 3.800" fill="none" stroke="#fff" stroke-width="2"/></svg></div><div style="position:absolute;left:245.7px;top:922.55px;width:19px;height:19px;background:#479078;border-radius:3.500px;"></div><span class="t" style="left:279.5px;top:924.05px;font-size:13.3px;line-height:17px;color:#343a44;font-family:'Liberation Mono', monospace;letter-spacing:-0.63px;-webkit-text-stroke:0.12px #343a44;">657,806</span><span class="t" style="left:450px;top:924.05px;font-size:13.3px;line-height:17px;color:#343a44;font-family:'Liberation Mono', monospace;letter-spacing:-0.58px;-webkit-text-stroke:0.12px #343a44;">6,978,465</span><span class="t" style="left:873.3px;top:924.05px;font-size:13.3px;line-height:17px;color:#343a44;font-family:'Liberation Mono', monospace;letter-spacing:-0.55px;-webkit-text-stroke:0.12px #343a44;">5,196.40225</span><span class="t" style="left:1070.4px;top:924.05px;font-size:13.3px;line-height:17px;color:#343a44;font-family:'Liberation Mono', monospace;letter-spacing:-0.55px;-webkit-text-stroke:0.12px #343a44;">1,463.56541</span><span class="t" style="left:1267px;top:924.05px;font-size:13.3px;line-height:17px;color:#343a44;font-family:'Liberation Mono', monospace;letter-spacing:-0.55px;-webkit-text-stroke:0.12px #343a44;">1,593.96358</span><svg style="position:absolute;left:619px;top:922.05px;" width="97" height="23" viewBox="0 0 97 23"><polyline points="0,21.5 18,21.2 24,20 28,16.5 32,10.5 35,4.5 38,1.5 40.5,7.5 43,17.5 46,20.3 60,20.8 75,21.1 77,20.2 79,21.1 95.6,21.2" fill="none" stroke="#479078" stroke-width="1.500" stroke-linejoin="round"/></svg><div style="position:absolute;left:192.3px;top:950.2px;width:1261.3px;height:33.85px;background:#f5f6fa;"></div><div style="position:absolute;left:204.3px;top:958.8px;width:13.800px;height:13.800px;background:#3172c7;border-radius:2.500px;"><svg width="13.800" height="13.800" viewBox="0 0 14 14" style="position:absolute;left:0;top:0"><path d="M3 7.300 5.800 10 11 3.800" fill="none" stroke="#fff" stroke-width="2"/></svg></div><div style="position:absolute;left:245.7px;top:956.4px;width:19px;height:19px;background:#7d3568;border-radius:3.500px;"></div><span class="t" style="left:279.5px;top:957.9px;font-size:13.3px;line-height:17px;color:#343a44;font-family:'Liberation Mono', monospace;letter-spacing:-0.63px;-webkit-text-stroke:0.12px #343a44;">657,776</span><span class="t" style="left:450px;top:957.9px;font-size:13.3px;line-height:17px;color:#343a44;font-family:'Liberation Mono', monospace;letter-spacing:-0.58px;-webkit-text-stroke:0.12px #343a44;">1,740,843</span><span class="t" style="left:873.3px;top:957.9px;font-size:13.3px;line-height:17px;color:#343a44;font-family:'Liberation Mono', monospace;letter-spacing:-0.55px;-webkit-text-stroke:0.12px #343a44;">4,196.94007</span><span class="t" style="left:1070.4px;top:957.9px;font-size:13.3px;line-height:17px;color:#343a44;font-family:'Liberation Mono', monospace;letter-spacing:-0.55px;-webkit-text-stroke:0.12px #343a44;">1,366.96058</span><span class="t" style="left:1267px;top:957.9px;font-size:13.3px;line-height:17px;color:#343a44;font-family:'Liberation Mono', monospace;letter-spacing:-0.55px;-webkit-text-stroke:0.12px #343a44;">1,467.25118</span><svg style="position:absolute;left:619px;top:955.9px;" width="97" height="23" viewBox="0 0 97 23"><polyline points="0,21.5 18,20.7 24,19.5 28,17.5 31,12.5 33.5,2.5 36,0.5 39,9.5 41.5,17.5 45,19.7 60,20.8 75,21 77,20 79,21 95.6,21.2" fill="none" stroke="#7d3568" stroke-width="1.500" stroke-linejoin="round"/></svg><div style="position:absolute;left:204.3px;top:992.65px;width:13.800px;height:13.800px;background:#3172c7;border-radius:2.500px;"><svg width="13.800" height="13.800" viewBox="0 0 14 14" style="position:absolute;left:0;top:0"><path d="M3 7.300 5.800 10 11 3.800" fill="none" stroke="#fff" stroke-width="2"/></svg></div><div style="position:absolute;left:245.7px;top:990.25px;width:19px;height:19px;background:#5f90d9;border-radius:3.500px;"></div><span class="t" style="left:279.5px;top:991.75px;font-size:13.3px;line-height:17px;color:#343a44;font-family:'Liberation Mono', monospace;letter-spacing:-0.63px;-webkit-text-stroke:0.12px #343a44;">657,532</span><span class="t" style="left:450px;top:991.75px;font-size:13.3px;line-height:17px;color:#343a44;font-family:'Liberation Mono', monospace;letter-spacing:-0.58px;-webkit-text-stroke:0.12px #343a44;">4,055,010</span><span class="t" style="left:873.3px;top:991.75px;font-size:13.3px;line-height:17px;color:#343a44;font-family:'Liberation Mono', monospace;letter-spacing:-0.55px;-webkit-text-stroke:0.12px #343a44;">5,122.50785</span><span class="t" style="left:1070.4px;top:991.75px;font-size:13.3px;line-height:17px;color:#343a44;font-family:'Liberation Mono', monospace;letter-spacing:-0.55px;-webkit-text-stroke:0.12px #343a44;">1,295.42128</span><span class="t" style="left:1267px;top:991.75px;font-size:13.3px;line-height:17px;color:#343a44;font-family:'Liberation Mono', monospace;letter-spacing:-0.55px;-webkit-text-stroke:0.12px #343a44;">1,448.67645</span><svg style="position:absolute;left:619px;top:989.75px;" width="97" height="23" viewBox="0 0 97 23"><polyline points="0,21.5 14,20.9 20,20 25,15.5 28,10.5 31,6.5 33,7 35,2.5 39.5,2 42,14.5 45,19.5 60,20.7 80,21 95.6,20.5" fill="none" stroke="#5f90d9" stroke-width="1.500" stroke-linejoin="round"/></svg><div style="position:absolute;left:192.3px;top:1017.9px;width:1261.3px;height:33.85px;background:#f5f6fa;"></div><div style="position:absolute;left:204.3px;top:1026.5px;width:13.800px;height:13.800px;background:#3172c7;border-radius:2.500px;"><svg width="13.800" height="13.800" viewBox="0 0 14 14" style="position:absolute;left:0;top:0"><path d="M3 7.300 5.800 10 11 3.800" fill="none" stroke="#fff" stroke-width="2"/></svg></div><div style="position:absolute;left:245.7px;top:1024.1px;width:19px;height:19px;background:#827a38;border-radius:3.500px;"></div><span class="t" style="left:279.5px;top:1025.6px;font-size:13.3px;line-height:17px;color:#343a44;font-family:'Liberation Mono', monospace;letter-spacing:-0.63px;-webkit-text-stroke:0.12px #343a44;">656,893</span><span class="t" style="left:450px;top:1025.6px;font-size:13.3px;line-height:17px;color:#343a44;font-family:'Liberation Mono', monospace;letter-spacing:-0.57px;-webkit-text-stroke:0.12px #343a44;">41,066,569</span><span class="t" style="left:873.3px;top:1025.6px;font-size:13.3px;line-height:17px;color:#343a44;font-family:'Liberation Mono', monospace;letter-spacing:-0.55px;-webkit-text-stroke:0.12px #343a44;">4,420.45174</span><span class="t" style="left:1070.4px;top:1025.6px;font-size:13.3px;line-height:17px;color:#343a44;font-family:'Liberation Mono', monospace;letter-spacing:-0.55px;-webkit-text-stroke:0.12px #343a44;">1,401.45776</span><span class="t" style="left:1267px;top:1025.6px;font-size:13.3px;line-height:17px;color:#343a44;font-family:'Liberation Mono', monospace;letter-spacing:-0.55px;-webkit-text-stroke:0.12px #343a44;">1,518.92127</span><svg style="position:absolute;left:619px;top:1023.6px;" width="97" height="23" viewBox="0 0 97 23"><polyline points="0,21.5 18,21 24,19.5 28,14.5 32,7.5 36,1.5 38.5,0.5 41,9.5 44,18.5 48,20.5 60,21 95.6,21.2" fill="none" stroke="#827a38" stroke-width="1.500" stroke-linejoin="round"/></svg><div style="position:absolute;left:204.3px;top:1060.35px;width:13.800px;height:13.800px;background:#3172c7;border-radius:2.500px;"><svg width="13.800" height="13.800" viewBox="0 0 14 14" style="position:absolute;left:0;top:0"><path d="M3 7.300 5.800 10 11 3.800" fill="none" stroke="#fff" stroke-width="2"/></svg></div><div style="position:absolute;left:245.7px;top:1057.95px;width:19px;height:19px;background:#b5719b;border-radius:3.500px;"></div><span class="t" style="left:279.5px;top:1059.45px;font-size:13.3px;line-height:17px;color:#343a44;font-family:'Liberation Mono', monospace;letter-spacing:-0.63px;-webkit-text-stroke:0.12px #343a44;">656,330</span><span class="t" style="left:450px;top:1059.45px;font-size:13.3px;line-height:17px;color:#343a44;font-family:'Liberation Mono', monospace;letter-spacing:-0.58px;-webkit-text-stroke:0.12px #343a44;">5,576,736</span><span class="t" style="left:873.3px;top:1059.45px;font-size:13.3px;line-height:17px;color:#343a44;font-family:'Liberation Mono', monospace;letter-spacing:-0.55px;-webkit-text-stroke:0.12px #343a44;">5,740.68049</span><span class="t" style="left:1070.4px;top:1059.45px;font-size:13.3px;line-height:17px;color:#343a44;font-family:'Liberation Mono', monospace;letter-spacing:-0.55px;-webkit-text-stroke:0.12px #343a44;">1,083.19814</span><span class="t" style="left:1267px;top:1059.45px;font-size:13.3px;line-height:17px;color:#343a44;font-family:'Liberation Mono', monospace;letter-spacing:-0.55px;-webkit-text-stroke:0.12px #343a44;">1,368.54742</span><svg style="position:absolute;left:619px;top:1057.45px;" width="97" height="23" viewBox="0 0 97 23"><polyline points="0,21.5 18,21 24,19.5 28,14.5 32,7.5 36,1.5 38.5,0.5 41,9.5 44,18.5 48,20.5 60,21 95.6,21.2" fill="none" stroke="#b5719b" stroke-width="1.500" stroke-linejoin="round"/></svg><div style="position:absolute;left:1453.6px;top:766.6px;width:9px;height:304px;background:linear-gradient(90deg,rgba(60,64,80,.10),rgba(60,64,80,0));"></div><div style="position:absolute;left:-.400px;top:0"><div style="position:absolute;left:1482px;top:1px;width:411.8px;height:1071.6px;background:#f5f7fb;border-radius:0 1.500px 5px 0;"></div><span class="t" style="left:1503px;top:32.8px;font-size:17px;line-height:22px;color:#2b3340;letter-spacing:-0.04px;-webkit-text-stroke:0.25px #2b3340;">Details</span><span class="t" style="left:1581px;top:32.8px;font-size:17px;line-height:22px;color:#4a5160;letter-spacing:0.06px;">My history</span><span class="t" style="left:1685.6px;top:32.8px;font-size:17px;line-height:22px;color:#4a5160;letter-spacing:0.15px;">Team activity</span><div style="position:absolute;left:1490px;top:65.7px;width:387.6px;height:1.3px;background:#e6e9f0;"></div><div style="position:absolute;left:1490px;top:64.6px;width:78px;height:3px;background:#3a85d9;"></div><span class="t" style="left:1507.5px;top:74.5px;font-size:25.4px;line-height:33px;color:#2b3340;letter-spacing:0.12px;-webkit-text-stroke:0.55px #2b3340;">retriever-traces</span><span class="t" style="left:1507.5px;top:123.5px;font-size:14.7px;line-height:19px;color:#444a55;letter-spacing:-0.03px;">trace-level data of the retriever read path <i>and more</i>.</span><span class="t" style="left:1507.5px;top:143.1px;font-size:14.7px;line-height:19px;color:#444a55;letter-spacing:0.1px;">traces from basset and poodle</span><span class="t" style="left:1507.5px;top:180.5px;font-size:14.7px;line-height:19px;color:#39404c;font-weight:700;letter-spacing:-0.49px;">Data Last Received</span><span class="t" style="left:1507.5px;top:201.5px;font-size:14.7px;line-height:19px;color:#444a55;letter-spacing:0.02px;">less than 10 min ago</span><span class="t" style="left:1507.5px;top:245.8px;font-size:14.7px;line-height:19px;color:#2f74c7;letter-spacing:-0.04px;">Go to Dataset Settings</span><span class="t" style="left:1507.5px;top:290.5px;font-size:14.7px;line-height:19px;color:#2b3340;font-weight:700;letter-spacing:-0.73px;">SCHEMA</span><div style="position:absolute;left:1499px;top:319px;width:369.6px;height:37.6px;background:#fff;border:1.300px solid #d5dae6;border-radius:4px;box-sizing:border-box;"></div><span class="t" style="left:1508.6px;top:329px;font-size:14.7px;line-height:19px;color:#6b7280;letter-spacing:-0.01px;">Filter schema</span><svg style="position:absolute;left:1502.4px;top:382.6px;" width="5" height="8" viewBox="0 0 5 8"><path d="M0 0 4.600 4 0 8z" fill="#3a3f4a"/></svg><div style="position:absolute;left:1515.7px;top:380px;width:28.4px;height:13.2px;border:1px solid #5a5f6a;border-radius:3px;box-sizing:border-box;"></div><span class="t" style="left:1523.65px;top:380.2px;font-size:10.4px;line-height:14px;color:#555b66;letter-spacing:0.76px;">int</span><span class="t" style="left:1551.4px;top:377.6px;font-size:14.7px;line-height:19px;color:#3a404b;letter-spacing:0.02px;">app.bucket_count</span><svg style="position:absolute;left:1502.4px;top:424.9px;" width="5" height="8" viewBox="0 0 5 8"><path d="M0 0 4.600 4 0 8z" fill="#3a3f4a"/></svg><div style="position:absolute;left:1515.7px;top:422.3px;width:28.4px;height:13.2px;border:1px solid #5a5f6a;border-radius:3px;box-sizing:border-box;"></div><span class="t" style="left:1524.65px;top:422.5px;font-size:10.4px;line-height:14px;color:#555b66;letter-spacing:1.2px;">flt</span><span class="t" style="left:1551.4px;top:419.9px;font-size:14.7px;line-height:19px;color:#3a404b;letter-spacing:-0.12px;">app.bundle_file_size</span><svg style="position:absolute;left:1502.4px;top:467.2px;" width="5" height="8" viewBox="0 0 5 8"><path d="M0 0 4.600 4 0 8z" fill="#3a3f4a"/></svg><div style="position:absolute;left:1515.7px;top:464.6px;width:28.4px;height:13.2px;border:1px solid #5a5f6a;border-radius:3px;box-sizing:border-box;"></div><span class="t" style="left:1523.4px;top:464.8px;font-size:10.4px;line-height:14px;color:#555b66;letter-spacing:0.73px;">str</span><span class="t" style="left:1551.4px;top:462.2px;font-size:14.7px;line-height:19px;color:#3a404b;letter-spacing:-0.08px;">app.cache.key</span><svg style="position:absolute;left:1502.4px;top:509.5px;" width="5" height="8" viewBox="0 0 5 8"><path d="M0 0 4.600 4 0 8z" fill="#3a3f4a"/></svg><div style="position:absolute;left:1515.7px;top:506.9px;width:28.4px;height:13.2px;border:1px solid #5a5f6a;border-radius:3px;box-sizing:border-box;"></div><span class="t" style="left:1519.15px;top:507.1px;font-size:10.4px;line-height:14px;color:#555b66;letter-spacing:0.61px;">bool</span><span class="t" style="left:1551.4px;top:504.5px;font-size:14.7px;line-height:19px;color:#3a404b;letter-spacing:0.1px;">app.cold</span><svg style="position:absolute;left:1502.4px;top:551.8px;" width="5" height="8" viewBox="0 0 5 8"><path d="M0 0 4.600 4 0 8z" fill="#3a3f4a"/></svg><div style="position:absolute;left:1515.7px;top:549.2px;width:28.4px;height:13.2px;border:1px solid #5a5f6a;border-radius:3px;box-sizing:border-box;"></div><span class="t" style="left:1523.65px;top:549.4px;font-size:10.4px;line-height:14px;color:#555b66;letter-spacing:0.76px;">int</span><span class="t" style="left:1551.4px;top:546.8px;font-size:14.7px;line-height:19px;color:#3a404b;letter-spacing:0.03px;">app.cold_segments</span><svg style="position:absolute;left:1502.4px;top:594.1px;" width="5" height="8" viewBox="0 0 5 8"><path d="M0 0 4.600 4 0 8z" fill="#3a3f4a"/></svg><div style="position:absolute;left:1515.7px;top:591.5px;width:28.4px;height:13.2px;border:1px solid #5a5f6a;border-radius:3px;box-sizing:border-box;"></div><span class="t" style="left:1524.65px;top:591.7px;font-size:10.4px;line-height:14px;color:#555b66;letter-spacing:1.2px;">flt</span><span class="t" style="left:1551.4px;top:589.1px;font-size:14.7px;line-height:19px;color:#3a404b;letter-spacing:0.02px;">app.columns_compact_open_ms</span><svg style="position:absolute;left:1502.4px;top:636.4px;" width="5" height="8" viewBox="0 0 5 8"><path d="M0 0 4.600 4 0 8z" fill="#3a3f4a"/></svg><div style="position:absolute;left:1515.7px;top:633.8px;width:28.4px;height:13.2px;border:1px solid #5a5f6a;border-radius:3px;box-sizing:border-box;"></div><span class="t" style="left:1524.65px;top:634px;font-size:10.4px;line-height:14px;color:#555b66;letter-spacing:1.2px;">flt</span><span class="t" style="left:1551.4px;top:631.4px;font-size:14.7px;line-height:19px;color:#3a404b;letter-spacing:-0.01px;">app.columns_dict_open_ms</span><svg style="position:absolute;left:1502.4px;top:678.7px;" width="5" height="8" viewBox="0 0 5 8"><path d="M0 0 4.600 4 0 8z" fill="#3a3f4a"/></svg><div style="position:absolute;left:1515.7px;top:676.1px;width:28.4px;height:13.2px;border:1px solid #5a5f6a;border-radius:3px;box-sizing:border-box;"></div><span class="t" style="left:1524.65px;top:676.3px;font-size:10.4px;line-height:14px;color:#555b66;letter-spacing:1.2px;">flt</span><span class="t" style="left:1551.4px;top:673.7px;font-size:14.7px;line-height:19px;color:#3a404b;letter-spacing:-0.04px;">app.columns_open_ms</span><svg style="position:absolute;left:1502.4px;top:721px;" width="5" height="8" viewBox="0 0 5 8"><path d="M0 0 4.600 4 0 8z" fill="#3a3f4a"/></svg><div style="position:absolute;left:1515.7px;top:718.4px;width:28.4px;height:13.2px;border:1px solid #5a5f6a;border-radius:3px;box-sizing:border-box;"></div><span class="t" style="left:1523.65px;top:718.6px;font-size:10.4px;line-height:14px;color:#555b66;letter-spacing:0.76px;">int</span><span class="t" style="left:1551.4px;top:716px;font-size:14.7px;line-height:19px;color:#3a404b;letter-spacing:-0.09px;">app.concurrency_queue_depth</span><svg style="position:absolute;left:1502.4px;top:763.3px;" width="5" height="8" viewBox="0 0 5 8"><path d="M0 0 4.600 4 0 8z" fill="#3a3f4a"/></svg><div style="position:absolute;left:1515.7px;top:760.7px;width:28.4px;height:13.2px;border:1px solid #5a5f6a;border-radius:3px;box-sizing:border-box;"></div><span class="t" style="left:1523.65px;top:760.9px;font-size:10.4px;line-height:14px;color:#555b66;letter-spacing:0.76px;">int</span><span class="t" style="left:1551.4px;top:758.3px;font-size:14.7px;line-height:19px;color:#3a404b;letter-spacing:-0.12px;">app.concurrency_queue_size</span><svg style="position:absolute;left:1502.4px;top:805.6px;" width="5" height="8" viewBox="0 0 5 8"><path d="M0 0 4.600 4 0 8z" fill="#3a3f4a"/></svg><div style="position:absolute;left:1515.7px;top:803px;width:28.4px;height:13.2px;border:1px solid #5a5f6a;border-radius:3px;box-sizing:border-box;"></div><span class="t" style="left:1524.65px;top:803.2px;font-size:10.4px;line-height:14px;color:#555b66;letter-spacing:1.2px;">flt</span><span class="t" style="left:1551.4px;top:800.6px;font-size:14.7px;line-height:19px;color:#3a404b;letter-spacing:-0.03px;">app.cumulative_file_size</span><svg style="position:absolute;left:1502.4px;top:847.9px;" width="5" height="8" viewBox="0 0 5 8"><path d="M0 0 4.600 4 0 8z" fill="#3a3f4a"/></svg><div style="position:absolute;left:1515.7px;top:845.3px;width:28.4px;height:13.2px;border:1px solid #5a5f6a;border-radius:3px;box-sizing:border-box;"></div><span class="t" style="left:1523.65px;top:845.5px;font-size:10.4px;line-height:14px;color:#555b66;letter-spacing:0.76px;">int</span><span class="t" style="left:1551.4px;top:842.9px;font-size:14.7px;line-height:19px;color:#3a404b;letter-spacing:0.04px;">app.dataset_count</span><svg style="position:absolute;left:1502.4px;top:890.2px;" width="5" height="8" viewBox="0 0 5 8"><path d="M0 0 4.600 4 0 8z" fill="#3a3f4a"/></svg><div style="position:absolute;left:1515.7px;top:887.6px;width:28.4px;height:13.2px;border:1px solid #5a5f6a;border-radius:3px;box-sizing:border-box;"></div><span class="t" style="left:1523.65px;top:887.8px;font-size:10.4px;line-height:14px;color:#555b66;letter-spacing:0.76px;">int</span><span class="t" style="left:1551.4px;top:885.2px;font-size:14.7px;line-height:19px;color:#3a404b;letter-spacing:-0.03px;">app.dataset_id</span><svg style="position:absolute;left:1502.4px;top:932.5px;" width="5" height="8" viewBox="0 0 5 8"><path d="M0 0 4.600 4 0 8z" fill="#3a3f4a"/></svg><div style="position:absolute;left:1515.7px;top:929.9px;width:28.4px;height:13.2px;border:1px solid #5a5f6a;border-radius:3px;box-sizing:border-box;"></div><span class="t" style="left:1523.4px;top:930.1px;font-size:10.4px;line-height:14px;color:#555b66;letter-spacing:0.73px;">str</span><span class="t" style="left:1551.4px;top:927.5px;font-size:14.7px;line-height:19px;color:#3a404b;">app.dataset_path</span><svg style="position:absolute;left:1502.4px;top:974.8px;" width="5" height="8" viewBox="0 0 5 8"><path d="M0 0 4.600 4 0 8z" fill="#3a3f4a"/></svg><div style="position:absolute;left:1515.7px;top:972.2px;width:28.4px;height:13.2px;border:1px solid #5a5f6a;border-radius:3px;box-sizing:border-box;"></div><span class="t" style="left:1523.65px;top:972.4px;font-size:10.4px;line-height:14px;color:#555b66;letter-spacing:0.76px;">int</span><span class="t" style="left:1551.4px;top:969.8px;font-size:14.7px;line-height:19px;color:#3a404b;letter-spacing:-0.04px;">app.dataset_version</span><svg style="position:absolute;left:1502.4px;top:1017.1px;" width="5" height="8" viewBox="0 0 5 8"><path d="M0 0 4.600 4 0 8z" fill="#3a3f4a"/></svg><div style="position:absolute;left:1515.7px;top:1014.5px;width:28.4px;height:13.2px;border:1px solid #5a5f6a;border-radius:3px;box-sizing:border-box;"></div><span class="t" style="left:1524.65px;top:1014.7px;font-size:10.4px;line-height:14px;color:#555b66;letter-spacing:1.2px;">flt</span><span class="t" style="left:1551.4px;top:1012.1px;font-size:14.7px;line-height:19px;color:#3a404b;letter-spacing:-0.19px;">app.derived_cache_hit_rate_avg</span><div style="position:absolute;left:1499px;top:1034.8px;width:378.6px;height:1.2px;background:#3a3f4a;"></div><svg style="position:absolute;left:1506.5px;top:1046px;" width="23" height="18" viewBox="0 0 23 18"><path d="M.5 9h16M10.500 3l6 6-6 6M21 .5v17" fill="none" stroke="#2f3540" stroke-width="1.500"/></svg></div><div style="position:absolute;left:0;top:0;width:1894.800px;height:1074px;box-sizing:border-box;border:1.400px solid #e0e5ef;border-radius:2.500px 2.500px 6.500px 6.500px;pointer-events:none;"></div></section></body></html>
